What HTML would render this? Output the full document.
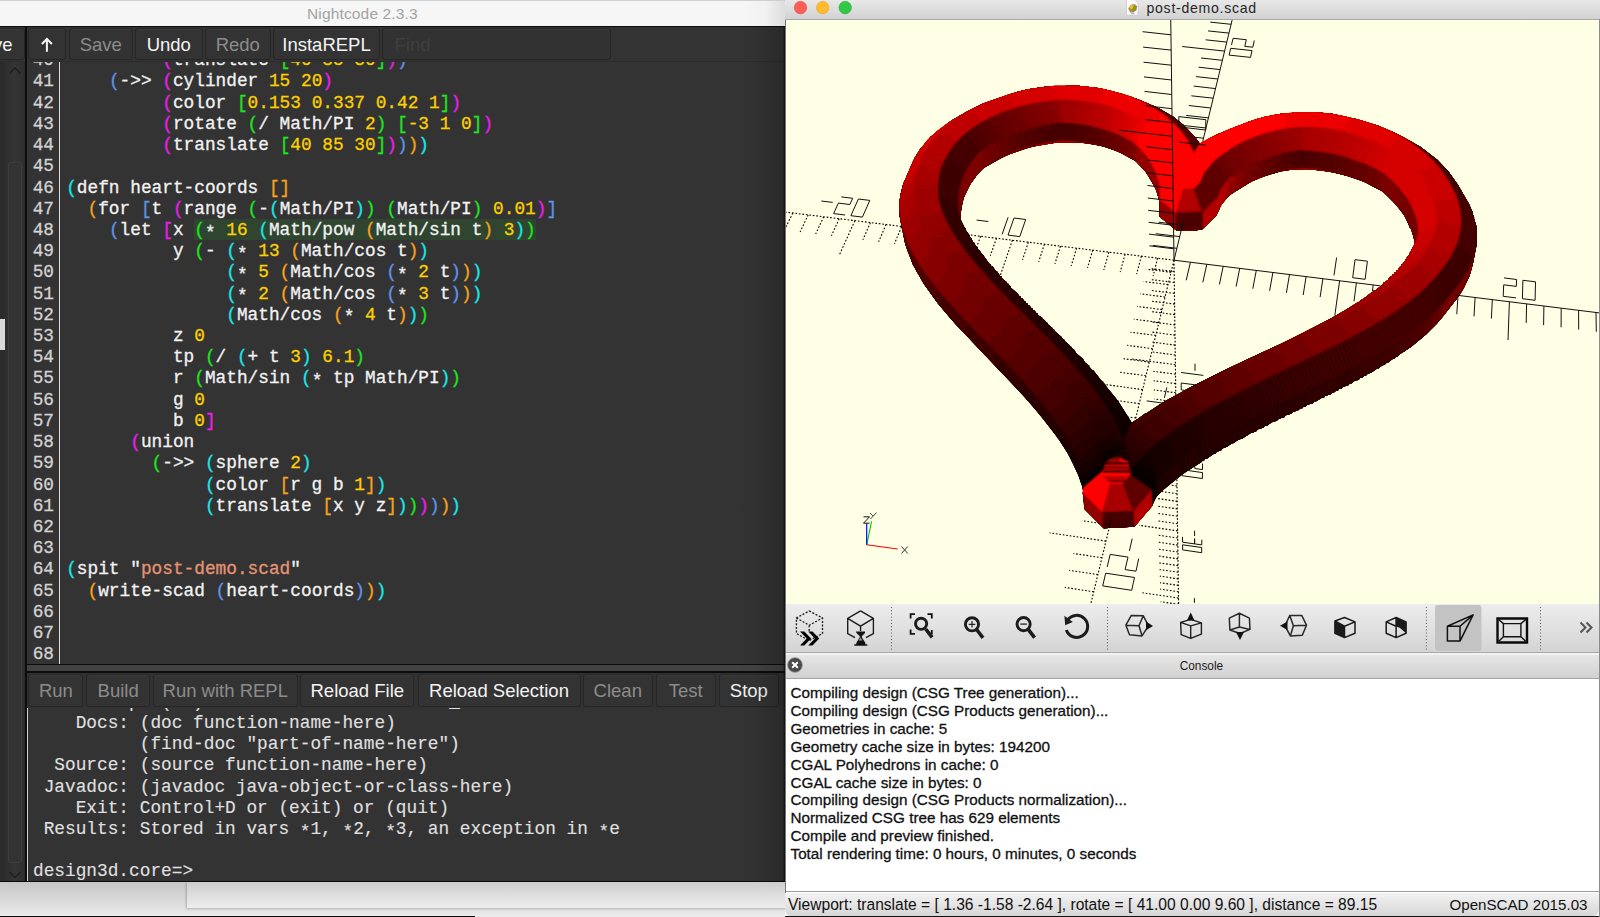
<!DOCTYPE html>
<html><head><meta charset="utf-8"><style>
*{margin:0;padding:0;box-sizing:border-box}
html,body{width:1600px;height:917px;overflow:hidden;background:#e4e4e4;position:relative}
body{font-family:"Liberation Sans",sans-serif}
pre{font-family:"Liberation Mono",monospace;-webkit-text-stroke:0.3px}
i{font-style:normal} b.as{font-weight:normal;position:relative;top:2.6px}
#nc{position:absolute;left:0;top:0;width:785px;height:882px;background:#2c2c2c;overflow:hidden}
#nctitle{position:absolute;left:0;top:0;width:785px;height:25.5px;background:#f6f6f6;border-top:1px solid #cfcfcf}
#nctitle span{position:absolute;left:307px;top:3.9px;font-size:15.5px;color:#a3a3a3;letter-spacing:0.15px;white-space:nowrap}
#ncblk{position:absolute;left:0;top:25.5px;width:785px;height:1.7px;background:#0c0c0c}
#nctool{position:absolute;left:0;top:27.2px;width:785px;height:34.3px;background:#333333}
.btn{position:absolute;top:1px;height:32.3px;background:#333333;border:1px solid #262626;border-radius:3px;box-shadow:inset 0 1px 0 #3b3b3b}
.btn span{position:absolute;left:0;right:0;text-align:center;top:5.3px;font-size:18.5px;color:#f4f4f4;white-space:nowrap}
.btn.dis span{color:#8c8c8c}
.btn.find{background:#323232;border-color:#252525}
.btn.find span{left:12px;right:auto;color:#3f3f3f}
#ncleft{position:absolute;left:0;top:61.5px;width:24.7px;height:820px;background:#2b2b2b}
#sbtrack{position:absolute;left:5px;top:0;width:19px;height:820px;background:linear-gradient(90deg,#2d2d2d,#353535 50%,#2f2f2f)}
#sbthumb{position:absolute;left:8.4px;top:100.5px;width:13.6px;height:701px;border:1px solid #3d3d3d;border-radius:3px;background:#333}
#whiteblk{position:absolute;left:0;top:257px;width:5px;height:31.5px;background:#d9d9d9}
#ncdiv{position:absolute;left:24.7px;top:27.2px;width:2.3px;height:855px;background:#0d0d0d}
#editor{position:absolute;left:27px;top:61.5px;width:758px;height:602.1px;background:#333333;overflow:hidden}
#gutter{position:absolute;left:0;width:27px;top:-11.30px;font-size:17.797px;line-height:21.22px;color:#d2d2d2;text-align:right}
#gline{position:absolute;left:32.2px;top:0;width:1.2px;height:602px;background:#dadada}
#hl{position:absolute;left:167.1px;top:157.75px;width:341.69999999999993px;height:20.7px;background:#2f4530}
#code{position:absolute;left:39.20px;top:-11.30px;font-size:17.797px;line-height:21.22px;color:#f2f2f2}
#split{position:absolute;left:27px;top:663.6px;width:758px;height:9.5px;background:#0c0c0c}
#split:after{content:"";position:absolute;left:0;top:1.9px;width:758px;height:6px;background:#434343}
#replbar{position:absolute;left:27px;top:673px;width:758px;height:35px;background:#313131}
#replbar .btn{top:0.6px;height:33px}
#replbar .btn span{top:5.6px}
#repl{position:absolute;left:27px;top:708px;width:758px;height:173px;background:#333333;overflow:hidden}
#rline{position:absolute;left:0;top:0;width:1.2px;height:173px;background:#d0d0d0}
#rtext{position:absolute;left:6px;top:-16.32px;font-size:17.797px;line-height:21.22px;color:#e0e0e0;-webkit-text-stroke:0.1px}
.c{color:#19e6e6} .o{color:#f7a21b} .b{color:#5e93e8} .m{color:#ee1bee} .g{color:#1ee51e} .y{color:#fcd000} .s{color:#e59474}
#below{position:absolute;left:0;top:882.4px;width:785px;height:34.6px;background:linear-gradient(#c6c6c6,#ececec)}
#belowpanel{position:absolute;left:186.6px;top:0;width:600px;height:25.6px;background:linear-gradient(#cdcdcd,#eeeeee);box-shadow:-1px 1px 2px rgba(0,0,0,0.22)}
#nctshadow{position:absolute;left:745px;top:1px;width:40px;height:24.5px;background:linear-gradient(90deg,rgba(0,0,0,0) 0,rgba(0,0,0,0.02) 50%,rgba(0,0,0,0.1) 100%)}
#ncshadow{position:absolute;left:735px;top:25.5px;width:50px;height:856.5px;background:linear-gradient(90deg,rgba(0,0,0,0) 0,rgba(0,0,0,0.03) 40%,rgba(0,0,0,0.2) 96%,rgba(0,0,0,0.75) 100%)}
#ncbot{position:absolute;left:0;top:880.8px;width:785px;height:1.6px;background:#0b0b0b}
#blkline{position:absolute;left:0;top:915.5px;width:475.4px;height:1.5px;background:#0a0a0a}


#sc{position:absolute;left:785px;top:0;width:815px;height:917px;background:#fff;overflow:hidden}
#sctitle{position:absolute;left:0;top:0;width:815px;height:19.6px;background:linear-gradient(#e8e8e8,#d2d2d2);border-bottom:1px solid #a9a9a9}
#sctitle span{position:absolute;left:361.5px;top:0.3px;font-size:14.1px;color:#262626;letter-spacing:0.72px;white-space:nowrap}
#vpwrap{position:absolute;left:0;top:19.6px;width:814px;height:584.2px;overflow:hidden}
#vpwrap svg{top:-0.6px!important;left:0!important}
#sc:after{content:"";position:absolute;left:813.5px;top:19px;width:1.5px;height:898px;background:#8c8c8c}
#sc:before{content:"";position:absolute;left:0;top:19.6px;width:1px;height:873px;background:#777;z-index:5}
#sctool{position:absolute;left:0;top:603.8px;width:815px;height:48.8px;background:linear-gradient(#ededed,#d4d4d4);border-bottom:1.6px solid #a8a8a8}
#conhead{position:absolute;left:0;top:652.5px;width:815px;height:26px;background:linear-gradient(#f2f2f2 0,#f2f2f2 1.5px,#e6e6e6 2px,#d1d1d1);border-bottom:1px solid #a5a5a5}
#conhead span{position:absolute;left:394.7px;top:6.3px;font-size:11.85px;color:#1a1a1a;white-space:nowrap}
#console{position:absolute;left:0;top:679px;width:813.5px;height:213px;background:#fff;border-bottom:1.3px solid #9e9e9e}
#console pre{position:absolute;left:5.5px;top:5.3px;font-family:"Liberation Sans",sans-serif;font-size:15.25px;line-height:17.84px;color:#111}
#status{position:absolute;left:0;top:893px;width:813.5px;height:23px;background:linear-gradient(#f3f3f3,#d6d6d6);border-bottom-left-radius:6px;border-bottom-right-radius:6px}
#scbot{position:absolute;left:0;top:916px;width:815px;height:1px;background:#111}
#st1{position:absolute;left:3px;top:3.2px;font-size:15.58px;color:#111;white-space:nowrap}
#st2{position:absolute;right:11px;top:3.4px;font-size:15.15px;color:#111;white-space:nowrap}
</style></head>
<body>

<div id="nc">
  <div id="nctitle"><span>Nightcode 2.3.3</span></div>
  <div id="ncblk"></div>
  <div id="nctool">
    <div class="btn" style="left:-40px;width:64.5px"><span style="left:auto;right:11px;text-align:right">ve</span></div>
    <div class="btn" style="left:28px;width:38px"><svg width="38" height="32" style="position:absolute;left:-1px;top:-1px"><path d="M18.9 23.8V10.9 M13.9 16L18.9 11L23.9 16" stroke="#f4f4f4" stroke-width="2" fill="none"/></svg></div>
    <div class="btn dis" style="left:69px;width:63.5px"><span>Save</span></div>
    <div class="btn" style="left:135px;width:67.5px"><span>Undo</span></div>
    <div class="btn dis" style="left:204.5px;width:66.5px"><span>Redo</span></div>
    <div class="btn" style="left:273px;width:107px"><span>InstaREPL</span></div>
    <div class="btn find" style="left:381.5px;width:229.5px"><span>Find</span></div>
  </div>
  <div id="ncleft">
    <div id="sbtrack"></div>
    <div id="sbthumb"></div>
    <svg id="chev" width="24" height="820" style="position:absolute;left:0;top:0">
      <path d="M9.5 11.5 L15 6 L20.5 11.5" stroke="#1e1e1e" stroke-width="1.3" fill="none"/>
      <path d="M9.5 810 L15 815.5 L20.5 810" stroke="#1e1e1e" stroke-width="1.3" fill="none"/>
    </svg>
    <div id="whiteblk"></div>
  </div>
  <div id="ncdiv"></div>
  <div id="editor">
    <pre id="gutter">40
41
42
43
44
45
46
47
48
49
50
51
52
53
54
55
56
57
58
59
60
61
62
63
64
65
66
67
68</pre>
    <div id="gline"></div>
    <div id="hl"></div>
    <pre id="code">         <i class="m">(</i>translate <i class="g">[</i><i class="y">40</i> <i class="y">85</i> <i class="y">30</i><i class="g">]</i><i class="m">)</i><i class="b">)</i>
    <i class="b">(</i>-&gt;&gt; <i class="m">(</i>cylinder <i class="y">15</i> <i class="y">20</i><i class="m">)</i>
         <i class="m">(</i>color <i class="g">[</i><i class="y">0.153</i> <i class="y">0.337</i> <i class="y">0.42</i> <i class="y">1</i><i class="g">]</i><i class="m">)</i>
         <i class="m">(</i>rotate <i class="g">(</i>/ Math/PI <i class="y">2</i><i class="g">)</i> <i class="g">[</i><i class="y">-3</i> <i class="y">1</i> <i class="y">0</i><i class="g">]</i><i class="m">)</i>
         <i class="m">(</i>translate <i class="g">[</i><i class="y">40</i> <i class="y">85</i> <i class="y">30</i><i class="g">]</i><i class="m">)</i><i class="b">)</i><i class="o">)</i><i class="c">)</i>

<i class="c">(</i>defn heart-coords <i class="o">[</i><i class="o">]</i>
  <i class="o">(</i>for <i class="b">[</i>t <i class="m">(</i>range <i class="g">(</i>-<i class="c">(</i>Math/PI<i class="c">)</i><i class="g">)</i> <i class="g">(</i>Math/PI<i class="g">)</i> <i class="y">0.01</i><i class="m">)</i><i class="b">]</i>
    <i class="b">(</i>let <i class="m">[</i>x <i class="g">(</i><b class="as">*</b> <i class="y">16</i> <i class="c">(</i>Math/pow <i class="o">(</i>Math/sin t<i class="o">)</i> <i class="y">3</i><i class="c">)</i><i class="g">)</i>
          y <i class="g">(</i>- <i class="c">(</i><b class="as">*</b> <i class="y">13</i> <i class="o">(</i>Math/cos t<i class="o">)</i><i class="c">)</i>
               <i class="c">(</i><b class="as">*</b> <i class="y">5</i> <i class="o">(</i>Math/cos <i class="b">(</i><b class="as">*</b> <i class="y">2</i> t<i class="b">)</i><i class="o">)</i><i class="c">)</i>
               <i class="c">(</i><b class="as">*</b> <i class="y">2</i> <i class="o">(</i>Math/cos <i class="b">(</i><b class="as">*</b> <i class="y">3</i> t<i class="b">)</i><i class="o">)</i><i class="c">)</i>
               <i class="c">(</i>Math/cos <i class="o">(</i><b class="as">*</b> <i class="y">4</i> t<i class="o">)</i><i class="c">)</i><i class="g">)</i>
          z <i class="y">0</i>
          tp <i class="g">(</i>/ <i class="c">(</i>+ t <i class="y">3</i><i class="c">)</i> <i class="y">6.1</i><i class="g">)</i>
          r <i class="g">(</i>Math/sin <i class="c">(</i><b class="as">*</b> tp Math/PI<i class="c">)</i><i class="g">)</i>
          g <i class="y">0</i>
          b <i class="y">0</i><i class="m">]</i>
      <i class="m">(</i>union
        <i class="g">(</i>-&gt;&gt; <i class="c">(</i>sphere <i class="y">2</i><i class="c">)</i>
             <i class="c">(</i>color <i class="o">[</i>r g b <i class="y">1</i><i class="o">]</i><i class="c">)</i>
             <i class="c">(</i>translate <i class="o">[</i>x y z<i class="o">]</i><i class="c">)</i><i class="g">)</i><i class="m">)</i><i class="b">)</i><i class="o">)</i><i class="c">)</i>


<i class="c">(</i>spit &quot;<i class="s">post-demo.scad</i>&quot;
  <i class="o">(</i>write-scad <i class="b">(</i>heart-coords<i class="b">)</i><i class="o">)</i><i class="c">)</i>


</pre>
  </div>
  <div id="split"></div>
  <div id="replbar">
    <div class="btn dis" style="left:1.4px;width:55px"><span>Run</span></div>
    <div class="btn dis" style="left:59px;width:64.3px"><span>Build</span></div>
    <div class="btn dis" style="left:126px;width:144.5px"><span>Run with REPL</span></div>
    <div class="btn" style="left:273.3px;width:114px"><span>Reload File</span></div>
    <div class="btn" style="left:390.5px;width:163px"><span>Reload Selection</span></div>
    <div class="btn dis" style="left:556px;width:69.5px"><span>Clean</span></div>
    <div class="btn dis" style="left:629px;width:59.5px"><span>Test</span></div>
    <div class="btn" style="left:691.7px;width:60.3px"><span>Stop</span></div>
  </div>
  <div id="repl"><div id="rline"></div><pre id="rtext">Java HotSpot(TM) 64-Bit Server VM 1.8.0_66-b17
    Docs: (doc function-name-here)
          (find-doc &quot;part-of-name-here&quot;)
  Source: (source function-name-here)
 Javadoc: (javadoc java-object-or-class-here)
    Exit: Control+D or (exit) or (quit)
 Results: Stored in vars <b class="as">*</b>1, <b class="as">*</b>2, <b class="as">*</b>3, an exception in <b class="as">*</b>e

design3d.core=&gt;</pre></div>
</div>
<div id="ncbot"></div><div id="ncshadow"></div><div id="nctshadow"></div>
<div id="below"><div id="belowpanel"></div></div><div id="blkline"></div>


<div id="sc">
  <div id="sctitle">
    <svg width="80" height="19" style="position:absolute;left:0;top:0">
      <circle cx="15.5" cy="7.6" r="6.3" fill="#fc5f57" stroke="#e0443e" stroke-width="0.5"/>
      <circle cx="37.7" cy="7.6" r="6.3" fill="#fdbb2f" stroke="#dea123" stroke-width="0.5"/>
      <circle cx="60.2" cy="7.6" r="6.3" fill="#33c748" stroke="#1dad2b" stroke-width="0.5"/>
    </svg>
    <svg width="16" height="17" style="position:absolute;left:340px;top:0">
      <path d="M1.5 -0.5h8.5l3 3.5v12.2h-11.5Z" fill="#fbfbfb" stroke="#c4c4c4" stroke-width="0.7"/>
      <path d="M3.2 8.5l2.8-3.8l3.5-0.6l2.6 2.2l-0.6 4l-3 2.3l-3.2-0.2Z" fill="#b08a4a"/>
      <path d="M4.5 7.5l2-2.5l2.8 0.4l-0.6 3.2l-2.6 0.5Z" fill="#f2c21a"/>
      <path d="M8.6 5.6l2.5 1.5l-0.8 3l-2 1.2l-0.5-2.8Z" fill="#7a9a22"/>
      <path d="M6.2 13.7h3.2" stroke="#888" stroke-width="0.8"/>
    </svg>
    <span>post-demo.scad</span>
  </div>
  <div id="vpwrap"><svg id="vp" width="815" height="585" viewBox="785 19 815 585" style="position:absolute;left:0;top:0">
<rect x="785" y="19" width="815" height="585" fill="#ffffe5"/>
<g fill-rule="evenodd"><path fill="#010000" d="M900.2 195.8 899.2 206.8 899.8 216.8 905.2 243.8 912.8 264.2 923.8 283.8 938.2 303.8 954.8 323.2 1022.8 394.8 1037.2 411.2 1056.8 436.2 1067.8 453.2 1078.8 475.8 1083.2 489.8 1082.8 493.2 1084.8 509.2 1103.8 528.2 1134.2 526.8 1151.2 507.2 1156.8 496.2 1163.2 489.8 1185.2 472.2 1201.2 462.2 1202.8 460.2 1204.2 460.2 1205.2 458.8 1206.8 458.8 1213.8 453.8 1215.2 453.8 1216.8 451.8 1221.2 450.2 1222.8 448.2 1227.2 446.8 1231.8 443.2 1233.2 443.2 1238.2 439.8 1242.8 438.2 1251.2 432.8 1253.2 432.8 1254.2 431.2 1256.2 431.2 1257.8 429.2 1263.2 427.8 1264.8 425.8 1266.8 425.8 1271.8 422.2 1276.8 420.8 1278.8 418.8 1284.2 417.2 1285.8 415.2 1291.2 413.8 1292.8 411.8 1294.8 411.8 1296.2 410.2 1298.2 410.2 1300.2 408.2 1302.2 408.2 1303.2 406.8 1305.2 406.8 1307.2 404.8 1312.8 403.2 1314.2 401.2 1316.2 401.2 1321.8 397.8 1323.8 397.8 1325.2 395.8 1330.8 394.2 1332.2 392.2 1334.2 392.2 1335.8 390.8 1338.2 390.2 1339.2 388.8 1341.2 388.8 1343.2 386.8 1348.2 385.2 1349.8 383.2 1351.8 383.2 1353.8 381.2 1358.8 379.8 1360.2 377.8 1362.2 377.8 1363.8 375.8 1365.8 375.8 1366.8 374.2 1371.8 372.2 1377.2 368.2 1378.8 368.2 1380.2 366.2 1385.2 364.2 1386.2 362.8 1387.8 362.8 1392.8 358.8 1394.2 358.8 1395.8 356.8 1397.2 356.8 1398.8 354.8 1411.2 346.8 1426.2 334.2 1437.2 323.2 1459.8 294.8 1469.2 276.8 1472.8 264.2 1476.8 243.8 1476.2 225.8 1473.8 217.8 1474.2 217.2 1472.2 213.2 1472.8 212.8 1468.8 203.8 1457.8 184.8 1448.2 171.2 1437.2 159.8 1420.2 146.8 1398.8 134.8 1378.2 125.8 1357.2 119.2 1331.8 113.8 1315.2 112.2 1294.8 112.2 1290.8 113.2 1283.8 113.2 1265.2 116.8 1251.2 120.8 1218.8 133.8 1199.8 143.8 1194.8 136.8 1183.2 124.8 1173.2 116.8 1157.8 107.8 1137.8 99.2 1121.8 93.8 1099.8 88.2 1078.2 85.8 1048.8 86.2 1028.2 89.2 1017.8 91.8 983.8 103.2 970.2 109.8 951.2 120.8 930.8 136.8 919.8 149.8 914.8 157.8 903.2 184.2ZM960.2 215.8 963.2 198.8 969.8 184.8 977.8 173.8 983.2 168.2 1006.2 155.2 1031.2 146.8 1053.2 142.8 1077.8 142.2 1088.2 143.2 1104.8 146.8 1119.8 152.2 1136.8 161.8 1146.2 172.2 1155.8 188.8 1159.8 202.2 1159.8 216.8 1176.2 230.2 1193.8 230.8 1202.2 229.2 1216.8 214.8 1221.2 204.8 1229.2 195.2 1251.8 181.2 1262.2 176.8 1282.8 170.8 1294.8 169.2 1310.2 169.2 1330.2 171.8 1350.8 176.8 1364.2 181.8 1383.2 191.8 1398.2 206.8 1405.2 216.8 1410.2 228.2 1411.2 228.8 1414.2 239.2 1414.8 244.2 1412.8 247.2 1412.8 248.8 1411.8 249.2 1411.8 250.8 1409.2 253.8 1409.2 255.2 1407.8 256.2 1403.2 263.8 1401.8 264.2 1401.8 265.8 1398.2 268.8 1398.2 269.8 1396.2 270.8 1396.2 271.8 1394.2 272.8 1394.2 273.8 1392.2 274.8 1392.2 275.8 1390.2 276.8 1387.8 280.2 1383.8 282.8 1383.2 284.2 1375.8 290.2 1373.8 290.8 1373.2 292.2 1371.2 292.8 1368.2 295.8 1360.8 300.2 1359.8 301.8 1321.8 323.8 1286.8 341.2 1223.2 370.8 1183.8 390.8 1183.2 391.8 1163.2 402.2 1131.8 422.8 1118.2 401.2 1105.2 385.2 1105.2 384.2 1103.2 382.8 1103.2 381.8 1101.8 381.2 1093.2 370.2 1092.2 370.2 1089.2 366.8 1089.2 365.8 1085.2 362.8 1082.8 358.8 1076.2 353.2 1073.8 349.2 1072.8 349.2 1071.2 346.8 1070.2 346.8 1068.8 344.2 1067.8 344.2 1066.8 342.2 1065.2 341.8 1064.2 339.8 1062.8 339.2 1061.8 337.2 1054.8 331.2 1054.2 329.8 1052.2 329.2 1052.2 327.8 1050.8 327.2 1049.8 325.2 1048.2 324.8 1047.2 322.8 1046.2 322.8 1044.8 320.2 1042.2 318.8 1042.2 317.8 1038.2 315.2 1037.2 313.2 1035.8 312.8 1034.8 310.8 1033.2 310.2 1032.2 308.2 1030.8 307.8 1029.8 305.8 1028.2 305.2 1027.2 303.2 1026.2 303.2 1025.2 301.2 1023.8 300.8 1022.8 298.8 1021.2 298.2 1020.2 296.2 1018.8 295.8 1017.8 293.8 1010.8 287.8 1010.8 286.2 1009.8 286.2 1008.2 283.8 1007.2 283.8 1006.2 281.8 1001.8 278.2 1001.8 276.8 1000.2 276.2 997.2 271.8 995.8 271.2 992.8 266.8 991.2 266.2 990.8 264.2 989.2 263.8 983.2 255.2 981.2 253.8 979.8 250.8 977.8 249.2 977.8 247.8 974.8 244.8 974.2 242.8 972.8 241.8 971.2 238.2 969.8 237.2 969.8 235.8 965.8 230.2 965.8 228.8 964.8 228.2 960.2 218.8Z"/>
<path fill="#060000" d="M900.2 195.8 899.2 206.8 899.8 216.8 905.2 243.8 912.8 264.2 923.8 283.8 938.2 303.8 954.8 323.2 1022.8 394.8 1037.2 411.2 1056.8 436.2 1067.8 453.2 1078.8 475.8 1083.2 489.8 1082.8 493.2 1084.8 509.2 1103.8 528.2 1134.2 526.8 1151.2 507.2 1156.8 496.2 1163.2 489.8 1185.2 472.2 1201.2 462.2 1202.8 460.2 1204.2 460.2 1205.2 458.8 1206.8 458.8 1213.8 453.8 1215.2 453.8 1216.8 451.8 1221.2 450.2 1222.8 448.2 1227.2 446.8 1231.8 443.2 1233.2 443.2 1238.2 439.8 1242.8 438.2 1251.2 432.8 1253.2 432.8 1254.2 431.2 1256.2 431.2 1257.8 429.2 1263.2 427.8 1264.8 425.8 1266.8 425.8 1271.8 422.2 1276.8 420.8 1278.8 418.8 1284.2 417.2 1285.8 415.2 1291.2 413.8 1292.8 411.8 1294.8 411.8 1296.2 410.2 1298.2 410.2 1300.2 408.2 1302.2 408.2 1303.2 406.8 1305.2 406.8 1307.2 404.8 1312.8 403.2 1314.2 401.2 1316.2 401.2 1321.8 397.8 1323.8 397.8 1325.2 395.8 1330.8 394.2 1332.2 392.2 1334.2 392.2 1335.8 390.8 1338.2 390.2 1339.2 388.8 1341.2 388.8 1343.2 386.8 1348.2 385.2 1349.8 383.2 1351.8 383.2 1353.8 381.2 1358.8 379.8 1360.2 377.8 1362.2 377.8 1363.8 375.8 1365.8 375.8 1366.8 374.2 1371.8 372.2 1377.2 368.2 1378.8 368.2 1380.2 366.2 1385.2 364.2 1386.2 362.8 1387.8 362.8 1392.8 358.8 1394.2 358.8 1395.8 356.8 1397.2 356.8 1398.8 354.8 1411.2 346.8 1426.2 334.2 1437.2 323.2 1459.8 294.8 1469.2 276.8 1472.8 264.2 1476.8 243.8 1476.2 225.8 1473.8 217.8 1474.2 217.2 1472.2 213.2 1472.8 212.8 1468.8 203.8 1457.8 184.8 1448.2 171.2 1437.2 159.8 1420.2 146.8 1398.8 134.8 1378.2 125.8 1357.2 119.2 1331.8 113.8 1315.2 112.2 1294.8 112.2 1290.8 113.2 1283.8 113.2 1265.2 116.8 1251.2 120.8 1218.8 133.8 1199.8 143.8 1194.8 136.8 1183.2 124.8 1173.2 116.8 1157.8 107.8 1137.8 99.2 1121.8 93.8 1099.8 88.2 1078.2 85.8 1048.8 86.2 1028.2 89.2 1017.8 91.8 983.8 103.2 970.2 109.8 951.2 120.8 930.8 136.8 919.8 149.8 914.8 157.8 903.2 184.2ZM960.2 215.8 963.2 198.8 969.8 184.8 977.8 173.8 983.2 168.2 1006.2 155.2 1031.2 146.8 1053.2 142.8 1077.8 142.2 1088.2 143.2 1104.8 146.8 1119.8 152.2 1136.8 161.8 1146.2 172.2 1155.8 188.8 1159.8 202.2 1159.8 216.8 1176.2 230.2 1193.8 230.8 1202.2 229.2 1216.8 214.8 1221.2 204.8 1229.2 195.2 1251.8 181.2 1262.2 176.8 1282.8 170.8 1294.8 169.2 1310.2 169.2 1330.2 171.8 1350.8 176.8 1364.2 181.8 1383.2 191.8 1398.2 206.8 1405.2 216.8 1410.2 228.2 1411.2 228.8 1414.2 239.2 1414.8 244.2 1412.8 247.2 1412.8 248.8 1411.8 249.2 1411.8 250.8 1409.2 253.8 1409.2 255.2 1407.8 256.2 1403.2 263.8 1401.8 264.2 1401.8 265.8 1398.2 268.8 1398.2 269.8 1396.2 270.8 1396.2 271.8 1394.2 272.8 1394.2 273.8 1392.2 274.8 1392.2 275.8 1390.2 276.8 1387.8 280.2 1383.8 282.8 1383.2 284.2 1375.8 290.2 1373.8 290.8 1373.2 292.2 1371.2 292.8 1368.2 295.8 1360.8 300.2 1359.8 301.8 1321.8 323.8 1286.8 341.2 1223.2 370.8 1183.8 390.8 1183.2 391.8 1163.2 402.2 1131.8 422.8 1118.2 401.2 1105.2 385.2 1105.2 384.2 1103.2 382.8 1103.2 381.8 1101.8 381.2 1093.2 370.2 1092.2 370.2 1089.2 366.8 1089.2 365.8 1085.2 362.8 1082.8 358.8 1076.2 353.2 1073.8 349.2 1072.8 349.2 1071.2 346.8 1070.2 346.8 1068.8 344.2 1067.8 344.2 1066.8 342.2 1065.2 341.8 1064.2 339.8 1062.8 339.2 1061.8 337.2 1054.8 331.2 1054.2 329.8 1052.2 329.2 1052.2 327.8 1050.8 327.2 1049.8 325.2 1048.2 324.8 1047.2 322.8 1046.2 322.8 1044.8 320.2 1042.2 318.8 1042.2 317.8 1038.2 315.2 1037.2 313.2 1035.8 312.8 1034.8 310.8 1033.2 310.2 1032.2 308.2 1030.8 307.8 1029.8 305.8 1028.2 305.2 1027.2 303.2 1026.2 303.2 1025.2 301.2 1023.8 300.8 1022.8 298.8 1021.2 298.2 1020.2 296.2 1018.8 295.8 1017.8 293.8 1010.8 287.8 1010.8 286.2 1009.8 286.2 1008.2 283.8 1007.2 283.8 1006.2 281.8 1001.8 278.2 1001.8 276.8 1000.2 276.2 997.2 271.8 995.8 271.2 992.8 266.8 991.2 266.2 990.8 264.2 989.2 263.8 983.2 255.2 981.2 253.8 979.8 250.8 977.8 249.2 977.8 247.8 974.8 244.8 974.2 242.8 972.8 241.8 971.2 238.2 969.8 237.2 969.8 235.8 965.8 230.2 965.8 228.8 964.8 228.2 960.2 218.8Z"/>
<path fill="#0a0000" d="M900.2 195.8 899.2 206.8 899.8 216.8 905.2 243.8 912.8 264.2 923.8 283.8 938.2 303.8 954.8 323.2 1022.8 394.8 1037.2 411.2 1056.8 436.2 1067.8 453.2 1078.8 475.8 1083.2 489.8 1082.8 493.2 1084.8 509.2 1103.8 528.2 1134.2 526.8 1151.2 507.2 1156.8 496.2 1163.2 489.8 1185.2 472.2 1201.2 462.2 1202.8 460.2 1204.2 460.2 1205.2 458.8 1206.8 458.8 1213.8 453.8 1215.2 453.8 1216.8 451.8 1221.2 450.2 1222.8 448.2 1227.2 446.8 1231.8 443.2 1233.2 443.2 1238.2 439.8 1242.8 438.2 1251.2 432.8 1253.2 432.8 1254.2 431.2 1256.2 431.2 1257.8 429.2 1263.2 427.8 1264.8 425.8 1266.8 425.8 1271.8 422.2 1276.8 420.8 1278.8 418.8 1284.2 417.2 1285.8 415.2 1291.2 413.8 1292.8 411.8 1294.8 411.8 1296.2 410.2 1298.2 410.2 1300.2 408.2 1302.2 408.2 1303.2 406.8 1305.2 406.8 1307.2 404.8 1312.8 403.2 1314.2 401.2 1316.2 401.2 1321.8 397.8 1323.8 397.8 1325.2 395.8 1330.8 394.2 1332.2 392.2 1334.2 392.2 1335.8 390.8 1338.2 390.2 1339.2 388.8 1341.2 388.8 1343.2 386.8 1348.2 385.2 1349.8 383.2 1351.8 383.2 1353.8 381.2 1358.8 379.8 1360.2 377.8 1362.2 377.8 1363.8 375.8 1365.8 375.8 1366.8 374.2 1371.8 372.2 1377.2 368.2 1378.8 368.2 1380.2 366.2 1385.2 364.2 1386.2 362.8 1387.8 362.8 1392.8 358.8 1394.2 358.8 1395.8 356.8 1397.2 356.8 1398.8 354.8 1411.2 346.8 1426.2 334.2 1437.2 323.2 1459.8 294.8 1469.2 276.8 1472.8 264.2 1476.8 243.8 1476.2 225.8 1473.8 217.8 1474.2 217.2 1472.2 213.2 1472.8 212.8 1468.8 203.8 1457.8 184.8 1448.2 171.2 1437.2 159.8 1420.2 146.8 1398.8 134.8 1378.2 125.8 1357.2 119.2 1331.8 113.8 1315.2 112.2 1294.8 112.2 1290.8 113.2 1283.8 113.2 1265.2 116.8 1251.2 120.8 1218.8 133.8 1199.8 143.8 1194.8 136.8 1183.2 124.8 1173.2 116.8 1157.8 107.8 1137.8 99.2 1121.8 93.8 1099.8 88.2 1078.2 85.8 1048.8 86.2 1028.2 89.2 1017.8 91.8 983.8 103.2 970.2 109.8 951.2 120.8 930.8 136.8 919.8 149.8 914.8 157.8 903.2 184.2ZM1134.8 468.2 1136.8 467.8 1154.8 480.8 1152.8 488.2 1148.8 486.2 1132.2 474.2 1132.2 471.8ZM1101.8 468.2 1099.8 471.8 1084.8 484.8 1082.8 484.8 1084.2 482.2 1101.2 467.8ZM1111.8 456.2 1105.8 460.2 1104.8 459.8 1104.8 458.8 1108.8 455.2 1110.8 455.2ZM960.2 215.8 963.2 198.8 969.8 184.8 977.8 173.8 983.2 168.2 1006.2 155.2 1031.2 146.8 1053.2 142.8 1077.8 142.2 1088.2 143.2 1104.8 146.8 1119.8 152.2 1136.8 161.8 1146.2 172.2 1155.8 188.8 1159.8 202.2 1159.8 216.8 1176.2 230.2 1193.8 230.8 1202.2 229.2 1216.8 214.8 1221.2 204.8 1229.2 195.2 1251.8 181.2 1262.2 176.8 1282.8 170.8 1294.8 169.2 1310.2 169.2 1330.2 171.8 1350.8 176.8 1364.2 181.8 1383.2 191.8 1398.2 206.8 1405.2 216.8 1410.2 228.2 1411.2 228.8 1414.2 239.2 1414.8 244.2 1412.8 247.2 1412.8 248.8 1411.8 249.2 1411.8 250.8 1409.2 253.8 1409.2 255.2 1407.8 256.2 1403.2 263.8 1401.8 264.2 1401.8 265.8 1398.2 268.8 1398.2 269.8 1396.2 270.8 1396.2 271.8 1394.2 272.8 1394.2 273.8 1392.2 274.8 1392.2 275.8 1390.2 276.8 1387.8 280.2 1383.8 282.8 1383.2 284.2 1375.8 290.2 1373.8 290.8 1373.2 292.2 1371.2 292.8 1368.2 295.8 1360.8 300.2 1359.8 301.8 1321.8 323.8 1286.8 341.2 1223.2 370.8 1183.8 390.8 1183.2 391.8 1163.2 402.2 1131.8 422.8 1118.2 401.2 1105.2 385.2 1105.2 384.2 1103.2 382.8 1103.2 381.8 1101.8 381.2 1093.2 370.2 1092.2 370.2 1089.2 366.8 1089.2 365.8 1085.2 362.8 1082.8 358.8 1076.2 353.2 1073.8 349.2 1072.8 349.2 1071.2 346.8 1070.2 346.8 1068.8 344.2 1067.8 344.2 1066.8 342.2 1065.2 341.8 1064.2 339.8 1062.8 339.2 1061.8 337.2 1054.8 331.2 1054.2 329.8 1052.2 329.2 1052.2 327.8 1050.8 327.2 1049.8 325.2 1048.2 324.8 1047.2 322.8 1046.2 322.8 1044.8 320.2 1042.2 318.8 1042.2 317.8 1038.2 315.2 1037.2 313.2 1035.8 312.8 1034.8 310.8 1033.2 310.2 1032.2 308.2 1030.8 307.8 1029.8 305.8 1028.2 305.2 1027.2 303.2 1026.2 303.2 1025.2 301.2 1023.8 300.8 1022.8 298.8 1021.2 298.2 1020.2 296.2 1018.8 295.8 1017.8 293.8 1010.8 287.8 1010.8 286.2 1009.8 286.2 1008.2 283.8 1007.2 283.8 1006.2 281.8 1001.8 278.2 1001.8 276.8 1000.2 276.2 997.2 271.8 995.8 271.2 992.8 266.8 991.2 266.2 990.8 264.2 989.2 263.8 983.2 255.2 981.2 253.8 979.8 250.8 977.8 249.2 977.8 247.8 974.8 244.8 974.2 242.8 972.8 241.8 971.2 238.2 969.8 237.2 969.8 235.8 965.8 230.2 965.8 228.8 964.8 228.2 960.2 218.8Z"/>
<path fill="#100000" d="M900.2 195.8 899.2 206.8 899.8 216.8 905.2 243.8 912.8 264.2 923.8 283.8 938.2 303.8 954.8 323.2 1022.8 394.8 1043.2 418.8 1056.8 436.2 1067.8 453.2 1075.8 468.8 1081.2 484.2 1081.2 478.2 1083.8 478.8 1101.2 463.2 1103.2 456.2 1105.8 453.2 1114.2 448.2 1116.8 448.2 1117.8 449.2 1119.2 453.2 1116.2 454.2 1113.2 453.8 1111.8 457.2 1107.8 458.8 1103.8 462.8 1102.2 469.2 1082.2 486.2 1083.2 489.8 1082.8 493.2 1084.8 509.2 1103.8 528.2 1134.2 526.8 1152.2 505.8 1153.8 502.2 1152.8 497.8 1152.8 489.2 1131.8 474.2 1132.8 469.2 1140.8 459.8 1148.2 467.2 1148.8 469.2 1156.8 478.2 1155.2 484.2 1156.2 497.2 1163.2 489.8 1181.2 475.2 1191.2 468.8 1192.2 467.2 1201.2 462.2 1202.8 460.2 1204.2 460.2 1205.2 458.8 1206.8 458.8 1213.8 453.8 1215.2 453.8 1216.8 451.8 1221.2 450.2 1222.8 448.2 1227.2 446.8 1231.8 443.2 1233.2 443.2 1238.2 439.8 1242.8 438.2 1251.2 432.8 1256.2 431.2 1257.8 429.2 1263.2 427.8 1264.8 425.8 1266.8 425.8 1271.8 422.2 1276.8 420.8 1278.8 418.8 1284.2 417.2 1285.8 415.2 1291.2 413.8 1292.8 411.8 1294.8 411.8 1296.2 410.2 1298.2 410.2 1300.2 408.2 1302.2 408.2 1303.2 406.8 1305.2 406.8 1307.2 404.8 1312.8 403.2 1314.2 401.2 1316.2 401.2 1321.8 397.8 1323.8 397.8 1325.2 395.8 1330.8 394.2 1332.2 392.2 1334.2 392.2 1335.8 390.8 1338.2 390.2 1339.2 388.8 1341.2 388.8 1343.2 386.8 1348.2 385.2 1349.8 383.2 1351.8 383.2 1353.8 381.2 1358.8 379.8 1360.2 377.8 1362.2 377.8 1363.8 375.8 1365.8 375.8 1366.8 374.2 1371.8 372.2 1377.2 368.2 1378.8 368.2 1380.2 366.2 1385.2 364.2 1386.2 362.8 1387.8 362.8 1392.8 358.8 1394.2 358.8 1395.8 356.8 1397.2 356.8 1398.8 354.8 1411.2 346.8 1426.2 334.2 1437.2 323.2 1459.8 294.8 1469.2 276.8 1472.8 264.2 1476.8 243.8 1476.2 225.8 1473.8 217.8 1474.2 217.2 1472.2 213.2 1472.8 212.8 1468.8 203.8 1457.8 184.8 1448.2 171.2 1437.2 159.8 1420.2 146.8 1398.8 134.8 1378.2 125.8 1357.2 119.2 1331.8 113.8 1315.2 112.2 1294.8 112.2 1290.8 113.2 1283.8 113.2 1265.2 116.8 1251.2 120.8 1218.8 133.8 1199.8 143.8 1194.8 136.8 1183.2 124.8 1173.2 116.8 1157.8 107.8 1137.8 99.2 1121.8 93.8 1099.8 88.2 1078.2 85.8 1048.8 86.2 1028.2 89.2 1017.8 91.8 983.8 103.2 970.2 109.8 951.2 120.8 930.8 136.8 919.8 149.8 914.8 157.8 903.2 184.2ZM1120.8 424.8 1122.8 426.8 1127.8 425.8 1126.2 427.2 1127.2 429.2 1123.8 437.2 1121.2 432.2 1121.8 430.8 1120.2 429.2 1120.8 426.8 1119.8 425.8ZM960.2 215.8 963.2 198.8 969.8 184.8 977.8 173.8 983.2 168.2 1006.2 155.2 1031.2 146.8 1053.2 142.8 1077.8 142.2 1088.2 143.2 1104.8 146.8 1119.8 152.2 1136.8 161.8 1146.2 172.2 1155.8 188.8 1159.8 202.2 1159.8 216.8 1176.2 230.2 1193.8 230.8 1202.2 229.2 1216.8 214.8 1221.2 204.8 1229.2 195.2 1251.8 181.2 1262.2 176.8 1282.8 170.8 1294.8 169.2 1310.2 169.2 1330.2 171.8 1350.8 176.8 1364.2 181.8 1383.2 191.8 1398.2 206.8 1405.2 216.8 1410.2 228.2 1411.2 228.8 1414.2 239.2 1414.8 244.2 1412.8 247.2 1412.8 248.8 1411.8 249.2 1411.8 250.8 1409.2 253.8 1409.2 255.2 1407.8 256.2 1403.2 263.8 1401.8 264.2 1401.8 265.8 1398.2 268.8 1398.2 269.8 1396.2 270.8 1396.2 271.8 1394.2 272.8 1394.2 273.8 1392.2 274.8 1392.2 275.8 1390.2 276.8 1387.8 280.2 1383.8 282.8 1383.2 284.2 1375.8 290.2 1373.8 290.8 1373.2 292.2 1371.2 292.8 1368.2 295.8 1360.8 300.2 1359.8 301.8 1321.8 323.8 1286.8 341.2 1223.2 370.8 1183.8 390.8 1183.2 391.8 1163.2 402.2 1131.8 422.8 1118.2 401.2 1105.2 385.2 1105.2 384.2 1103.2 382.8 1103.2 381.8 1101.8 381.2 1093.2 370.2 1092.2 370.2 1089.2 366.8 1089.2 365.8 1085.2 362.8 1082.8 358.8 1076.2 353.2 1073.8 349.2 1072.8 349.2 1071.2 346.8 1070.2 346.8 1068.8 344.2 1067.8 344.2 1066.8 342.2 1065.2 341.8 1064.2 339.8 1062.8 339.2 1061.8 337.2 1054.8 331.2 1054.2 329.8 1052.2 329.2 1052.2 327.8 1050.8 327.2 1049.8 325.2 1048.2 324.8 1047.2 322.8 1046.2 322.8 1044.8 320.2 1042.2 318.8 1042.2 317.8 1038.2 315.2 1037.2 313.2 1035.8 312.8 1034.8 310.8 1033.2 310.2 1032.2 308.2 1030.8 307.8 1029.8 305.8 1028.2 305.2 1027.2 303.2 1026.2 303.2 1025.2 301.2 1023.8 300.8 1022.8 298.8 1021.2 298.2 1020.2 296.2 1018.8 295.8 1017.8 293.8 1010.8 287.8 1010.8 286.2 1009.8 286.2 1008.2 283.8 1007.2 283.8 1006.2 281.8 1001.8 278.2 1001.8 276.8 1000.2 276.2 997.2 271.8 995.8 271.2 992.8 266.8 991.2 266.2 990.8 264.2 989.2 263.8 983.2 255.2 981.2 253.8 979.8 250.8 977.8 249.2 977.8 247.8 974.8 244.8 974.2 242.8 972.8 241.8 971.2 238.2 969.8 237.2 969.8 235.8 965.8 230.2 965.8 228.8 964.8 228.2 960.2 218.8Z"/>
<path fill="#160000" d="M1117.2 400.2 1118.8 405.2 1121.2 409.2 1122.8 409.8 1123.2 409.2ZM900.2 195.8 899.2 206.8 899.8 216.8 905.2 243.8 912.8 264.2 923.8 283.8 938.2 303.8 954.8 323.2 1009.2 380.2 1037.2 411.2 1061.2 442.8 1070.8 458.8 1077.2 473.2 1077.2 463.8 1082.8 473.8 1099.8 458.8 1102.8 448.8 1104.2 447.2 1112.2 446.2 1115.8 444.8 1125.2 447.8 1124.8 448.8 1119.2 449.2 1118.8 450.8 1120.2 452.2 1126.2 452.2 1127.2 453.2 1126.8 453.8 1121.2 453.8 1118.8 456.8 1117.2 455.2 1115.2 455.2 1114.2 456.8 1108.2 458.8 1104.2 462.8 1102.2 469.8 1082.2 486.8 1083.2 489.8 1082.8 493.2 1084.8 509.2 1103.8 528.2 1134.2 526.8 1152.2 505.8 1153.2 503.2 1152.2 488.8 1131.8 474.2 1132.2 468.8 1138.8 460.8 1147.2 453.8 1149.2 454.8 1148.2 457.2 1149.2 456.2 1151.8 457.2 1149.8 461.2 1150.8 460.2 1151.8 461.2 1152.2 464.2 1151.2 464.2 1151.2 465.2 1152.2 464.2 1153.8 466.8 1153.8 468.2 1152.2 468.8 1153.2 469.2 1153.8 468.2 1154.8 469.2 1155.2 472.2 1154.2 472.2 1154.2 473.2 1155.2 472.2 1157.8 476.8 1156.8 480.8 1157.8 495.2 1170.8 483.2 1185.2 472.2 1201.2 462.2 1202.8 460.2 1204.2 460.2 1205.2 458.8 1206.8 458.8 1213.8 453.8 1215.2 453.8 1216.8 451.8 1221.2 450.2 1222.8 448.2 1227.2 446.8 1231.8 443.2 1233.2 443.2 1238.2 439.8 1242.8 438.2 1251.2 432.8 1256.2 431.2 1257.8 429.2 1263.2 427.8 1264.8 425.8 1266.8 425.8 1271.8 422.2 1276.8 420.8 1278.8 418.8 1284.2 417.2 1285.8 415.2 1291.2 413.8 1292.8 411.8 1294.8 411.8 1296.2 410.2 1298.2 410.2 1300.2 408.2 1302.2 408.2 1303.2 406.8 1305.2 406.8 1307.2 404.8 1312.8 403.2 1314.2 401.2 1316.2 401.2 1321.8 397.8 1323.8 397.8 1325.2 395.8 1330.8 394.2 1332.2 392.2 1334.2 392.2 1335.8 390.8 1338.2 390.2 1339.2 388.8 1341.2 388.8 1343.2 386.8 1348.2 385.2 1349.8 383.2 1351.8 383.2 1353.8 381.2 1358.8 379.8 1360.2 377.8 1362.2 377.8 1363.8 375.8 1365.8 375.8 1366.8 374.2 1371.8 372.2 1377.2 368.2 1378.8 368.2 1380.2 366.2 1385.2 364.2 1386.2 362.8 1387.8 362.8 1392.8 358.8 1394.2 358.8 1395.8 356.8 1397.2 356.8 1398.8 354.8 1411.2 346.8 1426.2 334.2 1437.2 323.2 1459.8 294.8 1469.2 276.8 1472.8 264.2 1476.8 243.8 1476.2 225.8 1473.8 217.8 1474.2 217.2 1472.2 213.2 1472.8 212.8 1468.8 203.8 1457.8 184.8 1448.2 171.2 1437.2 159.8 1420.2 146.8 1398.8 134.8 1378.2 125.8 1357.2 119.2 1331.8 113.8 1315.2 112.2 1294.8 112.2 1290.8 113.2 1283.8 113.2 1265.2 116.8 1251.2 120.8 1218.8 133.8 1199.8 143.8 1194.8 136.8 1183.2 124.8 1173.2 116.8 1157.8 107.8 1137.8 99.2 1121.8 93.8 1099.8 88.2 1078.2 85.8 1048.8 86.2 1028.2 89.2 1017.8 91.8 983.8 103.2 970.2 109.8 951.2 120.8 930.8 136.8 919.8 149.8 914.8 157.8 903.2 184.2ZM960.2 215.8 963.2 198.8 969.8 184.8 977.8 173.8 983.2 168.2 1006.2 155.2 1031.2 146.8 1053.2 142.8 1077.8 142.2 1088.2 143.2 1104.8 146.8 1119.8 152.2 1136.8 161.8 1146.2 172.2 1155.8 188.8 1159.8 202.2 1159.8 216.8 1176.2 230.2 1193.8 230.8 1202.2 229.2 1216.8 214.8 1221.2 204.8 1229.2 195.2 1251.8 181.2 1262.2 176.8 1282.8 170.8 1294.8 169.2 1310.2 169.2 1330.2 171.8 1350.8 176.8 1364.2 181.8 1383.2 191.8 1398.2 206.8 1405.2 216.8 1410.2 228.2 1411.2 228.8 1414.2 239.2 1414.8 244.2 1412.8 247.2 1412.8 248.8 1411.8 249.2 1411.8 250.8 1409.2 253.8 1409.2 255.2 1407.8 256.2 1403.2 263.8 1401.8 264.2 1401.8 265.8 1398.2 268.8 1398.2 269.8 1396.2 270.8 1396.2 271.8 1394.2 272.8 1394.2 273.8 1392.2 274.8 1392.2 275.8 1390.2 276.8 1387.8 280.2 1383.8 282.8 1383.2 284.2 1375.8 290.2 1373.8 290.8 1373.2 292.2 1371.2 292.8 1368.2 295.8 1360.8 300.2 1359.8 301.8 1321.8 323.8 1286.8 341.2 1223.2 370.8 1165.8 400.8 1146.8 413.2 1144.8 413.8 1132.8 422.8 1131.2 422.2 1123.8 438.8 1116.2 421.2 1105.2 402.2 1106.2 399.8 1107.2 400.8 1109.2 406.8 1111.2 408.8 1110.2 401.2 1111.8 399.8 1113.2 404.8 1116.8 409.2 1117.2 408.8 1115.8 405.8 1116.2 399.2 1115.2 397.2 1103.2 382.8 1103.2 381.8 1101.8 381.2 1093.2 370.2 1092.2 370.2 1089.2 366.8 1089.2 365.8 1085.2 362.8 1082.8 358.8 1076.2 353.2 1073.8 349.2 1072.8 349.2 1071.2 346.8 1070.2 346.8 1068.8 344.2 1067.8 344.2 1066.8 342.2 1065.2 341.8 1064.2 339.8 1062.8 339.2 1061.8 337.2 1054.8 331.2 1054.2 329.8 1052.2 329.2 1052.2 327.8 1050.8 327.2 1049.8 325.2 1048.2 324.8 1047.2 322.8 1046.2 322.8 1044.8 320.2 1042.2 318.8 1042.2 317.8 1038.2 315.2 1037.2 313.2 1035.8 312.8 1034.8 310.8 1033.2 310.2 1032.2 308.2 1030.8 307.8 1029.8 305.8 1028.2 305.2 1027.2 303.2 1026.2 303.2 1025.2 301.2 1023.8 300.8 1022.8 298.8 1021.2 298.2 1020.2 296.2 1018.8 295.8 1017.8 293.8 1010.8 287.8 1010.8 286.2 1009.8 286.2 1008.2 283.8 1007.2 283.8 1006.2 281.8 1001.8 278.2 1001.8 276.8 1000.2 276.2 997.2 271.8 995.8 271.2 992.8 266.8 991.2 266.2 990.8 264.2 989.2 263.8 983.2 255.2 981.2 253.8 979.8 250.8 977.8 249.2 977.8 247.8 974.8 244.8 974.2 242.8 972.8 241.8 971.2 238.2 969.8 237.2 969.8 235.8 965.8 230.2 965.8 228.8 964.8 228.2 960.2 218.8Z"/>
<path fill="#1d0000" d="M1100.2 379.2 1100.8 380.2 1099.8 381.2 1100.8 383.8 1101.8 380.8ZM900.2 195.8 899.2 206.8 899.8 216.8 905.2 243.8 912.8 264.2 923.8 283.8 938.2 303.8 954.8 323.2 1009.2 380.2 1037.2 411.2 1056.8 436.2 1067.8 453.2 1069.8 457.8 1070.2 454.2 1069.2 448.8 1070.8 448.2 1078.2 462.8 1081.2 466.8 1091.2 458.8 1093.8 455.8 1096.2 454.8 1098.2 451.8 1099.2 447.2 1101.2 445.8 1101.8 441.8 1113.8 439.8 1122.8 440.8 1123.8 441.8 1126.2 448.8 1125.2 449.8 1119.2 449.8 1119.2 450.8 1120.2 451.8 1126.8 451.8 1127.8 452.8 1127.8 454.8 1126.8 455.8 1121.8 455.8 1120.2 456.8 1118.2 456.8 1115.8 455.2 1114.2 456.8 1107.8 459.2 1104.2 462.8 1102.2 469.8 1082.2 487.2 1083.2 489.8 1082.8 493.2 1084.8 509.2 1103.8 528.2 1134.2 526.8 1152.2 505.8 1153.2 503.2 1152.2 489.2 1131.8 474.8 1131.8 469.8 1130.2 466.8 1133.2 466.8 1147.8 451.8 1160.2 442.2 1162.2 444.8 1169.8 464.8 1169.8 467.2 1168.8 467.8 1167.8 466.8 1168.2 468.8 1166.2 469.8 1162.8 474.8 1161.2 474.8 1157.8 480.2 1158.2 494.8 1170.8 483.2 1185.2 472.2 1201.2 462.2 1202.8 460.2 1204.2 460.2 1205.2 458.8 1206.8 458.8 1213.8 453.8 1215.2 453.8 1216.8 451.8 1221.2 450.2 1222.8 448.2 1227.2 446.8 1231.8 443.2 1233.2 443.2 1238.2 439.8 1242.8 438.2 1251.2 432.8 1256.2 431.2 1257.8 429.2 1263.2 427.8 1264.8 425.8 1266.8 425.8 1271.8 422.2 1276.8 420.8 1278.8 418.8 1284.2 417.2 1285.8 415.2 1291.2 413.8 1292.8 411.8 1294.8 411.8 1296.2 410.2 1298.2 410.2 1300.2 408.2 1302.2 408.2 1303.2 406.8 1305.2 406.8 1307.2 404.8 1312.8 403.2 1314.2 401.2 1316.2 401.2 1321.8 397.8 1323.8 397.8 1325.2 395.8 1330.8 394.2 1332.2 392.2 1334.2 392.2 1335.8 390.8 1338.2 390.2 1339.2 388.8 1341.2 388.8 1343.2 386.8 1348.2 385.2 1349.8 383.2 1351.8 383.2 1353.8 381.2 1358.8 379.8 1360.2 377.8 1362.2 377.8 1363.8 375.8 1365.8 375.8 1366.8 374.2 1371.8 372.2 1377.2 368.2 1378.8 368.2 1380.2 366.2 1385.2 364.2 1386.2 362.8 1387.8 362.8 1392.8 358.8 1394.2 358.8 1395.8 356.8 1397.2 356.8 1398.8 354.8 1411.2 346.8 1426.2 334.2 1437.2 323.2 1459.8 294.8 1469.2 276.8 1472.8 264.2 1476.8 243.8 1476.2 225.8 1473.8 217.8 1474.2 217.2 1472.2 213.2 1472.8 212.8 1468.8 203.8 1457.8 184.8 1448.2 171.2 1437.2 159.8 1420.2 146.8 1398.8 134.8 1378.2 125.8 1357.2 119.2 1331.8 113.8 1315.2 112.2 1294.8 112.2 1290.8 113.2 1283.8 113.2 1265.2 116.8 1251.2 120.8 1218.8 133.8 1199.8 143.8 1194.8 136.8 1183.2 124.8 1173.2 116.8 1157.8 107.8 1137.8 99.2 1121.8 93.8 1099.8 88.2 1078.2 85.8 1048.8 86.2 1028.2 89.2 1017.8 91.8 983.8 103.2 970.2 109.8 951.2 120.8 930.8 136.8 919.8 149.8 914.8 157.8 903.2 184.2ZM1129.2 462.8 1130.2 462.2 1131.2 463.8 1130.2 464.8ZM1121.2 456.2 1127.2 455.8 1128.8 457.8 1125.2 458.8ZM1161.8 440.8 1163.8 442.8 1170.2 461.2 1172.8 465.8 1170.8 466.2 1169.2 464.2 1169.2 462.2 1167.8 460.2 1167.8 458.2 1161.8 444.2ZM1164.2 439.2 1173.8 462.8 1173.2 464.2 1171.8 462.8 1163.8 441.2ZM1166.2 437.8 1174.8 458.8 1174.8 461.8 1166.2 440.8ZM1092.2 372.2 1091.8 381.2 1089.8 382.2 1088.8 380.2 1091.2 372.8ZM1088.2 371.8 1088.2 376.8 1086.8 378.2 1085.8 376.2 1087.2 372.2ZM1084.2 371.2 1084.8 372.2 1083.8 374.2 1083.2 371.8ZM960.2 215.8 963.2 198.8 969.8 184.8 977.8 173.8 983.2 168.2 1006.2 155.2 1031.2 146.8 1053.2 142.8 1077.8 142.2 1088.2 143.2 1104.8 146.8 1119.8 152.2 1136.8 161.8 1146.2 172.2 1155.8 188.8 1159.8 202.2 1159.8 216.8 1176.2 230.2 1193.8 230.8 1202.2 229.2 1216.8 214.8 1221.2 204.8 1229.2 195.2 1251.8 181.2 1262.2 176.8 1282.8 170.8 1294.8 169.2 1310.2 169.2 1330.2 171.8 1350.8 176.8 1364.2 181.8 1383.2 191.8 1398.2 206.8 1405.2 216.8 1410.2 228.2 1411.2 228.8 1414.2 239.2 1414.8 244.2 1412.8 247.2 1412.8 248.8 1411.8 249.2 1411.8 250.8 1409.2 253.8 1409.2 255.2 1407.8 256.2 1403.2 263.8 1401.8 264.2 1401.8 265.8 1398.2 268.8 1398.2 269.8 1396.2 270.8 1396.2 271.8 1394.2 272.8 1394.2 273.8 1392.2 274.8 1392.2 275.8 1390.2 276.8 1387.8 280.2 1383.8 282.8 1383.2 284.2 1375.8 290.2 1373.8 290.8 1373.2 292.2 1371.2 292.8 1368.2 295.8 1360.8 300.2 1359.8 301.8 1321.8 323.8 1286.8 341.2 1223.2 370.8 1165.8 400.8 1146.8 413.2 1144.8 413.8 1132.8 422.8 1131.2 422.8 1127.8 429.8 1125.8 436.2 1123.2 439.8 1116.8 423.8 1111.8 414.2 1104.2 402.8 1103.2 399.8 1101.2 398.2 1098.8 393.2 1096.2 391.2 1095.2 388.8 1091.8 384.8 1092.2 384.2 1091.2 383.2 1092.2 382.8 1093.8 377.2 1095.8 374.2 1096.8 375.2 1095.8 376.8 1095.8 383.2 1096.8 383.2 1097.8 377.8 1098.8 377.2 1093.8 371.2 1092.2 370.8 1092.8 370.2 1087.2 364.8 1086.8 363.2 1085.2 362.8 1082.8 358.8 1076.2 353.2 1073.8 349.2 1072.8 349.2 1071.2 346.8 1070.2 346.8 1068.8 344.2 1067.8 344.2 1066.8 342.2 1065.2 341.8 1064.2 339.8 1062.8 339.2 1061.8 337.2 1054.8 331.2 1054.2 329.8 1052.8 329.8 1052.2 327.8 1050.8 327.2 1049.8 325.2 1048.2 324.8 1047.2 322.8 1046.2 322.8 1044.8 320.2 1042.2 318.8 1042.2 317.8 1038.2 315.2 1037.2 313.2 1035.8 312.8 1034.8 310.8 1033.2 310.2 1032.2 308.2 1030.8 307.8 1029.8 305.8 1028.2 305.2 1027.2 303.2 1026.2 303.2 1025.2 301.2 1023.8 300.8 1022.8 298.8 1021.2 298.2 1020.2 296.2 1018.8 295.8 1017.8 293.8 1010.8 287.8 1010.8 286.2 1009.8 286.2 1008.2 283.8 1007.2 283.8 1006.2 281.8 1001.8 278.2 1001.8 276.8 1000.2 276.2 997.2 271.8 995.8 271.2 992.8 266.8 991.2 266.2 990.8 264.2 989.2 263.8 983.2 255.2 981.2 253.8 979.8 250.8 977.8 249.2 977.8 247.8 974.8 244.8 974.2 242.8 972.8 241.8 971.2 238.2 969.8 237.2 969.8 235.8 965.8 230.2 965.8 228.8 964.8 228.2 960.2 218.8Z"/>
<path fill="#240000" d="M1164.2 485.2 1162.8 486.2 1163.2 487.8 1164.2 487.2ZM1177.8 462.2 1173.8 465.8 1172.8 467.8 1171.2 467.8 1170.8 483.2 1170.2 469.2 1169.2 469.8 1169.8 484.2 1176.2 479.2 1176.2 473.8 1178.2 473.2ZM1182.2 458.8 1181.8 464.8 1180.8 465.8 1179.8 465.2 1179.8 476.2 1182.8 474.2ZM1116.8 433.8 1116.2 434.2 1117.8 435.2 1118.2 437.8 1120.8 438.2 1119.8 434.2ZM1069.2 345.2 1068.8 348.8 1069.8 348.2ZM900.2 195.8 899.2 206.8 899.8 216.8 905.2 243.8 912.8 264.2 923.8 283.8 938.2 303.8 954.8 323.2 1031.2 404.2 1053.8 432.2 1058.2 439.2 1058.8 434.8 1057.8 428.8 1058.8 428.2 1067.8 440.8 1077.8 458.8 1080.8 457.8 1081.2 456.2 1084.2 454.8 1085.8 452.2 1088.2 451.2 1090.2 448.2 1093.2 446.8 1095.2 444.2 1097.2 438.8 1107.2 438.2 1106.2 435.2 1109.8 434.2 1108.8 432.2 1109.2 431.2 1111.2 431.2 1113.8 429.8 1118.8 431.8 1118.2 429.2 1111.2 414.2 1098.2 393.8 1087.8 379.8 1076.2 366.8 1076.2 365.8 1074.2 364.8 1067.2 355.8 1065.2 354.8 1064.2 352.8 1064.8 351.2 1063.2 352.2 1061.8 350.2 1062.8 349.2 1062.2 348.2 1063.2 347.2 1062.8 346.2 1064.2 341.8 1066.2 342.2 1064.8 350.2 1066.2 349.8 1065.2 348.8 1066.8 344.8 1068.8 344.2 1067.8 344.2 1064.2 340.8 1064.2 339.8 1062.8 339.2 1061.8 337.2 1054.8 331.2 1054.2 329.8 1052.8 329.8 1052.2 327.8 1050.8 327.2 1049.8 325.2 1048.2 324.8 1047.2 322.8 1046.2 322.8 1044.8 320.2 1042.2 318.8 1042.2 317.8 1038.2 315.2 1037.2 313.2 1035.8 312.8 1034.8 310.8 1033.2 310.2 1032.2 308.2 1030.8 307.8 1029.8 305.8 1028.2 305.2 1027.2 303.2 1026.2 303.2 1025.2 301.2 1023.8 300.8 1022.8 298.8 1021.2 298.2 1020.2 296.2 1018.8 295.8 1017.8 293.8 1010.8 287.8 1010.8 286.2 1009.8 286.2 1008.2 283.8 1007.2 283.8 1006.2 281.8 1001.8 278.2 1001.8 276.8 1000.2 276.2 997.2 271.8 995.8 271.2 992.8 266.8 991.2 266.2 990.8 264.2 989.2 263.8 979.8 250.8 977.8 249.2 977.8 247.8 974.8 244.8 974.2 242.8 972.8 241.8 965.8 230.2 965.8 228.8 964.8 228.2 960.2 218.8 961.2 207.2 963.2 198.8 969.8 184.8 977.8 173.8 983.2 168.2 994.2 161.2 1006.2 155.2 1022.8 149.2 1041.2 144.8 1058.8 142.2 1077.8 142.2 1088.2 143.2 1104.8 146.8 1116.2 150.8 1130.8 157.8 1136.8 161.8 1141.8 166.8 1151.8 180.8 1156.8 191.2 1159.8 202.2 1159.8 216.8 1176.2 230.2 1178.2 230.8 1193.8 230.8 1202.2 229.2 1216.8 214.8 1219.8 207.2 1224.8 199.8 1229.2 195.2 1247.8 183.2 1262.2 176.8 1278.2 171.8 1294.8 169.2 1310.2 169.2 1330.2 171.8 1345.8 175.2 1364.2 181.8 1383.2 191.8 1398.2 206.8 1405.2 216.8 1412.8 233.2 1414.8 241.8 1413.8 246.8 1409.2 253.8 1409.2 255.2 1407.8 256.2 1403.2 263.8 1401.8 264.2 1401.8 265.8 1398.2 268.8 1398.2 269.8 1396.2 270.8 1396.2 271.8 1394.2 272.8 1394.2 273.8 1392.2 274.8 1392.2 275.8 1390.2 276.8 1387.8 280.2 1383.8 282.8 1383.2 284.2 1375.8 290.2 1373.8 290.8 1373.2 292.2 1371.2 292.8 1364.8 298.2 1351.2 306.2 1347.8 309.2 1321.8 323.8 1286.8 341.2 1223.2 370.8 1183.8 390.8 1183.2 391.8 1163.2 402.2 1131.8 422.8 1124.2 439.8 1126.8 447.2 1126.8 449.8 1119.8 450.2 1120.8 451.2 1127.8 451.8 1129.8 458.2 1128.8 459.2 1125.8 459.2 1121.2 456.8 1117.8 456.8 1117.2 455.8 1109.8 458.2 1104.2 463.2 1104.8 463.8 1103.2 465.8 1102.2 470.2 1082.2 487.2 1083.2 489.8 1082.8 493.2 1084.8 509.2 1103.8 528.2 1134.2 526.8 1152.8 504.8 1152.2 489.8 1131.2 474.2 1131.8 470.8 1129.2 463.8 1129.2 459.2 1130.8 461.8 1133.8 462.8 1136.2 462.2 1149.2 449.8 1165.8 436.8 1169.2 435.2 1172.8 432.2 1174.2 432.8 1174.8 434.8 1173.8 432.2 1175.2 430.2 1177.2 432.8 1185.2 454.8 1185.2 456.2 1184.2 456.8 1184.2 472.8 1185.2 472.2 1185.8 464.8 1186.8 465.2 1187.2 471.2 1187.2 455.8 1184.8 453.2 1177.2 433.8 1176.8 429.8 1178.2 429.2 1188.8 455.8 1188.8 470.2 1193.2 466.2 1193.8 466.8 1200.2 462.2 1199.8 446.8 1198.2 445.8 1189.8 422.8 1190.2 421.2 1191.2 421.8 1199.8 445.8 1201.2 446.8 1201.8 461.8 1205.8 458.8 1205.8 442.8 1206.8 443.2 1207.2 458.2 1208.2 457.2 1208.8 453.8 1209.8 456.8 1211.2 455.2 1211.8 440.2 1212.2 454.2 1212.8 454.8 1214.2 453.8 1214.8 437.8 1215.8 453.2 1217.2 449.8 1217.8 436.2 1218.2 451.8 1225.8 446.8 1225.8 443.2 1226.8 442.2 1227.8 446.2 1229.8 442.8 1230.8 444.2 1238.8 439.8 1238.8 436.2 1239.8 436.8 1239.8 439.8 1245.2 436.2 1245.8 434.8 1246.2 436.2 1251.2 432.8 1253.2 432.8 1255.8 430.8 1256.2 431.2 1257.8 429.2 1259.8 429.2 1262.2 426.8 1263.2 427.2 1264.8 425.8 1266.8 425.8 1271.8 422.2 1276.8 420.8 1278.8 418.8 1284.2 417.2 1285.8 415.2 1291.2 413.8 1292.8 411.8 1298.2 410.2 1300.2 408.2 1302.2 408.2 1303.2 406.8 1305.2 406.8 1307.2 404.8 1312.8 403.2 1314.2 401.2 1316.2 401.2 1321.8 397.8 1323.8 397.8 1325.2 395.8 1330.8 394.2 1332.2 392.2 1334.2 392.2 1335.8 390.8 1338.2 390.2 1339.2 388.8 1341.2 388.8 1343.2 386.8 1348.2 385.2 1349.8 383.2 1351.8 383.2 1353.8 381.2 1358.8 379.8 1360.2 377.8 1362.2 377.8 1363.8 375.8 1365.8 375.8 1366.8 374.2 1371.8 372.2 1377.2 368.2 1378.8 368.2 1380.2 366.2 1381.8 366.2 1392.8 358.8 1394.2 358.8 1395.8 356.8 1397.2 356.8 1398.8 354.8 1411.2 346.8 1426.2 334.2 1437.2 323.2 1459.8 294.8 1469.2 276.8 1472.8 264.2 1476.8 243.8 1476.2 225.8 1473.8 217.8 1474.2 217.2 1472.2 213.2 1472.8 212.8 1468.8 203.8 1457.8 184.8 1448.2 171.2 1437.2 159.8 1420.2 146.8 1398.8 134.8 1378.2 125.8 1357.2 119.2 1331.8 113.8 1315.2 112.2 1294.8 112.2 1290.8 113.2 1283.8 113.2 1265.2 116.8 1251.2 120.8 1218.8 133.8 1199.8 143.8 1194.8 136.8 1183.2 124.8 1173.2 116.8 1157.8 107.8 1137.8 99.2 1121.8 93.8 1099.8 88.2 1078.2 85.8 1048.8 86.2 1028.2 89.2 1017.8 91.8 983.8 103.2 970.2 109.8 951.2 120.8 930.8 136.8 919.8 149.8 914.8 157.8 903.2 184.2ZM1220.8 444.2 1221.2 448.2 1220.2 450.2 1219.8 445.8ZM1223.8 442.2 1224.2 447.2 1223.2 448.2 1222.8 443.2ZM1208.8 440.8 1209.8 441.2 1209.2 446.2ZM1206.8 438.2 1207.8 439.8 1207.2 440.8 1206.2 439.8ZM1203.2 437.8 1205.2 442.2 1204.8 442.8 1203.8 442.2 1202.8 439.2ZM1205.2 434.2 1206.2 435.8 1205.8 437.2 1204.8 435.8ZM1236.2 432.8 1236.8 438.8 1235.8 439.8 1235.2 433.8ZM1233.2 429.8 1233.8 435.8 1232.8 436.8 1232.2 430.2ZM1230.2 429.2 1230.8 433.2 1229.8 434.2 1229.2 429.8ZM1242.2 428.8 1243.2 432.2 1242.8 434.2 1241.8 432.2ZM1179.8 427.2 1181.2 428.2 1188.2 448.2 1190.8 452.8 1190.2 454.8 1187.2 451.2 1179.8 431.8ZM1182.2 425.8 1183.8 427.2 1192.2 449.8 1191.8 451.8 1189.8 449.8 1181.8 428.2ZM1201.8 424.8 1202.8 426.2 1202.2 427.8 1201.2 426.2ZM1239.2 424.2 1240.2 425.2 1239.8 430.8 1238.8 430.2ZM1185.2 424.2 1195.2 449.2 1194.8 449.8 1192.8 448.8 1184.2 425.8ZM1187.8 422.8 1196.2 444.8 1199.2 448.2 1199.2 457.8 1198.2 458.8 1197.2 457.8 1197.2 448.8 1195.2 446.8 1186.8 423.8ZM1200.2 420.8 1201.2 422.2 1200.8 423.8 1199.8 422.2ZM1196.8 420.2 1203.2 436.8 1202.8 438.2 1196.2 421.8ZM1192.8 419.8 1193.8 420.2 1200.2 438.8 1202.8 443.8 1202.2 444.8 1200.8 443.8 1194.2 426.2ZM1195.8 418.2 1196.8 419.2 1196.2 420.8 1195.2 419.2ZM1057.8 342.2 1058.8 343.2 1057.8 345.8 1056.8 344.8ZM1061.8 339.2 1062.8 340.2 1062.8 342.2 1061.8 344.8 1062.2 346.2 1061.2 346.8 1061.8 348.2 1060.8 348.8 1059.2 347.8 1060.2 341.8ZM1058.8 337.2 1058.8 340.2 1057.8 339.2ZM1052.2 336.2 1052.2 339.8 1051.2 338.8Z"/>
<path fill="#2b0000" d="M1116.8 455.8 1108.2 459.2 1104.8 462.8 1102.8 469.8 1082.8 487.2 1084.8 509.2 1103.8 528.2 1134.2 526.8 1151.2 507.2 1153.2 503.2 1152.2 498.8 1152.2 489.8 1131.2 474.8 1131.2 469.8 1128.8 463.2 1128.8 460.8 1127.8 459.8 1124.8 459.2 1120.8 456.8 1118.2 457.2ZM1210.2 446.2 1209.8 456.2 1210.8 455.8ZM1200.8 444.8 1202.2 447.2 1202.2 461.2 1202.8 446.2ZM1204.2 444.2 1204.8 459.8 1205.2 444.8ZM1022.2 299.8 1023.2 305.2 1022.8 308.2 1023.8 308.8 1023.2 305.2 1023.8 303.2 1024.8 302.8 1025.8 303.8 1025.2 309.2 1026.8 309.2 1026.2 307.8 1027.2 306.8 1026.8 305.8 1027.8 305.2 1028.8 306.2 1028.8 309.8 1029.2 305.8ZM900.2 195.8 899.2 206.8 899.8 216.8 905.2 243.8 912.8 264.2 923.8 283.8 938.2 303.8 954.8 323.2 1022.8 394.8 1041.2 416.8 1042.8 417.8 1041.2 406.2 1042.2 405.8 1045.8 409.2 1063.2 432.2 1071.8 446.8 1074.2 449.2 1090.8 435.8 1090.8 431.2 1092.2 430.2 1091.8 426.8 1095.8 424.2 1094.2 424.2 1093.2 423.2 1096.2 422.8 1097.8 421.2 1101.8 420.8 1104.2 418.8 1108.8 419.2 1110.2 420.8 1113.2 420.8 1113.2 419.8 1103.2 401.8 1087.2 379.8 1067.2 356.8 1055.8 345.2 1055.8 344.2 1054.2 343.8 1053.2 341.8 1041.8 330.8 1041.8 329.8 1037.2 326.2 1036.8 324.8 1034.8 323.8 1030.8 318.8 1029.2 318.2 1028.2 316.2 1028.8 314.8 1027.2 315.8 1025.8 312.8 1024.8 313.2 1023.2 311.2 1023.8 310.2 1020.8 308.8 1020.2 304.8 1021.2 298.2 1020.2 296.2 1018.8 295.8 1017.8 293.8 1010.8 287.8 1010.8 286.2 1009.8 286.2 1008.2 283.8 1007.2 283.8 1006.2 281.8 1001.8 278.2 1001.8 276.8 1000.2 276.2 997.2 271.8 995.8 271.2 992.8 266.8 991.2 266.2 990.8 264.2 989.2 263.8 979.8 250.8 977.8 249.2 977.8 247.8 974.8 244.8 974.2 242.8 972.8 241.8 965.8 230.2 965.8 228.8 964.8 228.2 960.2 218.8 961.2 207.2 963.2 198.8 969.8 184.8 977.8 173.8 983.2 168.2 994.2 161.2 1006.2 155.2 1022.8 149.2 1041.2 144.8 1058.8 142.2 1077.8 142.2 1088.2 143.2 1104.8 146.8 1116.2 150.8 1130.8 157.8 1136.8 161.8 1141.8 166.8 1151.8 180.8 1156.8 191.2 1159.8 202.2 1159.8 216.8 1176.2 230.2 1178.2 230.8 1193.8 230.8 1202.2 229.2 1216.8 214.8 1219.8 207.2 1224.8 199.8 1234.2 191.8 1247.8 183.2 1262.2 176.8 1276.2 172.2 1289.8 169.8 1310.2 169.2 1321.2 170.2 1340.2 173.8 1350.8 176.8 1364.2 181.8 1383.2 191.8 1393.2 201.2 1405.2 216.8 1410.2 228.2 1411.2 228.8 1414.8 241.8 1413.8 246.8 1409.2 253.8 1409.2 255.2 1407.8 256.2 1403.2 263.8 1401.8 264.2 1401.8 265.8 1398.2 268.8 1398.2 269.8 1396.2 270.8 1396.2 271.8 1394.2 272.8 1394.2 273.8 1392.2 274.8 1392.2 275.8 1390.2 276.8 1387.8 280.2 1383.8 282.8 1383.2 284.2 1375.8 290.2 1373.8 290.8 1373.2 292.2 1371.2 292.8 1359.8 301.8 1357.8 302.2 1341.8 312.8 1286.8 341.2 1244.2 360.8 1193.2 385.8 1165.8 400.8 1146.8 413.2 1144.8 413.8 1137.2 419.8 1135.2 420.2 1131.8 423.2 1128.2 430.2 1125.2 438.8 1125.2 441.2 1127.2 445.2 1127.8 448.8 1132.2 449.2 1134.2 453.2 1140.8 453.8 1141.8 455.8 1160.2 440.2 1179.8 426.8 1183.8 425.2 1184.8 423.8 1186.2 423.8 1187.8 421.8 1188.8 422.2 1190.8 420.2 1193.2 424.8 1191.8 421.8 1191.8 419.8 1192.8 418.8 1194.2 419.2 1203.2 442.8 1194.2 418.8 1195.2 417.2 1197.2 418.2 1205.2 440.8 1207.2 442.8 1207.8 453.8 1208.2 442.8 1205.2 439.2 1197.2 417.2 1198.8 415.2 1199.8 416.2 1207.8 438.8 1209.2 439.8 1200.2 415.8 1201.2 413.8 1202.8 414.8 1211.2 438.8 1212.8 439.8 1213.2 454.2 1213.8 439.2 1211.2 436.2 1203.2 412.8 1205.2 412.8 1213.2 434.8 1215.8 437.2 1215.8 451.8 1216.2 452.2 1216.8 437.2 1214.8 435.8 1206.2 411.2 1207.2 410.2 1208.2 411.2 1216.2 433.8 1218.8 435.8 1218.8 451.2 1219.8 445.2 1219.8 434.8 1217.8 433.8 1209.2 409.8 1210.2 408.8 1211.2 409.8 1219.8 433.2 1221.8 434.8 1221.2 450.2 1222.2 448.8 1222.8 433.2 1220.2 430.8 1212.2 408.8 1212.8 407.2 1214.8 408.8 1222.2 430.2 1224.8 432.8 1224.2 448.2 1225.2 447.2 1225.8 431.2 1223.8 429.8 1215.2 406.8 1216.2 405.8 1217.8 407.2 1225.8 430.2 1227.8 430.8 1227.8 446.2 1228.8 445.2 1228.8 429.8 1226.8 427.8 1218.8 404.8 1219.8 404.2 1221.2 406.8 1228.8 427.8 1231.2 429.2 1230.8 444.2 1231.8 443.2 1231.8 430.2 1232.8 427.2 1234.2 428.2 1233.8 442.8 1235.2 441.8 1235.2 425.8 1233.2 424.2 1225.2 402.2 1225.8 400.8 1226.8 401.2 1234.8 424.2 1237.8 425.8 1236.8 441.2 1238.2 439.8 1238.2 424.2 1236.8 423.2 1228.2 400.2 1228.8 399.2 1230.8 401.8 1238.2 423.2 1240.8 424.8 1240.8 430.8 1239.8 433.2 1240.2 439.2 1241.8 438.2 1241.2 428.2 1242.2 426.2 1241.8 422.2 1242.8 421.2 1244.2 422.8 1243.2 425.8 1243.2 437.8 1244.8 436.2 1244.8 421.2 1245.8 420.2 1246.8 420.8 1247.2 425.2 1246.2 434.2 1246.8 435.8 1248.2 434.8 1247.8 426.8 1248.8 424.8 1248.8 418.2 1250.2 418.8 1250.8 421.2 1249.8 424.8 1250.2 433.8 1251.8 429.8 1251.2 422.2 1252.2 417.2 1253.8 417.2 1253.2 432.8 1254.8 431.2 1255.2 415.8 1256.2 414.8 1257.2 415.2 1256.2 429.8 1256.8 430.8 1258.2 429.2 1259.2 413.2 1260.2 413.8 1259.8 427.8 1260.2 428.8 1261.2 427.8 1262.2 411.2 1263.8 411.8 1263.8 426.8 1265.2 424.2 1265.8 410.2 1267.2 410.2 1266.8 425.8 1268.2 424.2 1269.8 407.8 1270.8 408.2 1270.2 423.8 1271.8 422.2 1273.2 406.2 1274.2 406.8 1273.2 422.2 1275.2 420.8 1276.8 404.2 1278.2 405.2 1277.2 420.2 1278.8 418.8 1279.8 403.8 1280.8 402.8 1281.8 403.8 1280.8 418.8 1282.2 417.2 1283.2 402.2 1284.2 401.2 1285.2 401.8 1284.2 417.2 1286.2 414.2 1286.8 402.2 1287.8 399.8 1288.8 400.2 1287.8 414.8 1289.8 413.8 1290.2 401.8 1291.2 397.8 1292.2 398.2 1291.2 408.8 1291.8 413.2 1293.2 411.8 1294.2 396.8 1295.2 395.8 1295.8 401.8 1294.8 411.8 1296.8 410.2 1298.2 394.2 1299.8 394.8 1298.2 410.2 1300.8 408.2 1300.8 399.8 1302.2 392.8 1303.2 393.8 1301.8 403.2 1302.2 408.2 1303.8 406.8 1304.8 402.8 1305.8 403.8 1305.8 406.2 1307.8 404.8 1308.2 402.8 1309.2 404.8 1311.8 401.8 1312.8 403.2 1315.8 400.2 1316.2 401.2 1321.8 397.8 1323.8 397.8 1326.2 394.2 1327.2 395.8 1329.8 393.8 1330.8 394.2 1332.2 392.2 1334.2 392.2 1335.8 390.8 1338.2 390.2 1339.2 388.8 1341.2 388.8 1343.2 386.8 1348.2 385.2 1349.8 383.2 1351.8 383.2 1353.8 381.2 1358.8 379.8 1360.2 377.8 1362.2 377.8 1363.8 375.8 1365.8 375.8 1366.8 374.2 1371.8 372.2 1377.2 368.2 1378.8 368.2 1380.2 366.2 1385.2 364.2 1386.2 362.8 1387.8 362.8 1392.8 358.8 1394.2 358.8 1395.8 356.8 1397.2 356.8 1398.8 354.8 1411.2 346.8 1426.2 334.2 1440.8 319.2 1459.8 294.8 1469.2 276.8 1472.8 264.2 1476.8 243.8 1476.2 225.8 1473.8 217.8 1474.2 217.2 1472.2 213.2 1472.8 212.8 1468.8 203.8 1457.8 184.8 1448.2 171.2 1437.2 159.8 1420.2 146.8 1398.8 134.8 1378.2 125.8 1357.2 119.2 1331.8 113.8 1315.2 112.2 1294.8 112.2 1290.8 113.2 1283.8 113.2 1265.2 116.8 1251.2 120.8 1218.8 133.8 1199.8 143.8 1194.8 136.8 1183.2 124.8 1173.2 116.8 1157.8 107.8 1137.8 99.2 1121.8 93.8 1099.8 88.2 1078.2 85.8 1048.8 86.2 1028.2 89.2 1017.8 91.8 983.8 103.2 970.2 109.8 951.2 120.8 930.8 136.8 919.8 149.8 914.8 157.8 903.2 184.2ZM1242.8 414.8 1244.8 419.2 1244.2 419.8 1243.2 419.2 1242.2 416.2ZM1245.2 410.8 1247.2 415.2 1246.8 416.8 1244.8 412.2ZM1239.2 405.2 1242.8 413.8 1242.2 415.2 1238.8 406.8ZM1222.8 402.2 1231.8 425.2 1231.2 427.2 1229.2 424.2 1221.8 403.2ZM1241.8 401.2 1245.2 409.8 1244.8 411.2 1241.2 402.8ZM1308.8 397.2 1309.8 398.2 1308.8 401.2 1307.8 400.2ZM1305.2 397.2 1306.2 398.2 1305.2 402.2 1304.2 401.2ZM1232.2 397.2 1241.8 421.2 1241.2 422.2 1239.8 420.8 1231.8 398.8ZM1239.8 395.8 1241.8 400.2 1241.2 401.8 1239.2 397.2ZM1235.8 395.8 1239.2 404.2 1238.8 405.8 1235.2 397.2ZM1309.2 392.2 1310.2 393.2 1309.2 396.2 1308.2 395.2ZM1305.8 392.2 1306.8 393.2 1305.8 397.2 1304.8 396.2ZM1309.2 388.8 1310.2 389.2 1309.8 391.2 1308.8 390.2ZM1018.8 303.8 1019.8 304.2 1019.2 306.8 1018.2 306.2ZM1016.2 295.2 1017.2 298.2 1016.8 304.8 1015.2 303.2 1015.2 297.8ZM1013.8 294.8 1014.8 297.8 1013.8 300.2 1012.8 299.2Z"/>
<path fill="#330000" d="M1116.2 455.8 1114.8 457.2 1108.8 459.2 1104.8 463.2 1102.8 469.8 1082.8 487.2 1084.8 509.2 1103.8 528.2 1134.2 526.8 1152.8 504.8 1151.8 489.2 1131.2 474.8 1131.2 470.2 1129.8 467.8 1129.8 464.8 1127.8 459.8 1125.8 459.8 1121.2 457.2 1117.8 457.2ZM1253.8 428.8 1253.2 431.8 1254.2 431.2ZM1251.2 423.8 1250.2 424.8 1250.2 430.8 1251.2 429.8ZM974.2 254.2 974.8 257.2 975.2 254.8ZM981.2 253.2 980.8 256.2 981.8 258.8 982.2 254.8ZM900.2 195.8 899.2 206.8 899.8 216.8 905.2 243.8 912.8 264.2 923.8 283.8 938.2 303.8 954.8 323.2 1021.2 393.2 1021.8 392.8 1020.2 381.8 1021.2 381.2 1028.2 388.2 1046.8 409.2 1068.2 438.2 1084.8 423.8 1085.2 420.2 1088.8 419.2 1088.2 417.8 1089.8 416.8 1088.2 415.2 1088.8 411.8 1093.8 410.8 1096.8 411.2 1098.2 409.8 1103.8 409.8 1105.8 411.2 1107.2 410.8 1097.8 394.8 1075.2 366.2 1055.8 345.8 1055.2 344.2 1050.8 340.8 1050.2 339.2 1036.2 325.8 1036.2 324.8 1034.8 324.2 1033.8 322.2 1032.2 321.8 1031.2 319.8 1029.8 319.2 1028.8 317.2 1027.2 316.8 1026.2 314.8 1024.8 314.2 1021.2 309.8 992.8 281.2 981.8 268.8 981.8 267.8 979.8 266.8 979.2 263.8 978.2 264.2 975.2 261.2 974.8 258.2 973.8 258.2 969.8 254.2 970.8 249.8 970.2 249.2 968.8 252.2 967.2 250.2 968.2 249.2 966.2 248.2 965.8 245.8 966.8 242.8 969.8 244.2 970.2 248.2 971.2 243.8 974.2 245.2 974.8 249.2 975.8 245.2 972.8 241.2 971.8 241.8 971.8 243.8 968.8 242.2 969.8 240.2 971.2 240.8 971.8 239.8 971.2 238.2 968.8 237.8 969.8 237.2 969.8 235.8 965.8 230.2 965.8 228.8 964.8 228.2 960.2 218.8 961.2 207.2 964.8 194.8 969.8 184.8 977.8 173.8 983.2 168.2 994.2 161.2 1006.2 155.2 1022.8 149.2 1041.2 144.8 1058.8 142.2 1077.8 142.2 1088.2 143.2 1104.8 146.8 1116.2 150.8 1130.8 157.8 1136.8 161.8 1141.8 166.8 1151.8 180.8 1156.8 191.2 1159.8 202.2 1159.8 216.8 1176.2 230.2 1178.2 230.8 1193.8 230.8 1202.2 229.2 1216.8 214.8 1219.8 207.2 1224.8 199.8 1234.2 191.8 1247.8 183.2 1262.2 176.8 1276.2 172.2 1289.8 169.8 1310.2 169.2 1321.2 170.2 1340.2 173.8 1350.8 176.8 1364.2 181.8 1383.2 191.8 1393.2 201.2 1405.2 216.8 1410.2 228.2 1411.2 228.8 1414.2 239.2 1414.8 244.2 1412.8 247.2 1412.8 248.8 1411.8 249.2 1411.8 250.8 1409.2 253.8 1409.2 255.2 1407.8 256.2 1403.2 263.8 1401.8 264.2 1401.8 265.8 1400.2 266.2 1398.2 269.8 1396.2 270.8 1396.2 271.8 1394.2 272.8 1394.2 273.8 1392.2 274.8 1392.2 275.8 1390.2 276.8 1387.8 280.2 1383.8 282.8 1383.2 284.2 1375.8 290.2 1373.8 290.8 1373.2 292.2 1371.2 292.8 1359.8 301.8 1328.2 320.2 1286.8 341.2 1244.2 360.8 1193.2 385.8 1165.8 400.8 1146.8 413.2 1144.8 413.8 1132.2 422.8 1126.8 435.8 1127.8 436.2 1133.8 432.8 1134.2 433.2 1134.2 437.8 1135.8 439.2 1135.8 444.8 1139.2 446.2 1138.8 448.2 1149.8 448.2 1167.8 434.2 1193.2 417.8 1197.2 416.2 1201.2 413.2 1202.8 413.2 1203.8 411.8 1205.8 411.8 1207.2 409.8 1208.8 410.2 1209.8 408.2 1211.8 408.8 1212.8 411.8 1211.8 409.2 1212.8 406.8 1215.2 408.2 1223.2 430.2 1214.8 407.8 1215.8 405.2 1217.8 405.8 1226.8 429.8 1218.2 406.2 1218.2 404.2 1219.2 403.2 1220.8 404.2 1229.8 427.8 1228.2 421.8 1221.2 403.2 1222.2 401.8 1224.2 403.2 1232.2 425.8 1234.8 428.2 1234.8 432.2 1234.8 426.8 1232.8 424.8 1226.2 407.2 1224.8 400.8 1225.8 399.8 1227.2 400.8 1235.2 423.8 1236.2 424.2 1227.8 400.8 1228.8 398.2 1230.2 399.2 1238.8 422.8 1240.8 423.8 1241.2 427.2 1241.8 423.8 1239.8 422.2 1231.2 398.8 1231.8 396.8 1233.2 397.2 1241.2 419.2 1243.2 420.8 1234.8 397.8 1234.8 395.8 1235.8 394.8 1237.2 396.8 1244.8 418.2 1247.2 420.2 1247.8 425.8 1248.2 419.8 1246.2 418.2 1237.8 395.2 1238.8 393.2 1240.2 394.2 1247.8 415.8 1250.8 418.2 1251.2 420.8 1251.8 417.8 1249.2 415.8 1241.2 393.8 1242.2 391.2 1243.2 392.2 1252.2 416.2 1254.8 417.2 1254.8 415.8 1253.2 415.2 1244.8 391.8 1245.8 389.8 1247.2 391.8 1255.2 414.2 1257.8 414.8 1257.8 423.8 1256.8 425.8 1257.2 430.2 1258.2 414.8 1256.2 412.2 1248.2 388.8 1250.2 388.8 1258.2 411.8 1260.8 413.2 1260.2 428.2 1261.2 426.8 1261.8 412.8 1259.8 410.8 1251.8 387.2 1252.8 386.2 1253.8 387.2 1261.8 410.2 1264.2 411.2 1263.8 426.2 1264.8 424.2 1265.2 411.2 1263.2 408.8 1255.2 386.8 1255.8 384.8 1257.8 387.2 1265.8 409.2 1267.8 410.2 1266.8 425.8 1268.2 421.8 1268.8 408.8 1266.8 406.8 1258.8 383.8 1259.8 383.2 1260.8 384.2 1268.8 406.8 1271.2 407.8 1270.8 423.2 1271.8 419.2 1272.2 407.2 1270.8 406.2 1262.2 382.8 1263.2 381.2 1272.2 405.2 1274.8 406.2 1273.8 422.2 1274.8 421.2 1275.8 405.2 1273.2 401.8 1265.8 380.8 1266.8 379.8 1268.8 383.2 1276.2 403.8 1278.8 404.8 1277.8 419.8 1278.8 416.8 1279.8 402.8 1280.8 402.2 1282.2 403.2 1281.2 411.2 1281.8 417.8 1283.2 400.8 1284.2 400.2 1285.8 401.8 1284.8 416.2 1285.8 415.2 1286.2 402.2 1287.2 399.2 1289.2 400.2 1288.2 414.8 1289.2 413.8 1290.2 397.8 1291.2 396.8 1292.8 397.8 1291.8 413.2 1293.2 411.8 1292.8 406.8 1294.2 395.2 1296.2 395.8 1295.2 411.2 1296.8 410.2 1296.2 406.8 1297.2 403.8 1296.8 400.8 1297.8 393.8 1299.2 393.8 1300.2 395.2 1299.2 397.8 1299.8 400.8 1298.8 403.2 1298.8 409.8 1300.2 408.2 1300.8 395.2 1302.8 391.8 1303.8 395.2 1302.8 397.8 1303.2 400.2 1302.2 402.8 1302.2 408.2 1303.8 406.8 1305.2 390.2 1306.8 390.8 1305.8 404.2 1306.2 405.8 1307.2 404.8 1308.8 388.2 1310.8 388.8 1309.2 401.2 1309.8 404.2 1311.2 401.8 1312.8 386.8 1314.2 387.2 1312.8 400.2 1313.2 402.8 1314.8 401.2 1315.8 386.8 1316.8 384.8 1317.8 385.2 1316.8 400.8 1318.2 399.8 1319.2 386.2 1320.2 383.2 1321.2 383.8 1321.2 389.2 1319.8 399.2 1321.8 397.8 1323.2 385.2 1322.8 382.2 1323.8 381.2 1325.2 381.8 1323.8 397.8 1325.8 394.2 1326.8 381.2 1327.8 379.8 1328.8 380.2 1327.2 394.8 1327.8 395.2 1329.2 393.2 1330.2 380.8 1331.2 377.8 1332.2 378.2 1330.8 393.2 1331.2 393.8 1332.8 392.2 1334.8 375.8 1335.8 376.2 1334.2 389.8 1334.8 391.8 1336.2 390.8 1337.8 375.2 1338.8 374.2 1339.2 379.8 1337.8 390.2 1339.8 388.8 1341.2 373.2 1342.2 372.2 1343.2 374.2 1341.2 386.8 1341.8 388.2 1343.2 386.8 1344.8 372.2 1345.8 370.8 1346.8 371.2 1344.8 384.2 1345.2 386.2 1346.8 385.2 1348.2 370.8 1349.2 369.2 1350.2 370.8 1348.2 384.8 1350.2 383.2 1351.8 369.8 1352.8 367.2 1353.8 368.8 1351.8 382.8 1353.8 381.2 1356.2 365.2 1357.2 366.8 1355.2 380.8 1357.2 379.8 1359.8 363.8 1360.2 367.8 1358.8 378.8 1360.8 377.8 1361.2 371.8 1362.2 370.8 1362.2 377.8 1363.8 375.8 1365.8 375.8 1367.8 374.2 1368.2 372.8 1368.8 373.8 1377.2 368.2 1378.8 368.2 1380.2 366.2 1381.8 366.2 1392.8 358.8 1394.2 358.8 1395.8 356.8 1397.2 356.8 1398.8 354.8 1405.8 350.8 1407.2 348.8 1411.2 346.8 1412.8 344.8 1421.2 338.8 1437.2 323.2 1459.8 294.8 1467.2 281.2 1470.8 272.2 1476.8 243.8 1476.2 225.8 1473.8 217.8 1474.2 217.2 1472.2 213.2 1472.8 212.8 1468.8 203.8 1457.8 184.8 1448.2 171.2 1437.2 159.8 1420.2 146.8 1398.8 134.8 1378.2 125.8 1357.2 119.2 1331.8 113.8 1315.2 112.2 1294.8 112.2 1290.8 113.2 1283.8 113.2 1265.2 116.8 1251.2 120.8 1218.8 133.8 1199.8 143.8 1194.8 136.8 1183.2 124.8 1173.2 116.8 1157.8 107.8 1137.8 99.2 1121.8 93.8 1099.8 88.2 1078.2 85.8 1048.8 86.2 1028.2 89.2 1017.8 91.8 983.8 103.2 970.2 109.8 951.2 120.8 930.8 136.8 919.8 149.8 914.8 157.8 903.2 184.2ZM1140.2 443.8 1141.8 442.2 1147.2 442.2 1148.2 443.2 1147.8 444.8 1141.2 444.8ZM1292.8 393.2 1293.8 394.8 1293.2 395.8 1292.2 394.8ZM1295.8 389.8 1297.2 392.8 1296.8 393.8 1295.2 391.2ZM1290.8 387.8 1292.8 392.2 1292.2 393.8 1290.2 389.2ZM1298.8 386.2 1300.2 389.2 1299.8 391.2 1298.2 387.8ZM1293.2 382.8 1295.8 388.8 1295.2 390.2 1292.8 384.2ZM1288.2 380.8 1290.2 385.2 1289.8 386.8 1287.8 382.2ZM1296.2 379.2 1298.2 383.8 1297.8 385.2 1295.8 380.8ZM1270.2 378.2 1271.8 380.2 1279.2 401.2 1278.8 402.8 1277.2 401.2 1269.8 380.2ZM1291.2 377.2 1293.2 381.8 1292.8 383.2 1290.8 378.8ZM1273.8 376.2 1275.2 378.2 1281.8 396.2 1282.8 401.2 1281.2 400.2 1273.2 377.8ZM1286.2 375.2 1288.2 379.8 1287.8 381.2 1285.8 376.8ZM1277.2 374.8 1278.8 376.2 1286.2 397.2 1285.8 399.2 1276.8 375.8ZM1294.2 373.8 1296.2 378.2 1295.8 379.8 1293.8 375.2ZM1281.2 373.2 1288.8 392.2 1289.8 397.2 1287.8 394.8 1280.8 375.2ZM1289.2 371.8 1291.2 376.2 1290.8 377.8 1288.8 373.2ZM1284.8 371.2 1286.2 374.2 1285.8 375.8 1284.2 372.8ZM1288.2 369.8 1289.2 370.8 1288.8 372.2 1287.8 370.8ZM1292.2 368.2 1294.2 372.8 1293.8 374.2 1291.8 369.8ZM1362.8 367.2 1363.2 368.8 1362.2 369.8 1361.8 368.2ZM1363.2 363.8 1363.8 365.2 1362.8 366.2 1362.2 364.8ZM964.2 244.8 965.8 245.8 964.8 247.2 963.8 245.8ZM964.8 239.8 966.8 239.8 967.8 242.2 966.8 242.8 964.8 241.8ZM962.8 238.2 963.8 237.2 965.2 238.8 963.2 239.2Z"/>
<path fill="#3c0000" d="M1116.8 456.2 1108.8 459.2 1103.8 465.2 1102.8 469.8 1082.8 487.2 1084.8 509.2 1103.8 528.2 1134.2 526.8 1152.8 504.8 1151.8 489.8 1131.8 475.8 1130.8 473.8 1131.2 470.2 1129.8 468.2 1128.8 461.2 1127.2 459.8 1125.2 459.8 1121.2 457.2 1117.2 457.2ZM1296.2 408.2 1295.2 410.8 1296.2 410.2ZM1296.8 402.2 1295.8 403.2 1295.8 405.8 1296.8 404.8ZM1303.8 400.8 1302.8 402.2 1303.2 405.2ZM1296.8 396.2 1296.2 399.8 1297.2 398.8ZM1304.2 395.8 1303.2 397.2 1303.8 399.8ZM900.2 195.8 899.2 206.8 899.8 216.8 905.2 243.8 912.8 264.2 923.8 283.8 938.2 303.8 948.2 315.8 985.2 355.8 996.2 366.8 994.2 354.8 996.2 354.8 1034.8 394.2 1058.2 423.8 1060.8 425.8 1076.8 411.2 1077.2 407.2 1080.8 407.2 1082.8 406.2 1082.8 404.2 1077.2 403.2 1078.2 402.2 1086.8 401.8 1087.8 399.2 1080.2 398.8 1079.8 398.2 1080.8 397.2 1088.8 395.8 1091.2 397.8 1090.2 399.2 1091.2 400.8 1096.2 398.8 1097.8 396.8 1086.8 380.8 1066.8 357.2 1036.2 326.2 1035.8 324.8 1034.2 324.2 1033.2 322.2 1031.8 321.8 1030.8 319.8 1029.2 319.2 1028.2 317.2 1026.8 316.8 1025.8 314.8 1024.2 314.2 1023.2 312.2 1021.8 311.8 1020.8 309.8 1001.8 291.2 1001.8 290.2 997.2 286.8 996.8 285.2 985.8 274.2 969.2 254.8 954.2 233.2 947.2 220.2 941.8 206.2 940.8 201.2 941.2 196.2 942.2 195.8 943.2 197.8 946.8 199.2 949.8 201.8 949.8 202.8 950.8 202.2 951.8 204.2 952.8 203.8 956.8 208.8 957.8 212.2 957.2 213.8 960.2 218.2 961.2 207.2 964.8 194.8 970.8 183.2 977.8 173.8 983.2 168.2 994.2 161.2 1015.2 151.8 1031.2 146.8 1058.8 142.2 1077.8 142.2 1099.2 145.2 1116.2 150.8 1134.8 160.2 1146.2 172.2 1155.8 188.8 1159.8 202.2 1159.8 216.8 1176.2 230.2 1178.2 230.8 1193.8 230.8 1202.2 229.2 1216.8 214.8 1221.2 204.8 1229.2 195.2 1251.8 181.2 1262.2 176.8 1282.8 170.8 1294.8 169.2 1310.2 169.2 1321.2 170.2 1340.2 173.8 1364.2 181.8 1378.2 188.8 1387.2 195.2 1398.2 206.8 1405.2 216.8 1410.2 228.2 1411.2 228.8 1414.8 241.8 1413.8 246.8 1409.2 253.8 1409.2 255.2 1407.8 256.2 1403.2 263.8 1401.8 264.2 1401.8 265.8 1398.2 268.8 1398.2 269.8 1396.2 270.8 1396.2 271.8 1394.2 272.8 1394.2 273.8 1392.2 274.8 1392.2 275.8 1390.2 276.8 1387.8 280.2 1383.8 282.8 1383.2 284.2 1375.8 290.2 1373.8 290.8 1373.2 292.2 1371.2 292.8 1359.8 301.8 1357.8 302.2 1341.8 312.8 1286.8 341.2 1244.2 360.8 1193.2 385.8 1165.8 400.8 1146.8 413.2 1144.8 413.8 1137.2 419.8 1135.2 420.2 1132.2 423.2 1130.2 429.8 1131.8 430.2 1141.8 425.2 1143.2 426.8 1142.8 431.8 1150.8 439.2 1154.8 439.2 1156.2 440.2 1162.2 437.8 1179.8 425.8 1203.8 411.2 1205.2 411.2 1212.8 406.2 1214.8 406.2 1215.8 404.8 1217.2 404.8 1219.8 402.8 1220.8 403.2 1222.2 401.2 1223.8 401.2 1225.8 399.2 1227.2 399.8 1228.8 397.8 1230.8 397.8 1232.2 396.2 1233.8 396.8 1235.8 394.2 1237.2 395.2 1238.8 392.8 1239.8 392.8 1241.2 395.2 1249.2 416.8 1240.8 393.8 1240.8 392.2 1242.2 390.8 1244.2 392.8 1252.8 415.2 1244.2 392.2 1244.2 390.8 1245.8 389.2 1247.8 391.2 1255.8 413.8 1255.2 410.2 1247.8 390.8 1247.8 388.8 1248.8 387.8 1250.8 388.8 1258.2 410.2 1259.8 412.2 1251.2 388.8 1251.2 387.2 1252.8 385.8 1253.8 386.2 1260.8 406.2 1263.2 410.2 1254.8 386.8 1255.8 384.2 1257.8 385.8 1265.2 407.2 1268.2 410.2 1268.2 413.2 1268.2 409.2 1266.2 407.2 1258.2 384.8 1258.8 383.2 1260.2 382.8 1268.8 405.8 1270.2 406.8 1261.8 382.8 1263.2 380.8 1264.8 382.2 1272.8 404.8 1274.2 405.2 1265.2 381.2 1266.2 379.2 1267.8 379.8 1276.2 403.2 1277.8 403.2 1269.2 380.2 1269.2 378.2 1270.8 377.8 1272.8 381.2 1279.8 401.8 1282.2 402.2 1280.8 400.2 1272.8 378.2 1272.8 376.8 1274.2 375.8 1282.8 398.8 1284.2 400.2 1285.2 399.8 1286.2 401.2 1284.2 398.2 1276.2 375.8 1277.8 374.2 1279.2 376.2 1286.8 398.2 1288.8 398.8 1289.8 401.2 1290.2 398.8 1288.2 397.2 1280.2 375.2 1280.2 373.2 1281.8 372.8 1282.8 374.2 1290.2 396.2 1291.8 396.8 1291.8 394.2 1283.8 373.2 1283.8 371.8 1284.8 370.8 1285.8 371.2 1293.2 392.8 1294.8 395.2 1295.8 394.8 1287.2 371.2 1288.2 368.8 1289.2 369.8 1297.8 393.2 1299.8 393.2 1300.8 394.8 1301.2 393.2 1298.8 390.8 1291.2 369.8 1291.8 367.2 1293.2 368.2 1301.2 391.8 1302.8 391.2 1304.2 394.8 1304.8 391.8 1303.2 390.8 1294.8 367.8 1295.2 365.8 1296.8 366.2 1304.2 388.2 1305.2 389.8 1307.2 390.2 1306.2 405.8 1307.2 403.2 1308.2 390.2 1306.2 387.8 1298.2 365.2 1299.2 363.8 1300.8 365.2 1308.2 387.2 1311.2 388.2 1309.8 400.8 1310.2 403.8 1311.8 387.8 1309.2 384.2 1302.2 364.8 1302.8 362.2 1304.2 363.2 1311.8 385.2 1314.8 387.2 1313.2 402.2 1314.2 401.2 1315.8 385.8 1313.2 383.2 1305.8 362.2 1306.8 360.2 1315.8 383.8 1318.2 385.2 1316.8 400.8 1317.8 399.8 1319.2 384.2 1317.2 382.2 1309.2 359.8 1310.2 358.8 1312.2 361.8 1318.8 381.2 1319.8 382.8 1321.8 383.2 1320.2 399.2 1321.8 395.2 1322.8 382.8 1319.8 377.2 1313.2 357.2 1314.2 356.8 1315.2 358.2 1322.8 380.2 1325.8 381.8 1324.2 396.8 1325.2 394.2 1326.2 381.2 1327.8 379.2 1329.2 380.2 1327.8 395.2 1328.8 394.2 1330.2 378.8 1328.8 377.8 1320.8 354.2 1321.8 353.8 1322.8 355.2 1330.2 376.8 1332.8 378.2 1331.2 393.2 1332.2 392.2 1333.8 376.8 1332.2 375.8 1324.2 353.2 1324.8 351.8 1325.8 352.2 1333.2 374.2 1336.2 376.2 1334.8 391.8 1335.8 390.8 1337.2 374.8 1338.8 373.8 1339.8 374.8 1338.2 390.2 1339.8 385.8 1340.8 373.2 1339.2 371.8 1331.8 348.8 1332.2 348.2 1333.2 349.2 1340.2 370.2 1343.8 373.2 1341.8 388.2 1343.2 386.8 1342.8 384.8 1345.2 370.2 1347.2 371.2 1345.2 386.2 1346.8 385.2 1346.2 383.2 1348.2 369.2 1346.2 367.8 1338.8 346.2 1339.2 344.8 1347.8 367.2 1350.8 369.8 1348.8 384.8 1350.2 383.2 1349.8 381.8 1352.2 366.8 1354.2 367.8 1352.2 382.8 1353.8 381.2 1353.2 379.8 1355.8 364.8 1357.8 366.2 1355.8 380.8 1357.2 379.8 1356.8 377.8 1359.2 363.2 1360.8 363.8 1359.2 378.8 1360.2 377.8 1362.8 361.2 1364.2 361.8 1362.2 375.2 1362.8 376.8 1364.2 374.2 1366.2 359.2 1367.2 359.2 1367.8 360.8 1365.8 375.8 1367.2 374.2 1369.8 357.8 1370.8 358.2 1368.8 372.2 1369.2 373.2 1370.8 372.2 1372.8 355.8 1374.2 356.2 1372.2 371.8 1374.2 369.2 1375.8 355.8 1376.8 353.8 1377.8 354.8 1375.2 369.2 1375.8 369.8 1377.2 368.2 1379.8 352.2 1380.8 352.8 1378.8 368.2 1380.8 366.2 1382.8 349.8 1384.2 350.8 1381.8 364.2 1382.2 365.8 1383.8 364.8 1386.2 348.2 1387.2 348.8 1384.8 364.2 1386.8 362.8 1387.8 358.2 1388.2 362.2 1390.8 359.2 1391.2 360.2 1393.2 358.8 1393.8 356.8 1394.2 358.8 1395.8 356.8 1397.2 356.8 1398.8 354.8 1411.2 346.8 1426.2 334.2 1440.8 319.2 1459.8 294.8 1469.2 276.8 1472.8 264.2 1476.8 243.8 1476.2 225.8 1473.8 217.8 1474.2 217.2 1472.2 213.2 1472.8 212.8 1468.8 203.8 1457.8 184.8 1448.2 171.2 1437.2 159.8 1420.2 146.8 1398.8 134.8 1378.2 125.8 1357.2 119.2 1331.8 113.8 1315.2 112.2 1294.8 112.2 1290.8 113.2 1283.8 113.2 1265.2 116.8 1251.2 120.8 1218.8 133.8 1199.8 143.8 1194.8 136.8 1183.2 124.8 1173.2 116.8 1157.8 107.8 1137.8 99.2 1121.8 93.8 1099.8 88.2 1078.2 85.8 1048.8 86.2 1028.2 89.2 1017.8 91.8 983.8 103.2 970.2 109.8 951.2 120.8 930.8 136.8 919.8 149.8 914.8 157.8 903.2 184.2ZM1360.2 356.8 1361.8 359.2 1361.8 361.2 1360.2 359.8ZM1317.8 355.2 1325.2 374.2 1326.2 379.8 1324.2 377.8 1316.8 356.8ZM1363.2 353.2 1364.2 355.2 1363.8 356.8 1362.8 355.2ZM1328.2 350.2 1330.2 352.8 1337.2 372.8 1336.8 374.2 1335.8 373.8 1328.2 352.8ZM1357.8 349.8 1359.2 352.2 1358.8 354.2 1357.2 351.2ZM1389.2 348.8 1389.8 352.2 1388.2 358.2 1387.8 354.8ZM1335.8 346.2 1344.2 368.2 1343.8 370.2 1342.2 368.2 1335.2 348.2ZM1360.2 344.8 1361.2 346.8 1360.8 348.2 1359.8 346.8ZM1342.8 342.8 1351.8 366.2 1351.2 366.8 1350.2 366.2 1342.2 343.8ZM1354.8 341.2 1356.2 343.8 1355.8 345.8 1354.2 342.8ZM1346.2 341.2 1347.2 341.8 1354.8 363.2 1354.2 364.8 1345.8 342.2ZM1350.2 339.8 1358.2 361.2 1357.8 362.8 1349.8 341.8ZM1357.2 336.2 1358.2 338.2 1357.8 339.8 1356.8 338.2Z"/>
<path fill="#440000" d="M1116.2 456.2 1109.2 459.2 1106.8 461.2 1103.8 465.8 1102.8 470.2 1082.8 487.8 1084.8 509.2 1103.8 528.2 1134.2 526.8 1152.8 504.8 1151.8 489.8 1131.2 475.2 1131.2 470.8 1129.8 468.8 1129.8 465.2 1128.2 463.2 1127.8 460.2 1124.8 459.8 1120.8 457.2 1117.2 457.2ZM1354.2 372.8 1353.2 374.2 1353.2 379.8 1352.2 382.2 1353.2 381.8ZM1350.8 370.8 1349.8 375.8 1350.2 377.2 1351.2 372.2ZM1432.8 286.2 1436.2 298.8 1437.8 300.8 1433.8 286.8ZM1435.2 285.2 1435.2 287.8 1436.2 290.8 1437.2 291.2 1437.2 289.2ZM900.2 195.8 899.2 206.8 899.8 216.8 906.8 249.2 916.2 271.2 930.8 293.8 948.2 315.8 967.8 337.2 966.2 325.2 966.8 324.8 971.8 328.8 1020.2 377.8 1045.2 406.2 1049.8 410.2 1051.8 410.2 1051.8 411.8 1055.8 407.8 1054.2 406.8 1055.2 405.2 1056.8 404.8 1057.8 406.2 1061.2 402.8 1059.8 401.8 1061.2 399.8 1062.8 399.2 1063.2 401.2 1066.8 397.8 1065.2 396.8 1065.8 393.8 1067.2 392.2 1066.2 390.8 1066.2 386.2 1071.2 383.2 1076.2 382.8 1078.8 380.8 1081.2 380.8 1084.2 382.8 1086.8 382.8 1074.8 366.8 1054.8 344.8 1001.8 291.8 1001.2 290.2 999.2 289.2 998.8 287.8 979.2 267.2 976.8 263.2 974.8 262.2 953.8 233.2 943.8 213.2 940.8 204.2 939.2 195.2 940.2 175.8 943.2 166.2 946.2 160.2 947.8 159.8 947.8 158.2 949.2 158.2 950.8 160.2 963.8 169.8 959.2 182.8 957.2 193.8 957.2 208.2 958.2 214.2 960.2 217.8 961.2 207.2 964.8 194.8 970.8 183.2 977.8 173.8 983.2 168.2 994.2 161.2 1015.2 151.8 1031.2 146.8 1058.8 142.2 1077.8 142.2 1099.2 145.2 1116.2 150.8 1134.8 160.2 1146.2 172.2 1155.8 188.8 1159.8 202.2 1159.8 216.8 1176.2 230.2 1178.2 230.8 1193.8 230.8 1202.2 229.2 1216.8 214.8 1221.2 204.8 1229.2 195.2 1251.8 181.2 1262.2 176.8 1282.8 170.8 1294.8 169.2 1310.2 169.2 1321.2 170.2 1340.2 173.8 1364.2 181.8 1383.2 191.8 1393.2 201.2 1402.8 212.8 1410.2 226.8 1410.2 228.2 1411.2 228.8 1414.8 241.8 1413.8 246.8 1409.2 253.8 1409.2 255.2 1407.8 256.2 1403.2 263.8 1401.8 264.2 1401.8 265.8 1398.2 268.8 1398.2 269.8 1396.2 270.8 1396.2 271.8 1394.2 272.8 1394.2 273.8 1392.2 274.8 1392.2 275.8 1390.2 276.8 1387.8 280.2 1383.8 282.8 1383.2 284.2 1375.8 290.2 1373.8 290.8 1373.2 292.2 1371.2 292.8 1359.8 301.8 1357.8 302.2 1338.2 314.8 1286.8 341.2 1244.2 360.8 1193.2 385.8 1165.8 400.8 1146.8 413.2 1144.8 413.8 1137.2 419.8 1133.2 421.8 1139.8 421.2 1140.8 420.2 1143.2 420.8 1147.8 419.2 1154.2 415.2 1158.2 415.2 1159.2 413.2 1160.8 412.8 1161.2 413.2 1159.8 415.2 1160.8 419.2 1166.2 419.8 1166.8 420.8 1164.2 422.2 1168.8 426.2 1177.2 426.8 1203.8 410.8 1205.2 410.8 1210.2 407.2 1221.2 402.2 1225.2 399.2 1227.2 399.2 1228.8 397.2 1233.8 395.8 1241.8 390.8 1244.2 390.8 1245.8 388.8 1247.2 388.8 1248.8 387.2 1250.8 387.8 1252.8 385.2 1254.2 385.8 1256.2 383.8 1257.8 384.2 1259.8 382.2 1261.2 382.8 1263.2 380.2 1264.8 381.2 1266.8 378.8 1268.8 380.2 1272.8 391.8 1268.2 379.2 1270.2 377.2 1271.2 377.2 1272.8 379.8 1280.8 401.2 1272.2 378.2 1272.2 376.8 1273.8 375.2 1275.8 376.8 1284.2 399.2 1275.8 376.2 1277.2 373.8 1278.2 373.8 1279.8 376.2 1287.8 398.2 1288.2 397.8 1280.8 378.2 1279.8 373.2 1280.8 372.2 1282.8 373.2 1291.2 396.2 1291.2 394.2 1283.2 373.2 1283.2 371.8 1284.8 370.2 1286.2 371.2 1293.8 392.8 1295.2 394.2 1286.8 371.2 1287.8 368.8 1289.8 369.2 1296.2 388.2 1298.8 392.8 1290.8 369.8 1290.8 367.8 1291.8 366.8 1293.2 367.2 1301.2 390.2 1302.8 390.8 1294.2 367.8 1294.2 366.2 1296.2 365.2 1298.8 370.2 1304.8 388.2 1306.2 389.2 1298.2 366.8 1298.2 364.2 1299.8 363.2 1300.8 364.2 1308.8 387.2 1309.8 387.2 1301.8 364.8 1301.8 362.8 1302.8 361.8 1304.2 362.2 1311.8 384.2 1313.8 385.8 1305.2 361.8 1306.8 359.8 1308.2 361.2 1315.8 383.2 1317.2 383.8 1309.2 361.2 1309.8 358.2 1311.8 359.2 1319.8 382.2 1321.2 382.2 1312.8 358.8 1313.2 356.8 1314.2 356.2 1315.2 357.2 1323.2 380.2 1324.8 380.2 1316.2 356.8 1317.8 354.8 1319.2 356.2 1326.8 378.2 1328.8 378.8 1329.8 380.2 1320.2 355.8 1320.8 353.2 1322.8 354.2 1330.8 376.8 1332.8 377.2 1333.2 379.2 1333.2 377.2 1331.8 375.8 1323.8 353.2 1324.8 351.2 1326.2 352.2 1333.8 374.2 1335.8 374.8 1327.2 351.2 1328.2 349.8 1329.8 350.2 1337.2 372.2 1338.2 373.8 1340.2 374.2 1340.2 377.8 1340.2 373.8 1336.2 364.8 1331.2 348.2 1333.2 348.2 1340.8 370.2 1343.8 372.8 1344.2 371.2 1341.8 368.2 1334.8 348.2 1335.8 345.8 1337.2 347.2 1344.8 369.2 1347.8 370.8 1345.8 367.8 1338.2 346.2 1339.2 344.2 1340.2 344.8 1347.8 366.2 1351.2 369.8 1351.8 368.2 1349.2 365.2 1341.8 344.2 1342.8 342.2 1344.2 343.8 1351.8 365.2 1354.2 366.8 1354.2 371.8 1355.2 366.8 1353.2 364.8 1345.2 341.8 1346.2 340.8 1347.8 341.8 1354.8 362.8 1355.8 364.2 1357.8 364.8 1356.2 380.2 1358.8 364.8 1356.8 362.8 1348.8 340.2 1349.8 338.8 1350.8 339.2 1358.8 362.2 1361.2 363.8 1359.2 377.2 1359.8 378.2 1362.2 362.8 1360.2 361.2 1352.8 339.8 1352.8 337.8 1353.8 336.8 1362.2 360.2 1364.8 361.8 1362.8 374.2 1363.2 376.2 1365.2 360.2 1362.8 356.8 1356.2 338.2 1356.2 335.8 1357.2 335.2 1358.8 337.8 1365.2 357.2 1368.2 359.8 1366.2 374.8 1367.2 372.2 1368.8 358.2 1366.8 356.2 1359.2 334.2 1360.2 333.2 1361.2 333.8 1369.2 357.2 1371.2 357.8 1369.8 372.8 1372.2 357.2 1370.8 355.8 1362.8 332.2 1364.8 332.2 1372.8 355.2 1374.8 356.2 1372.8 371.2 1373.8 369.8 1375.8 354.8 1373.2 351.8 1366.2 331.8 1366.8 329.8 1368.2 330.8 1375.2 351.8 1378.2 354.2 1375.8 369.8 1376.8 368.8 1378.8 352.8 1377.2 351.8 1369.8 330.2 1370.2 327.8 1371.8 329.2 1378.8 350.2 1381.2 352.2 1379.2 367.8 1380.2 366.2 1382.2 351.2 1379.2 346.2 1372.8 326.8 1373.8 325.8 1374.8 326.8 1381.8 347.8 1384.8 350.2 1382.2 365.8 1383.2 364.8 1385.2 352.8 1385.2 348.8 1383.2 346.2 1376.2 326.2 1376.8 324.2 1379.2 328.2 1385.8 347.2 1387.8 348.2 1385.2 364.2 1386.8 361.2 1388.8 347.2 1386.8 345.2 1379.2 323.2 1380.2 322.2 1381.8 324.2 1388.8 345.2 1390.8 347.2 1388.2 362.2 1389.8 360.8 1392.2 344.2 1393.8 345.2 1391.8 359.8 1392.8 358.8 1394.8 343.2 1395.8 342.2 1396.8 342.8 1394.8 357.8 1395.8 356.8 1398.8 340.2 1399.8 342.8 1398.8 344.8 1399.2 345.8 1398.2 347.8 1398.8 348.8 1397.8 350.8 1397.2 356.8 1399.2 354.2 1399.8 351.2 1400.2 354.2 1402.2 351.8 1403.2 352.2 1404.8 350.8 1405.2 348.8 1406.2 349.8 1405.8 350.8 1410.2 346.8 1410.8 345.2 1411.8 345.8 1413.8 344.8 1415.2 342.8 1421.2 338.8 1440.8 319.2 1459.8 294.8 1463.8 288.2 1470.8 272.2 1476.8 243.8 1476.2 225.8 1473.8 217.8 1474.2 217.2 1472.2 213.2 1472.8 212.8 1468.8 203.8 1457.8 184.8 1448.2 171.2 1437.2 159.8 1420.2 146.8 1398.8 134.8 1378.2 125.8 1357.2 119.2 1331.8 113.8 1315.2 112.2 1294.8 112.2 1290.8 113.2 1283.8 113.2 1265.2 116.8 1251.2 120.8 1218.8 133.8 1199.8 143.8 1194.8 136.8 1183.2 124.8 1173.2 116.8 1157.8 107.8 1137.8 99.2 1121.8 93.8 1099.8 88.2 1078.2 85.8 1048.8 86.2 1028.2 89.2 1017.8 91.8 983.8 103.2 970.2 109.8 951.2 120.8 930.8 136.8 919.8 149.8 914.8 157.8 903.2 184.2ZM1404.2 336.8 1405.2 337.2 1404.8 339.2 1403.8 337.8ZM1406.8 334.8 1407.8 334.2 1408.2 335.8 1407.8 336.2ZM1383.2 320.2 1385.2 323.8 1392.2 343.8 1391.8 344.8 1390.2 343.8 1382.2 321.2ZM1386.2 318.8 1387.8 320.2 1394.8 340.2 1394.2 342.8 1385.8 320.2ZM1421.2 317.2 1423.2 321.2 1422.8 322.2 1420.8 319.2ZM1389.2 316.8 1390.8 318.2 1397.8 338.2 1397.2 340.8 1388.8 318.2ZM1392.2 314.8 1394.2 317.2 1400.8 337.2 1402.8 338.8 1401.2 344.8 1401.2 339.2 1399.2 337.8 1391.8 316.2ZM1395.2 312.8 1396.8 314.2 1403.8 334.2 1403.2 336.8 1394.8 314.2ZM1398.2 310.8 1399.8 312.2 1406.8 332.2 1406.2 334.8 1404.8 332.8 1398.2 314.2ZM1401.2 308.8 1409.8 330.8 1409.2 332.8 1407.8 331.2 1400.8 310.8ZM1404.2 306.8 1412.2 328.2 1411.8 330.2 1403.2 307.8ZM1406.8 305.2 1408.8 308.2 1415.2 327.2 1414.8 328.2 1412.8 325.2 1406.2 306.2ZM1409.8 302.8 1417.8 324.8 1417.2 325.8 1415.2 322.8 1409.2 305.2ZM1412.2 301.2 1413.8 303.2 1420.2 322.2 1419.8 324.2 1411.8 302.8ZM1414.8 298.8 1421.2 315.8 1420.8 317.8 1414.2 300.8ZM1417.2 296.8 1419.8 301.8 1425.8 319.2 1425.2 319.8 1423.8 318.8 1416.8 298.8ZM1419.8 294.8 1427.8 315.8 1427.2 317.8 1419.2 296.2ZM1422.2 292.8 1428.2 308.2 1429.8 315.2 1428.8 314.8 1421.8 295.2ZM1424.2 290.8 1425.8 292.2 1432.2 311.2 1431.8 313.2 1424.2 293.8ZM1426.8 288.8 1429.2 293.2 1432.2 304.2 1433.8 306.2 1434.8 309.8 1434.2 311.2 1432.8 309.8 1426.2 290.8ZM1429.2 286.2 1436.8 306.8 1436.2 309.2 1434.2 305.8 1428.2 288.2ZM1469.8 253.8 1470.2 253.2 1471.8 254.8 1470.8 255.2ZM1461.2 247.2 1465.8 251.8 1465.2 253.8 1467.2 255.8 1467.2 257.8 1468.2 258.8 1469.8 258.2 1467.8 255.8 1468.2 254.2 1471.8 257.2 1470.8 258.8 1471.2 259.8 1463.8 275.2 1446.2 298.2 1443.2 300.8 1440.2 292.2 1443.2 301.2 1442.2 302.2 1440.2 299.8 1441.2 304.2 1440.2 304.8 1438.2 302.2 1438.2 307.2 1430.2 285.2 1431.2 284.2 1432.2 284.8 1432.2 282.8 1435.8 279.8 1438.8 288.2 1435.8 279.8 1436.2 278.2 1451.2 259.2 1457.2 247.8 1458.2 247.2 1459.8 248.8 1459.8 250.8 1460.8 251.8 1462.2 251.2 1460.2 248.8ZM1462.2 246.8 1462.8 246.2 1464.8 248.2 1463.8 248.8Z"/>
<path fill="#4c0000" d="M1112.8 457.8 1109.2 459.2 1106.8 461.8 1105.8 464.2 1103.8 465.8 1104.2 467.2 1103.2 469.8 1082.8 487.8 1084.2 508.2 1103.8 528.2 1105.2 528.2 1104.2 517.2 1104.8 513.8 1131.2 512.8 1132.2 526.8 1134.2 526.8 1152.8 504.8 1151.8 490.2 1131.8 476.2 1130.8 474.8 1131.2 471.2 1129.2 467.8 1129.8 465.8 1128.2 463.8 1127.8 460.2 1125.8 460.2 1120.8 457.2ZM1475.8 223.8 1476.8 242.8 1476.8 230.2ZM1064.2 135.2 1064.2 137.2 1065.2 137.2 1065.2 135.2ZM1061.8 133.2 1060.2 134.2 1060.2 136.8 1061.2 136.8ZM1057.2 132.8 1057.2 135.8 1058.2 135.8 1058.2 132.8ZM1066.8 131.8 1066.8 134.2 1067.8 134.2 1067.8 131.8ZM1054.2 131.8 1054.2 134.8 1055.2 134.8 1055.2 131.8ZM1063.8 129.2 1063.8 131.8 1064.8 131.8 1064.8 129.2ZM1060.8 128.2 1059.8 128.8 1059.8 131.2 1060.8 131.2ZM1056.8 127.8 1056.8 130.2 1057.8 130.2 1057.8 127.8ZM1053.8 126.2 1053.8 129.8 1054.8 129.8 1054.8 126.2ZM1066.2 125.8 1066.2 128.8 1067.2 128.8 1067.2 125.8ZM900.2 195.8 899.2 206.8 899.8 216.8 905.2 243.8 912.8 264.2 923.8 283.8 938.2 303.8 939.8 304.8 938.2 294.8 939.2 294.2 962.8 319.2 1012.8 369.2 1031.2 389.8 1036.2 394.2 1038.2 394.8 1039.2 393.8 1041.8 393.8 1045.8 387.8 1048.2 387.8 1050.2 385.8 1050.8 383.2 1052.2 381.8 1054.2 381.8 1053.2 379.8 1053.8 378.8 1064.2 378.2 1065.2 376.2 1064.8 371.2 1065.8 369.8 1074.2 368.8 1067.8 359.8 1054.2 344.8 992.2 282.2 991.8 280.8 987.2 276.8 970.2 256.8 953.2 232.8 944.8 216.2 940.2 203.2 938.8 193.2 938.8 184.8 940.2 174.2 942.8 166.2 950.2 151.8 958.2 141.8 966.2 134.2 968.8 134.2 969.2 136.2 967.8 137.2 969.8 137.2 971.2 140.8 973.2 140.8 974.2 141.8 972.8 143.2 974.8 144.2 973.8 145.8 975.2 145.8 977.2 149.2 979.2 150.8 971.2 160.2 965.8 168.8 959.8 183.2 957.8 193.8 957.2 204.2 958.2 213.2 960.2 217.2 961.2 207.2 964.8 194.8 970.8 183.2 977.8 173.8 983.2 168.2 994.2 161.2 1015.2 151.8 1031.2 146.8 1058.8 142.2 1077.8 142.2 1099.2 145.2 1116.2 150.8 1134.8 160.2 1146.2 172.2 1155.8 188.8 1159.8 202.2 1159.8 216.8 1176.2 230.2 1178.2 230.8 1193.8 230.8 1202.2 229.2 1216.8 214.8 1221.2 204.8 1229.2 195.2 1251.8 181.2 1262.2 176.8 1282.8 170.8 1294.8 169.2 1310.2 169.2 1321.2 170.2 1340.2 173.8 1364.2 181.8 1383.2 191.8 1393.2 201.2 1402.8 212.8 1410.2 226.8 1410.2 228.2 1411.2 228.8 1411.8 232.2 1412.8 233.2 1414.8 244.2 1412.8 247.2 1412.8 248.8 1411.8 249.2 1411.8 250.8 1409.2 253.8 1409.2 255.2 1407.8 256.2 1403.2 263.8 1401.8 264.2 1401.8 265.8 1400.2 266.2 1398.2 269.8 1396.2 270.8 1396.2 271.8 1394.2 272.8 1394.2 273.8 1392.2 274.8 1392.2 275.8 1390.2 276.8 1387.8 280.2 1383.8 282.8 1383.2 284.2 1375.8 290.2 1373.8 290.8 1373.2 292.2 1371.2 292.8 1359.8 301.8 1357.8 302.2 1341.8 312.8 1286.8 341.2 1244.2 360.8 1193.2 385.8 1151.8 409.8 1153.2 410.8 1156.8 408.8 1158.2 409.8 1160.8 409.2 1161.8 407.8 1164.2 407.8 1175.2 402.8 1176.2 403.8 1175.8 405.2 1180.8 406.8 1182.2 410.2 1185.8 412.2 1189.2 417.2 1193.8 416.2 1209.2 407.2 1220.2 402.2 1222.2 400.2 1227.2 398.8 1229.2 396.8 1230.8 396.8 1232.2 395.2 1233.8 395.2 1249.2 386.8 1251.2 386.8 1252.2 385.2 1257.8 383.8 1259.8 381.8 1264.8 380.2 1274.2 374.8 1275.2 375.2 1277.2 373.2 1278.8 373.8 1284.8 369.8 1286.2 370.2 1288.2 368.2 1289.8 368.8 1291.2 366.8 1293.8 366.8 1295.8 364.8 1297.2 365.2 1298.8 363.2 1301.2 363.8 1303.2 361.2 1304.8 362.2 1306.2 359.8 1307.8 359.8 1308.8 361.2 1308.8 359.2 1310.2 357.8 1311.2 357.8 1312.8 360.2 1320.2 381.8 1312.2 358.8 1313.8 356.2 1315.8 357.2 1322.2 376.2 1324.2 379.8 1315.8 356.8 1317.8 354.2 1319.8 356.2 1327.8 378.2 1319.8 354.2 1321.2 352.8 1322.8 353.2 1331.2 376.2 1323.2 353.2 1324.8 350.8 1326.2 351.2 1334.8 374.2 1326.8 351.2 1328.2 349.2 1330.2 350.2 1338.8 373.2 1330.8 348.8 1332.2 347.2 1333.8 348.2 1342.2 371.2 1334.2 348.2 1335.2 345.8 1337.2 346.8 1343.8 365.8 1345.8 369.2 1337.8 345.8 1339.8 343.8 1341.2 345.8 1348.2 366.2 1349.8 367.8 1341.2 343.8 1342.8 341.8 1344.2 342.8 1352.8 365.8 1353.2 365.2 1345.2 343.2 1345.2 341.2 1346.2 340.2 1347.8 340.8 1355.2 362.8 1356.8 363.8 1348.8 341.8 1348.8 339.2 1350.2 338.2 1352.8 342.8 1358.8 360.8 1360.2 362.2 1352.8 341.2 1352.2 337.8 1353.8 336.2 1354.8 337.2 1362.2 359.2 1363.8 360.2 1355.8 337.8 1355.8 335.8 1356.8 334.8 1358.2 335.8 1365.8 357.8 1367.2 358.2 1358.8 334.8 1360.2 332.8 1361.8 333.8 1369.2 356.2 1370.2 356.8 1369.8 353.2 1362.2 333.2 1363.2 331.2 1365.2 332.2 1372.2 353.2 1375.2 355.8 1372.8 351.8 1365.8 331.8 1366.8 329.2 1368.2 329.8 1375.8 351.8 1377.2 352.8 1369.2 330.2 1369.2 328.2 1370.8 327.2 1372.8 330.8 1379.2 350.2 1380.8 350.8 1381.8 352.8 1372.2 327.2 1373.8 325.2 1374.8 326.2 1382.2 348.2 1383.8 348.8 1375.8 325.8 1376.8 323.8 1378.2 324.8 1384.8 344.2 1388.2 348.8 1379.2 324.8 1379.2 322.8 1380.2 321.8 1381.2 322.2 1387.8 341.8 1391.2 347.8 1391.8 346.2 1389.8 343.8 1382.2 322.8 1382.2 320.8 1383.8 319.8 1391.8 342.2 1393.8 344.2 1394.2 346.2 1394.8 344.2 1392.8 341.8 1385.2 320.2 1386.8 317.8 1387.8 318.8 1395.2 341.2 1397.2 342.2 1394.8 355.8 1395.2 357.2 1397.8 341.8 1395.8 339.8 1388.2 318.2 1389.2 316.2 1390.8 317.2 1398.2 339.2 1400.2 340.8 1397.8 355.8 1398.8 354.8 1400.8 339.8 1398.8 337.8 1391.2 315.2 1392.2 314.2 1393.8 315.2 1401.2 337.2 1403.2 338.8 1400.8 353.8 1401.8 351.8 1403.8 338.2 1401.8 335.8 1394.2 313.2 1395.2 312.2 1397.2 314.2 1404.2 335.2 1405.8 336.8 1403.2 351.8 1404.2 351.2 1406.8 335.8 1404.2 332.8 1397.2 312.8 1398.2 310.2 1399.8 311.2 1407.2 333.2 1408.8 334.2 1406.2 350.2 1407.2 348.8 1409.8 333.8 1407.2 331.2 1400.2 309.2 1401.8 308.2 1402.8 309.8 1408.2 326.8 1411.2 332.2 1408.8 348.2 1410.8 343.2 1412.2 331.2 1410.2 329.2 1403.2 309.2 1403.8 306.2 1405.2 306.8 1411.2 325.2 1414.2 330.8 1411.8 345.8 1412.8 344.8 1413.2 339.8 1414.8 336.8 1415.2 338.8 1414.2 343.8 1416.2 341.2 1416.8 342.2 1418.2 340.8 1417.8 340.2 1418.8 338.8 1419.2 340.2 1421.2 337.8 1421.8 338.2 1440.8 319.2 1459.8 294.8 1463.8 288.2 1470.8 272.2 1476.8 243.8 1475.8 244.8 1472.2 259.8 1464.8 274.8 1452.2 291.8 1434.8 312.2 1433.2 312.2 1433.2 313.2 1431.2 314.2 1428.8 308.8 1430.8 313.8 1430.8 315.2 1428.8 316.2 1420.8 293.8 1421.8 292.2 1423.2 292.2 1423.2 290.8 1425.2 289.8 1435.8 278.8 1446.8 264.8 1453.2 254.8 1458.2 243.8 1461.2 233.8 1462.2 226.8 1462.2 212.8 1458.2 196.8 1448.2 177.2 1439.8 165.2 1426.8 151.2 1420.2 146.8 1393.8 132.2 1366.2 121.8 1337.8 114.8 1315.2 112.2 1294.8 112.2 1290.8 113.2 1283.8 113.2 1261.2 117.8 1229.2 129.2 1213.2 136.2 1199.8 143.8 1194.8 136.8 1183.2 124.8 1173.2 116.8 1157.8 107.8 1137.8 99.2 1121.8 93.8 1099.8 88.2 1078.2 85.8 1048.8 86.2 1028.2 89.2 1017.8 91.8 983.8 103.2 970.2 109.8 951.2 120.8 930.8 136.8 919.8 149.8 914.8 157.8 903.2 184.2ZM1418.2 326.2 1419.2 327.2 1418.8 328.8 1417.8 328.2ZM1406.8 304.2 1407.8 304.8 1409.8 309.2 1415.2 326.8 1416.8 328.2 1416.2 333.2 1414.8 336.8 1414.2 334.2 1415.2 329.2 1413.2 327.8 1405.8 306.2ZM1409.8 302.2 1411.2 304.2 1418.2 324.8 1417.2 327.2 1414.8 322.8 1408.8 305.2 1408.8 303.2ZM1412.2 300.2 1414.2 302.8 1416.8 311.8 1421.8 324.2 1419.2 324.8 1418.2 323.2 1411.2 302.8ZM1414.8 298.2 1416.2 299.2 1422.2 318.2 1424.2 321.2 1423.8 323.2 1421.2 322.2 1413.8 300.8ZM1417.2 296.2 1418.2 296.8 1420.2 301.2 1423.2 311.8 1426.8 319.8 1425.8 320.8 1423.8 320.2 1416.2 299.2 1416.2 297.2ZM1419.2 294.2 1421.2 295.2 1428.8 316.8 1427.8 318.8 1424.8 314.8 1418.8 296.8ZM1307.8 164.8 1307.8 167.2 1306.2 165.8ZM1306.2 151.8 1307.2 153.2 1309.2 153.2 1308.8 157.8 1308.2 154.8 1305.8 154.2ZM1308.8 159.2 1308.2 163.8 1307.8 160.8 1305.2 160.2 1305.2 157.2 1303.2 157.2 1303.8 161.2 1305.8 161.2 1306.2 165.8 1305.2 166.2 1304.8 163.8 1303.2 163.2 1301.8 167.2 1297.2 166.8 1296.8 165.8 1292.2 164.2 1291.2 162.8 1289.8 163.2 1288.8 162.2 1289.8 161.2 1292.2 161.2 1296.2 163.2 1297.2 162.8 1298.8 164.2 1300.2 162.8 1301.2 163.2 1301.8 162.8 1300.2 162.2 1299.8 160.8 1297.8 160.2 1297.2 158.8 1289.2 154.8 1290.2 153.8 1291.2 154.8 1292.8 154.2 1297.8 156.2 1299.2 157.8 1300.8 156.2 1302.2 156.2 1297.8 152.8 1301.2 151.2 1303.8 152.2 1304.2 154.8 1306.2 154.8 1306.2 158.8ZM1038.8 141.2 1039.8 140.8 1040.2 142.2 1039.8 142.8ZM1045.2 137.2 1046.2 139.2 1045.8 141.8 1044.2 140.2 1044.2 138.2ZM1077.2 136.8 1077.2 140.2 1076.2 139.2ZM1042.2 136.8 1043.2 138.8 1042.8 140.8 1041.2 138.8ZM1039.2 135.8 1040.2 137.8 1039.8 139.2 1038.2 137.2ZM1044.8 132.2 1045.8 134.2 1045.8 136.2 1044.8 137.2 1043.8 135.2 1043.8 133.2ZM1041.8 131.8 1042.8 133.8 1042.2 135.8 1040.8 133.8ZM1038.2 131.2 1039.2 131.8 1039.2 134.2 1038.2 133.8ZM1076.8 130.2 1076.8 134.8 1075.8 133.8ZM1035.8 130.2 1036.8 132.2 1036.2 133.2 1034.8 131.2ZM1044.2 127.2 1045.2 129.2 1045.2 131.2 1044.2 132.2 1043.2 130.2 1043.2 128.2ZM1040.8 127.2 1042.2 128.8 1041.8 130.8 1040.2 128.8ZM1038.2 127.2 1039.2 128.2 1038.8 129.8 1037.8 129.2ZM1046.8 125.8 1048.2 128.8 1049.2 140.2 1048.2 141.8 1047.2 140.8 1047.2 133.2 1046.2 131.2ZM1076.2 125.2 1076.2 128.2 1075.2 126.8ZM1049.8 125.2 1050.8 125.8 1051.2 134.2 1052.2 135.2 1052.2 140.2 1051.2 141.2 1050.2 140.2 1048.8 126.2ZM1051.8 125.2 1054.2 124.2 1058.8 124.2 1059.2 125.8 1060.2 125.8 1060.8 124.2 1062.2 123.8 1063.2 125.8 1064.2 125.8 1065.2 123.8 1067.8 123.8 1068.8 125.8 1069.8 125.8 1070.8 124.2 1071.8 125.2 1071.8 127.2 1070.8 128.8 1069.2 128.2 1069.2 131.8 1070.2 131.8 1070.2 129.8 1071.2 128.8 1072.8 129.2 1073.8 126.2 1074.8 127.8 1074.8 130.2 1073.8 131.8 1072.2 131.2 1071.2 134.8 1069.8 134.2 1069.8 137.8 1070.8 137.8 1070.8 135.8 1071.8 134.8 1073.2 135.2 1074.2 132.2 1075.2 133.2 1075.2 136.2 1074.2 137.8 1072.8 137.2 1071.8 139.8 1069.2 139.8 1068.2 137.8 1067.2 137.8 1066.2 139.8 1063.2 139.8 1061.8 138.8 1059.8 140.2 1058.8 138.2 1057.8 138.2 1056.8 140.2 1055.8 139.2 1055.8 136.8 1054.8 136.8 1054.8 139.8 1053.8 140.8 1052.8 139.8 1052.8 135.8 1051.8 134.8Z"/>
<path fill="#550000" d="M1120.2 457.2 1113.2 457.8 1108.8 459.8 1104.2 465.2 1103.2 469.8 1082.8 487.8 1084.8 509.2 1103.8 528.2 1104.2 524.8 1103.2 513.8 1104.2 512.8 1132.2 511.8 1133.2 526.2 1134.2 526.8 1152.8 504.8 1151.8 490.2 1131.2 475.8 1130.8 470.2 1129.2 468.2 1129.8 465.8 1128.2 463.8 1128.2 461.2ZM1129.8 471.8 1103.8 471.8 1128.8 470.8ZM1475.2 251.2 1470.8 264.2 1466.8 272.2 1460.8 281.2 1442.2 304.8 1434.8 312.8 1433.8 312.8 1432.8 314.8 1431.2 315.2 1431.2 316.8 1429.2 317.8 1428.2 320.2 1427.2 319.2 1426.8 322.8 1424.8 322.8 1423.8 325.8 1424.2 327.8 1423.2 329.2 1423.8 330.2 1422.8 331.2 1422.8 335.8 1421.8 337.2 1422.8 336.8 1423.8 332.2 1424.8 332.8 1424.2 335.2 1426.2 334.2 1425.2 332.8 1426.2 332.2 1426.8 333.2 1440.8 319.2 1462.2 290.8 1470.8 272.2ZM1425.8 324.2 1426.2 325.8 1425.2 330.8 1424.2 331.2 1423.8 329.8 1424.8 324.8ZM1298.2 161.2 1298.2 163.2 1299.2 163.2 1299.2 161.2ZM1298.8 154.8 1298.8 156.8 1299.8 156.8 1299.8 154.8ZM899.2 206.8 900.8 223.2 905.2 243.8 907.8 252.2 916.8 271.8 915.2 263.2 916.8 263.2 931.8 283.8 950.8 305.8 1018.8 375.2 1023.2 378.2 1026.8 377.2 1028.2 375.8 1028.2 373.8 1031.8 370.2 1033.8 370.2 1036.2 368.2 1036.2 366.2 1038.2 364.2 1037.8 361.8 1038.8 360.8 1042.8 360.8 1038.8 359.2 1039.8 357.2 1043.2 357.2 1044.8 355.8 1052.2 352.8 1055.8 348.2 1051.8 342.8 1049.8 341.8 1049.2 340.2 996.8 287.2 974.2 262.2 953.2 233.2 946.8 221.2 940.2 204.2 938.8 195.2 938.8 181.8 941.2 169.2 945.2 159.2 949.8 151.8 957.8 141.8 964.8 134.8 970.2 130.8 971.2 131.2 972.2 129.2 973.8 130.2 973.8 132.2 975.2 134.2 975.2 136.2 976.8 138.2 980.8 149.8 972.2 159.8 966.2 168.8 959.8 184.8 957.8 195.8 957.8 205.8 958.8 213.8 960.8 217.2 961.2 207.2 964.8 194.8 970.8 183.2 977.8 173.8 983.2 168.2 994.2 161.2 1015.2 151.8 1031.2 146.8 1058.8 142.2 1077.8 142.2 1099.2 145.2 1116.2 150.8 1134.8 160.2 1146.2 172.2 1155.8 188.8 1159.8 202.2 1159.8 216.8 1176.2 230.2 1178.2 230.8 1193.8 230.8 1202.2 229.2 1216.8 214.8 1221.2 204.8 1229.2 195.2 1251.8 181.2 1277.2 171.8 1294.8 169.2 1310.2 169.2 1330.2 171.8 1342.2 174.2 1359.2 179.8 1371.8 185.2 1383.2 191.8 1393.2 201.2 1402.8 212.8 1410.2 226.8 1410.2 228.2 1411.2 228.8 1411.8 232.2 1412.8 233.2 1414.8 244.2 1412.8 247.2 1412.8 248.8 1411.8 249.2 1411.8 250.8 1409.2 253.8 1409.2 255.2 1407.8 256.2 1403.2 263.8 1401.8 264.2 1401.8 265.8 1400.2 266.2 1398.2 269.8 1396.2 270.8 1396.2 271.8 1394.2 272.8 1394.2 273.8 1392.2 274.8 1392.2 275.8 1390.2 276.8 1387.8 280.2 1383.8 282.8 1383.2 284.2 1375.8 290.2 1373.8 290.8 1373.2 292.2 1371.2 292.8 1359.8 301.8 1357.8 302.2 1341.8 312.8 1286.8 341.2 1223.2 370.8 1172.2 397.2 1173.8 398.2 1175.2 396.8 1177.2 397.2 1177.8 396.2 1179.2 397.2 1180.2 395.8 1184.2 395.8 1185.2 394.2 1187.2 394.8 1188.2 393.2 1193.2 392.2 1194.2 393.8 1192.8 400.2 1198.8 406.2 1208.2 406.8 1213.8 404.8 1215.2 403.2 1217.8 402.8 1222.2 399.8 1226.8 398.2 1242.2 389.8 1243.8 389.8 1245.2 388.2 1251.2 386.2 1252.2 384.8 1257.8 383.2 1262.8 379.8 1264.8 379.8 1270.2 376.2 1271.8 376.2 1276.8 373.2 1278.8 373.2 1284.2 369.8 1286.2 369.8 1288.2 367.8 1290.2 367.8 1299.2 362.8 1301.2 362.8 1306.2 359.2 1308.2 359.2 1309.8 357.8 1312.2 357.2 1313.8 355.8 1315.8 355.8 1321.2 352.2 1322.8 352.8 1324.2 350.8 1326.2 350.8 1328.2 348.8 1330.2 349.2 1332.2 346.8 1333.8 347.2 1335.8 345.2 1337.2 345.8 1338.8 343.8 1340.8 343.8 1342.2 341.8 1344.8 341.8 1346.8 339.8 1348.2 340.2 1349.8 338.2 1351.8 339.2 1353.2 336.2 1355.2 336.8 1357.2 334.2 1358.2 335.2 1360.8 332.2 1361.8 333.2 1363.8 330.8 1365.2 331.2 1367.2 328.8 1369.2 330.8 1376.2 351.8 1368.8 328.8 1370.2 327.2 1372.2 328.8 1372.8 325.8 1374.8 325.2 1376.8 330.2 1375.2 324.8 1377.8 323.2 1379.8 327.8 1378.8 322.8 1380.2 321.2 1381.8 322.2 1381.8 320.8 1383.2 319.2 1384.8 320.2 1385.8 322.8 1384.8 319.2 1387.2 317.8 1395.8 340.8 1387.8 318.2 1389.2 315.8 1391.2 316.8 1398.8 338.8 1390.8 316.2 1391.2 314.8 1393.2 313.8 1394.8 316.2 1394.2 312.8 1395.2 311.8 1396.8 312.2 1398.2 309.8 1399.8 310.2 1400.2 308.8 1402.8 307.8 1403.8 305.8 1405.2 306.2 1406.2 304.2 1408.2 304.2 1409.8 301.8 1410.8 302.2 1412.2 299.8 1415.8 297.8 1425.2 289.2 1438.2 275.2 1448.2 262.2 1454.2 252.2 1459.2 239.8 1461.8 227.2 1461.8 212.8 1458.2 197.8 1447.8 177.2 1437.8 163.8 1426.8 152.8 1415.2 143.8 1393.8 132.2 1378.2 125.8 1357.2 119.2 1331.8 113.8 1315.2 112.2 1294.8 112.2 1290.8 113.2 1283.8 113.2 1265.2 116.8 1251.2 120.8 1218.8 133.8 1199.8 143.8 1194.8 136.8 1183.2 124.8 1173.2 116.8 1157.8 107.8 1137.8 99.2 1121.8 93.8 1099.8 88.2 1078.2 85.8 1054.8 85.8 1040.2 87.2 1025.8 89.8 1008.8 94.2 978.2 105.8 946.8 123.8 936.2 131.8 927.2 140.2 914.8 157.8 903.2 184.2 900.2 195.8ZM1201.8 213.2 1201.2 228.8 1185.2 229.8 1177.2 229.2 1177.8 213.8ZM1341.8 169.2 1342.2 170.8 1341.2 172.2 1340.8 170.8ZM1333.2 168.8 1333.8 170.8 1332.8 171.2 1332.2 169.8ZM1336.2 166.8 1336.8 169.8 1335.8 170.8 1335.2 168.2ZM1339.2 165.8 1339.8 167.8 1338.8 169.2 1338.2 167.2ZM1333.8 163.8 1334.2 166.2 1333.2 167.2 1332.8 164.8ZM1336.8 162.8 1337.2 164.8 1336.2 165.8 1335.8 163.8ZM1282.8 161.2 1283.2 162.8 1282.2 163.8 1281.8 162.2ZM1339.8 160.8 1340.2 162.8 1339.2 164.2 1338.8 162.2ZM1342.8 159.8 1343.2 161.2 1342.2 162.8 1341.8 161.2ZM1334.2 158.8 1334.8 161.2 1333.8 162.2 1333.2 159.8ZM1337.2 157.8 1337.8 159.8 1336.8 160.8 1336.2 158.8ZM1340.2 156.8 1340.8 158.2 1339.8 159.8 1339.2 157.8ZM1333.8 156.8 1334.8 155.2 1335.2 156.2 1334.2 157.2ZM1331.8 154.8 1332.2 158.2 1331.2 168.2 1330.2 170.2 1329.8 165.2 1330.8 155.2ZM1328.8 154.2 1329.8 155.2 1328.2 169.8 1327.2 170.2 1326.8 166.2 1327.8 155.8ZM1326.2 153.8 1326.8 156.8 1325.2 169.2 1324.2 169.8 1325.2 154.2ZM1323.2 153.2 1322.8 168.8 1321.8 169.2 1322.2 153.8ZM1320.8 152.8 1319.8 168.2 1318.8 168.8 1318.2 164.8 1319.2 153.8ZM1317.8 152.2 1318.2 156.8 1317.2 167.8 1315.8 168.2 1316.8 152.8ZM1315.2 152.2 1314.2 167.8 1313.2 168.2 1312.2 167.2 1313.8 152.8ZM1284.2 154.8 1285.2 153.8 1290.2 152.8 1292.2 153.8 1292.8 152.8 1293.8 154.2 1295.2 153.2 1296.2 155.2 1297.2 155.2 1297.2 151.8 1303.8 151.2 1304.8 153.8 1305.2 151.8 1306.8 151.2 1307.2 152.2 1309.8 152.2 1310.2 157.2 1310.8 152.2 1312.2 151.8 1312.8 155.2 1311.8 167.2 1309.8 167.2 1309.2 164.2 1308.2 167.8 1306.2 166.8 1304.8 167.2 1303.8 164.2 1302.8 167.2 1297.2 167.8 1296.2 166.2 1294.8 167.2 1293.8 165.2 1292.2 166.2 1291.2 163.8 1289.8 164.8 1288.8 163.2 1287.2 164.2 1285.2 163.2 1284.2 164.2 1284.2 161.2 1285.2 160.2 1286.8 160.8 1287.2 159.8 1288.2 160.8 1289.8 159.8 1291.8 160.8 1292.2 159.8 1293.2 161.2 1294.8 160.2 1295.8 162.2 1296.8 162.2 1296.8 159.2 1295.2 160.2 1294.2 157.8 1292.8 158.8 1291.8 156.8 1290.2 157.8 1289.2 155.8 1287.8 156.8 1285.8 155.2 1284.8 156.2ZM985.2 141.2 986.8 144.2 986.2 145.8 984.8 143.2ZM1097.8 138.8 1098.8 139.8 1098.2 141.8 1097.2 141.2ZM1095.2 137.8 1096.2 138.8 1095.8 142.2 1094.8 141.2ZM1092.8 137.2 1093.8 138.2 1093.2 142.2 1092.2 141.8ZM1090.2 137.2 1091.2 138.2 1090.8 142.8 1089.8 142.2ZM1015.8 133.8 1016.8 134.2 1017.8 141.8 1017.2 143.8 1016.2 142.2ZM1018.8 133.2 1019.8 134.8 1021.2 147.2 1020.8 148.8 1019.8 148.2 1018.2 136.2ZM1024.2 131.8 1025.2 132.8 1026.8 145.8 1026.2 147.2 1025.2 146.8 1023.8 135.2ZM1021.2 131.8 1022.2 132.2 1023.8 144.8 1023.2 147.2 1022.2 146.2 1020.8 133.8ZM1097.2 130.8 1098.2 131.8 1097.8 133.8 1096.8 133.2ZM981.2 130.8 984.8 138.8 984.2 140.8 980.8 132.8ZM1094.8 130.2 1095.8 131.2 1095.2 134.2 1094.2 133.8ZM1092.2 130.2 1093.2 130.8 1092.8 135.2 1091.8 134.8ZM1089.8 130.2 1090.8 131.2 1090.2 136.2 1089.2 135.8ZM1026.8 129.8 1027.8 130.2 1029.2 142.2 1028.8 146.2 1027.8 145.2 1026.2 132.2ZM1029.8 129.2 1030.8 129.8 1032.2 143.8 1031.8 145.8 1030.8 145.2 1029.2 133.8ZM1032.2 128.8 1033.8 130.8 1034.8 139.8 1034.2 144.8 1033.2 144.2 1031.8 130.8ZM974.2 128.2 975.8 129.2 982.8 148.2 981.8 149.2 974.8 133.2 974.8 131.2 973.8 130.2ZM1035.2 127.8 1036.2 128.2 1036.2 130.8 1037.2 132.2 1036.8 135.8 1037.8 137.2 1037.2 140.2 1038.2 141.8 1037.2 144.2 1036.2 143.8 1034.8 132.2ZM1089.2 126.8 1090.2 127.2 1089.8 129.2 1088.8 128.8ZM1040.8 126.8 1042.8 128.8 1042.2 132.2 1043.2 133.8 1042.8 137.2 1043.8 138.8 1042.8 142.8 1041.8 142.2 1040.8 138.8 1041.2 135.2 1040.2 133.8 1040.8 130.2 1039.8 128.8ZM1037.8 126.8 1039.8 128.2 1039.2 131.8 1040.2 133.2 1039.8 136.2 1040.8 137.8 1040.2 143.2 1038.8 142.8 1038.8 138.8 1037.8 137.2ZM976.8 126.8 984.2 144.8 984.2 147.8 982.2 144.8 980.2 137.8 976.8 130.2ZM1086.8 126.2 1087.8 126.8 1088.2 142.2 1087.2 141.8 1086.2 135.8 1086.8 131.2 1085.8 127.8ZM1084.2 125.8 1085.8 127.8 1085.8 141.8 1084.8 141.2 1083.8 137.8 1084.2 133.2 1083.2 128.2ZM1043.8 125.8 1044.8 126.2 1045.8 129.8 1045.2 132.2 1046.8 139.8 1045.8 142.2 1043.8 139.8 1044.2 136.8 1042.8 129.8ZM978.8 125.8 980.8 128.2 980.2 130.2 978.2 126.2ZM1081.2 125.2 1082.2 125.8 1083.2 128.8 1082.8 133.8 1083.8 138.2 1082.8 141.2 1081.2 139.8 1080.2 127.2ZM1078.8 125.2 1080.2 126.2 1081.2 139.8 1080.2 141.2 1078.8 139.8 1077.8 126.2ZM1045.8 125.8 1047.2 125.2 1048.2 127.8 1048.8 125.2 1050.8 124.8 1051.2 128.8 1051.2 124.8 1054.2 123.8 1058.8 123.8 1059.8 125.2 1061.2 123.2 1063.2 123.8 1063.8 124.8 1065.2 123.2 1067.8 123.2 1069.2 125.2 1070.8 123.8 1073.8 124.2 1074.8 126.2 1076.8 124.8 1077.8 126.2 1078.8 139.8 1077.8 140.8 1074.2 140.2 1073.2 137.8 1072.2 140.2 1068.8 140.2 1067.8 138.8 1065.8 140.2 1059.2 140.2 1058.2 138.8 1056.8 140.8 1055.2 137.2 1055.2 140.2 1051.2 141.8 1049.8 140.2 1048.8 129.8 1049.2 141.2 1048.2 142.2 1046.8 140.8 1047.2 138.2 1046.2 135.8 1046.8 133.2 1045.8 130.8Z"/>
<path fill="#5f0000" d="M1113.2 457.8 1109.8 459.2 1107.2 461.8 1107.8 462.8 1104.2 465.2 1103.2 469.8 1082.8 487.8 1084.2 508.2 1103.2 527.8 1103.8 524.2 1102.8 513.8 1104.2 512.2 1132.2 511.2 1133.2 512.2 1134.2 526.8 1152.8 504.8 1151.8 499.2 1151.8 490.8 1131.2 476.8 1130.8 470.8 1129.2 468.8 1129.2 465.2 1127.8 463.8 1128.2 461.2 1127.2 460.2 1125.2 460.2 1121.2 457.8ZM1130.2 471.8 1103.8 471.8 1127.8 470.8ZM1201.2 381.8 1201.8 384.2 1202.2 382.8ZM1474.2 256.2 1469.2 268.2 1461.2 281.2 1445.2 301.8 1436.8 310.8 1435.8 313.2 1434.2 313.2 1432.8 318.8 1431.8 317.2 1432.8 320.8 1432.2 321.2 1431.8 319.8 1431.2 320.8 1433.8 324.2 1432.2 324.2 1432.2 325.2 1433.2 325.2 1432.8 327.2 1432.2 326.2 1431.2 326.8 1430.2 325.8 1430.2 326.8 1431.2 326.8 1431.2 329.2 1444.8 314.2 1459.8 294.8 1463.8 288.2 1470.8 272.2ZM1177.8 230.2 1193.8 230.8 1200.8 229.2ZM1093.8 133.8 1093.2 136.2 1094.2 138.2 1094.8 135.8ZM1098.8 133.2 1098.2 138.2 1099.2 139.8 1099.8 134.8ZM1096.2 133.2 1095.8 136.8 1096.8 138.8 1097.2 134.8ZM899.2 206.8 899.8 216.8 903.8 237.2 912.2 253.2 912.2 254.8 921.8 269.8 938.8 291.8 966.2 321.8 997.8 353.2 1006.8 360.2 1010.8 356.8 1012.8 357.8 1014.8 355.8 1013.8 353.2 1020.8 347.2 1023.2 347.8 1022.8 346.8 1020.8 346.2 1020.8 343.8 1019.8 342.8 1020.2 341.8 1023.2 341.2 1019.8 338.8 1022.8 336.8 1023.2 334.8 1025.8 331.8 1034.2 330.2 1038.2 330.8 1032.2 323.2 1030.2 322.2 1029.8 320.8 991.8 282.2 991.2 280.8 976.2 264.8 962.8 247.8 947.8 223.8 943.2 213.8 939.2 200.8 938.2 188.8 939.2 176.8 941.2 168.8 944.8 160.2 950.2 150.8 958.2 140.8 972.2 128.8 974.2 127.8 975.8 128.2 975.8 126.8 977.8 126.2 978.8 124.8 980.2 125.8 987.8 145.8 986.2 146.8 984.8 144.8 985.8 147.2 981.2 149.8 971.8 160.8 963.2 175.2 960.2 183.8 958.2 194.2 958.2 209.2 959.2 214.2 960.8 216.8 961.2 207.2 964.8 194.8 970.8 183.2 977.8 173.8 983.2 168.2 994.2 161.2 1006.2 155.2 1022.8 149.2 1041.2 144.8 1058.8 142.2 1077.8 142.2 1091.2 143.8 1104.8 146.8 1105.8 145.2 1106.8 147.8 1119.8 152.2 1134.8 160.2 1146.2 172.2 1155.8 188.8 1159.8 202.2 1159.8 216.8 1176.2 230.2 1176.8 214.2 1177.8 213.2 1200.2 212.2 1202.2 213.8 1202.2 229.2 1216.8 214.8 1221.2 204.8 1229.2 195.2 1251.8 181.2 1266.2 175.8 1267.8 173.8 1268.2 175.2 1272.2 173.2 1275.8 172.8 1276.8 158.8 1277.8 155.8 1278.8 156.2 1277.8 164.8 1277.8 171.2 1278.8 171.8 1279.2 156.8 1280.2 155.2 1280.8 155.8 1281.2 162.8 1281.2 155.8 1282.8 153.8 1290.2 152.2 1291.8 153.2 1293.2 152.2 1294.2 153.8 1295.2 151.8 1299.8 150.8 1306.8 150.8 1307.8 151.8 1312.2 151.2 1313.2 152.2 1315.2 151.8 1316.2 152.8 1315.8 154.8 1317.2 151.8 1318.8 153.8 1320.2 152.2 1321.8 153.2 1323.2 152.8 1324.2 153.8 1324.2 156.8 1325.8 153.2 1326.8 153.8 1327.2 155.8 1329.2 153.8 1330.2 155.2 1328.8 169.8 1327.8 170.8 1326.2 169.2 1326.2 167.2 1324.8 169.8 1321.8 169.8 1320.8 168.8 1320.8 166.2 1319.8 168.8 1313.2 168.8 1309.2 167.2 1308.2 168.2 1306.2 167.2 1296.8 167.8 1295.8 166.8 1294.2 168.2 1293.2 165.8 1292.8 167.8 1291.8 168.2 1290.8 164.2 1290.2 168.2 1289.2 169.2 1288.2 168.2 1288.2 163.8 1288.2 168.8 1287.2 169.8 1285.8 168.8 1285.8 163.8 1285.8 169.2 1284.2 170.2 1283.2 169.2 1283.2 163.8 1283.2 169.8 1281.8 170.2 1280.8 163.8 1280.2 171.8 1294.8 169.2 1310.2 169.2 1330.2 171.8 1353.8 177.8 1364.2 181.8 1383.2 191.8 1393.2 201.2 1405.2 216.8 1412.8 233.2 1414.8 241.8 1413.8 246.8 1409.2 253.8 1409.2 255.2 1407.8 256.2 1403.2 263.8 1401.8 264.2 1401.8 265.8 1398.2 268.8 1398.2 269.8 1396.2 270.8 1396.2 271.8 1394.2 272.8 1394.2 273.8 1392.2 274.8 1392.2 275.8 1390.2 276.8 1387.8 280.2 1383.8 282.8 1383.2 284.2 1375.8 290.2 1373.8 290.8 1373.2 292.2 1371.2 292.8 1368.2 295.8 1360.8 300.2 1359.8 301.8 1321.8 323.8 1203.2 380.8 1204.2 383.8 1205.2 380.8 1206.2 382.8 1207.2 382.8 1207.8 380.2 1209.2 381.8 1210.2 380.2 1212.2 381.2 1212.8 379.2 1214.2 379.8 1215.2 378.8 1218.2 378.8 1223.2 382.2 1221.8 383.8 1221.2 386.2 1224.8 388.2 1221.8 389.8 1225.2 393.2 1233.2 393.8 1241.8 389.2 1243.8 389.2 1248.2 386.2 1250.2 386.2 1252.2 384.2 1257.8 382.8 1259.2 381.2 1273.8 374.2 1278.8 372.8 1287.8 367.8 1289.8 367.8 1291.8 365.8 1293.8 365.8 1295.2 364.2 1301.2 362.2 1306.8 358.8 1319.2 353.8 1324.8 350.2 1329.8 348.8 1331.8 346.8 1333.8 346.8 1335.2 345.2 1340.8 343.2 1342.8 341.2 1347.8 339.8 1349.8 337.8 1351.8 337.8 1353.2 335.8 1355.2 335.8 1370.2 326.8 1371.8 326.8 1373.8 324.8 1375.2 324.8 1376.2 323.2 1378.2 323.2 1382.8 319.2 1387.8 317.2 1388.8 315.8 1390.8 315.2 1402.8 307.2 1404.2 305.2 1407.8 303.8 1431.8 282.2 1446.2 264.8 1453.2 253.8 1458.2 242.2 1460.8 233.8 1461.8 225.2 1461.2 210.8 1456.8 194.8 1447.8 177.8 1435.8 161.8 1426.2 152.8 1412.8 142.2 1393.8 132.2 1378.2 125.8 1357.2 119.2 1331.8 113.8 1315.2 112.2 1294.8 112.2 1290.8 113.2 1283.8 113.2 1261.2 117.8 1235.2 126.8 1213.2 136.2 1200.2 143.8 1198.8 143.2 1194.2 149.2 1188.8 139.2 1179.8 127.2 1167.8 115.8 1154.2 106.2 1131.2 96.8 1110.8 90.8 1096.8 87.8 1078.2 85.8 1054.8 85.8 1040.2 87.2 1025.8 89.8 1008.8 94.2 978.2 105.8 946.8 123.8 936.2 131.8 927.2 140.2 914.8 157.8 903.2 184.2 900.2 195.8ZM1274.8 169.2 1274.8 172.8 1273.8 171.8ZM1270.2 168.2 1270.8 170.8 1269.8 172.2 1269.2 169.8ZM1272.8 163.8 1273.2 167.8 1272.2 169.2 1271.8 165.2ZM1275.2 160.8 1275.8 166.2 1274.8 167.2 1274.2 162.2ZM1270.8 159.2 1271.2 161.8 1270.2 163.2 1269.8 160.8ZM1348.2 158.8 1348.8 163.8 1346.8 174.8 1346.2 169.2 1347.2 167.2 1347.2 160.2ZM1345.8 157.8 1346.2 163.8 1345.2 166.2 1345.2 172.8 1343.8 174.2 1343.2 170.2 1344.8 163.2 1344.2 160.8ZM1342.8 157.2 1343.8 161.2 1342.2 167.8 1342.8 170.8 1341.2 173.2 1340.2 171.2 1341.8 164.2 1341.8 158.2ZM1273.2 157.2 1273.8 159.2 1272.8 160.8 1272.2 157.8ZM1340.2 156.2 1341.2 157.8 1339.8 164.8 1340.2 167.8 1339.8 171.2 1338.2 172.8 1337.8 167.8 1338.8 158.2ZM1275.8 156.2 1276.2 157.8 1275.2 158.8 1274.8 156.8ZM1337.2 155.8 1338.2 159.2 1337.2 169.2 1335.8 171.8 1334.8 170.8 1335.8 159.2ZM1334.8 154.8 1335.2 160.8 1334.2 170.2 1332.8 171.8 1331.8 170.2 1333.2 156.2ZM1331.8 154.8 1332.8 155.8 1331.8 168.2 1329.8 170.8 1329.2 165.2 1330.2 155.2ZM1009.8 148.8 1010.8 150.2 1009.8 152.2 1008.8 150.8ZM1009.2 144.8 1010.2 146.2 1009.2 148.2 1008.2 146.8ZM1006.2 142.8 1007.2 144.2 1006.2 145.8ZM1008.8 140.8 1009.8 142.2 1008.8 144.2 1007.8 142.8ZM1005.8 138.8 1006.8 140.2 1005.8 141.8ZM1008.2 136.8 1009.2 138.2 1008.2 140.2 1007.2 138.8ZM1010.8 134.8 1011.8 135.8 1013.2 147.8 1012.8 151.8 1011.2 149.2 1009.8 137.2ZM1102.8 134.2 1103.8 135.2 1102.8 143.2 1101.8 141.8ZM1012.8 134.2 1014.2 135.2 1014.8 143.2 1016.2 149.8 1015.2 150.8 1013.8 147.2 1012.2 135.8ZM1015.2 133.2 1017.2 134.8 1018.8 147.2 1017.8 150.2 1016.8 148.8ZM1018.8 132.2 1020.2 135.2 1021.2 143.8 1020.8 149.2 1019.2 147.8 1017.8 135.8ZM1021.2 131.2 1022.8 132.8 1024.2 145.8 1023.2 148.2 1021.8 145.8 1020.2 133.2ZM1001.8 131.2 1002.8 132.2 1002.2 134.2 1001.2 132.8ZM1104.8 130.8 1104.8 135.8 1103.8 134.8ZM1024.2 130.8 1025.8 133.2 1027.2 146.2 1026.2 147.8 1024.8 146.8 1023.2 131.8ZM1102.2 129.8 1102.2 134.8 1101.2 133.2ZM1026.8 129.8 1028.2 130.8 1029.8 145.8 1028.8 146.8 1027.2 145.2 1025.8 131.8ZM998.2 129.8 1001.8 137.8 1001.2 138.8 998.2 132.8ZM1000.2 127.2 1001.2 128.2 1000.8 129.8 999.8 128.8ZM980.8 123.8 982.8 124.8 989.8 143.2 989.2 145.2 987.2 143.8 980.2 125.2ZM1028.8 129.8 1029.8 128.8 1031.2 129.8 1032.8 128.2 1034.2 130.8 1034.2 128.8 1037.2 126.8 1039.8 127.2 1041.8 126.2 1042.8 127.8 1043.2 125.8 1048.2 125.8 1050.2 124.2 1057.8 123.2 1068.2 123.2 1069.2 124.2 1073.8 123.8 1077.8 125.2 1081.8 124.8 1082.8 126.8 1084.2 125.2 1088.2 126.8 1089.8 126.2 1090.8 127.2 1091.2 131.2 1091.8 127.2 1092.8 127.8 1093.8 130.8 1094.8 127.8 1096.2 131.2 1097.2 128.2 1098.8 131.8 1099.8 129.2 1101.2 133.8 1100.8 139.8 1101.8 142.8 1100.8 145.8 1099.2 141.2 1098.2 144.8 1096.8 141.2 1095.8 143.8 1094.2 141.2 1093.2 143.2 1091.8 141.8 1090.8 143.2 1086.8 141.8 1085.2 142.2 1084.2 139.8 1083.2 141.8 1073.8 140.2 1061.2 139.8 1059.8 140.8 1057.8 140.2 1051.8 141.8 1049.8 141.2 1048.8 142.2 1046.8 141.8 1045.8 142.8 1043.8 141.2 1042.8 143.2 1041.2 142.8 1039.8 143.8 1038.2 142.8 1037.2 144.8 1035.8 143.8 1035.2 141.2 1035.2 144.2 1034.2 145.2 1032.8 143.8 1031.8 135.2 1032.8 144.8 1031.2 146.2 1029.8 142.8ZM983.2 122.2 984.8 123.2 992.2 142.8 991.8 143.8 990.8 143.8 989.2 141.2 982.8 123.8ZM985.8 121.2 987.2 122.2 994.8 141.8 994.2 142.8 991.8 139.8 985.2 122.2ZM988.2 119.8 990.2 122.2 996.8 139.8 996.2 141.2 994.2 138.2 987.8 121.2ZM991.2 119.2 998.8 137.2 998.8 139.8 997.8 139.2 991.2 122.2ZM993.2 117.8 995.2 120.2 998.2 128.2 997.8 130.2 992.8 118.2ZM996.2 116.8 997.2 117.8 996.8 119.8 995.8 118.2Z"/>
<path fill="#690000" d="M1113.8 457.8 1109.2 459.8 1107.2 461.8 1107.8 462.2 1122.2 462.2 1124.8 463.8 1106.8 464.2 1104.2 465.2 1104.8 467.2 1103.2 470.2 1083.2 487.2 1082.8 493.2 1084.2 508.2 1103.2 527.8 1102.2 514.2 1103.8 512.2 1132.8 511.2 1134.2 526.8 1152.8 504.8 1151.8 499.8 1151.8 491.2 1151.2 490.2 1149.8 490.8 1133.8 508.8 1124.2 485.2 1125.2 482.2 1130.8 476.2 1130.8 470.8 1128.8 467.8 1129.2 465.2 1127.8 463.8 1128.2 461.8 1127.8 460.8 1121.2 457.8ZM1103.8 471.8 1104.8 470.8 1130.2 471.2 1129.2 472.8ZM1003.8 331.8 1002.2 332.2 1001.2 334.2 1002.2 334.2ZM1473.8 258.2 1469.2 268.8 1461.2 281.8 1444.2 302.8 1443.8 304.8 1441.8 306.2 1441.8 307.8 1439.8 308.8 1441.2 309.8 1438.8 311.2 1440.8 311.8 1441.2 312.8 1440.2 313.8 1437.8 313.8 1440.8 315.2 1439.8 316.2 1437.2 316.2 1439.2 317.8 1438.8 318.8 1436.8 318.8 1439.2 320.2 1440.8 319.2 1459.8 294.8 1463.8 288.2 1469.2 276.8ZM1200.8 229.8 1186.2 229.8 1178.2 230.8 1193.8 230.8ZM1271.2 170.2 1269.8 174.2 1268.8 171.8 1268.8 174.8 1271.8 173.2ZM1273.8 167.2 1272.8 169.2 1273.2 173.2 1274.2 173.2 1273.2 172.2 1274.2 169.2ZM1269.2 162.8 1269.2 165.2 1268.2 166.8 1268.8 170.2 1269.8 168.2ZM1271.8 161.2 1270.8 163.2 1271.2 165.8 1272.2 163.8ZM1274.2 158.8 1273.2 160.8 1273.8 162.8 1274.8 160.8ZM1101.8 143.2 1101.8 146.2 1104.8 146.8 1104.8 144.2 1104.2 145.8 1102.8 146.2ZM899.8 199.8 899.8 216.8 903.2 234.2 907.8 244.8 917.2 262.2 928.8 278.8 945.8 299.2 978.8 333.8 987.8 341.8 988.8 341.8 995.8 334.8 998.2 334.2 1000.2 332.2 1000.8 330.2 1003.2 327.2 1001.8 323.8 1005.2 322.2 1003.8 320.8 1005.2 319.8 1004.2 318.8 1011.2 316.2 1014.2 314.2 1017.8 313.2 1019.2 313.8 1019.8 312.2 982.8 272.8 959.2 243.2 950.2 228.8 944.2 216.8 939.8 203.8 938.2 193.8 938.2 183.8 940.8 169.8 944.2 160.8 949.8 151.2 955.8 143.2 965.8 133.2 972.8 128.2 983.8 121.8 984.8 122.2 985.8 120.8 987.2 121.2 988.8 125.2 987.2 120.8 988.2 119.2 990.2 121.2 997.2 141.2 995.8 144.8 994.8 143.2 993.2 143.2 993.2 145.2 990.2 144.2 985.8 148.8 984.2 148.8 979.2 152.2 971.8 161.2 964.2 173.8 959.2 189.2 958.2 198.2 958.8 209.8 960.2 215.8 961.8 204.8 964.8 194.8 969.8 184.8 977.8 173.8 983.2 168.2 996.8 160.2 997.2 156.8 998.2 157.2 998.8 159.2 1007.2 155.2 1004.8 141.2 1005.2 137.8 1006.8 139.2 1008.2 154.8 1031.2 146.8 1053.2 142.8 1077.8 142.2 1097.8 145.2 1097.2 142.8 1095.8 144.2 1094.8 142.8 1093.2 143.8 1092.2 142.8 1089.8 143.2 1081.2 141.2 1060.8 140.2 1046.2 142.8 1044.2 142.2 1040.8 143.8 1038.2 143.2 1037.2 144.8 1035.8 144.2 1035.2 142.2 1034.8 145.2 1032.8 144.8 1030.8 146.2 1029.8 143.8 1029.2 146.8 1027.2 146.2 1025.2 147.8 1023.2 135.8 1023.8 130.2 1025.8 132.2 1026.8 140.2 1025.8 132.8 1026.2 129.2 1028.2 129.8 1028.8 132.8 1028.8 129.2 1031.2 128.8 1031.8 127.8 1032.8 127.8 1034.2 129.8 1034.2 127.8 1036.8 126.2 1039.8 126.8 1042.8 125.2 1054.2 123.2 1056.8 123.8 1058.8 122.8 1065.8 122.8 1077.2 124.8 1079.2 124.2 1089.8 126.2 1091.2 127.2 1092.2 126.8 1093.2 129.2 1094.8 127.2 1095.8 129.8 1096.8 128.2 1098.2 130.2 1099.8 128.8 1101.2 132.2 1101.2 130.2 1102.8 129.8 1103.2 133.8 1104.8 130.2 1105.8 131.2 1106.8 147.8 1109.8 148.8 1108.8 133.2 1109.2 132.8 1110.8 135.2 1111.2 149.2 1112.2 143.8 1111.2 142.2 1111.8 132.8 1112.8 134.2 1112.2 138.2 1113.2 139.8 1113.2 149.2 1114.8 150.8 1120.2 152.8 1121.2 151.8 1122.2 153.8 1134.8 160.2 1146.2 172.2 1151.8 180.8 1157.2 192.8 1159.8 202.2 1159.8 216.8 1176.2 230.2 1177.2 213.2 1201.8 212.2 1202.8 228.8 1216.8 214.8 1221.2 204.8 1229.2 195.2 1247.8 183.2 1259.2 178.2 1257.8 176.2 1257.8 174.2 1258.8 173.2 1259.8 177.2 1260.8 174.8 1261.8 177.2 1266.2 175.8 1267.2 173.2 1267.2 159.2 1268.2 158.8 1269.2 161.2 1270.2 158.2 1271.8 158.2 1272.2 156.8 1274.2 157.8 1275.8 155.8 1276.8 156.8 1276.2 159.2 1277.8 155.2 1279.2 155.8 1282.2 153.8 1292.2 151.8 1294.2 152.2 1298.8 150.8 1307.2 150.8 1317.8 151.8 1318.8 152.8 1323.8 152.8 1324.8 153.8 1324.2 155.2 1325.2 153.2 1327.2 154.2 1331.8 154.2 1332.8 155.2 1331.8 169.8 1330.8 171.2 1327.2 170.8 1326.2 168.8 1324.2 170.2 1320.2 168.8 1312.8 168.8 1309.2 167.8 1295.8 167.8 1294.8 168.8 1292.8 168.2 1282.8 170.8 1280.8 170.2 1280.8 171.2 1294.8 169.2 1316.2 169.8 1340.2 173.8 1353.8 177.8 1355.8 162.2 1356.8 161.8 1357.2 165.8 1355.2 178.2 1356.8 179.2 1358.2 163.2 1359.2 162.2 1360.2 163.8 1357.8 179.2 1359.2 179.8 1360.8 165.8 1361.8 163.8 1362.8 165.8 1361.2 178.8 1360.2 180.2 1371.8 185.2 1383.2 191.8 1398.2 206.8 1405.2 216.8 1410.2 228.2 1411.2 228.8 1414.8 241.8 1413.8 246.8 1409.2 253.8 1409.2 255.2 1407.8 256.2 1403.2 263.8 1401.8 264.2 1401.8 265.8 1398.2 268.8 1398.2 269.8 1396.2 270.8 1396.2 271.8 1394.2 272.8 1394.2 273.8 1392.2 274.8 1392.2 275.8 1390.2 276.8 1387.8 280.2 1383.8 282.8 1383.2 284.2 1375.8 290.2 1373.8 290.8 1373.2 292.2 1371.2 292.8 1368.2 295.8 1360.8 300.2 1359.8 301.8 1321.8 323.8 1286.8 341.2 1230.8 367.2 1231.2 369.2 1232.2 367.8 1233.8 368.8 1234.8 366.8 1236.2 368.2 1237.2 366.2 1238.8 367.8 1239.8 365.8 1241.2 366.8 1242.2 365.2 1243.8 365.8 1245.2 364.8 1246.2 368.2 1245.8 369.2 1248.2 370.2 1247.8 371.8 1245.2 372.2 1251.2 372.8 1252.2 373.8 1252.2 375.2 1254.2 377.2 1254.2 379.2 1252.8 380.8 1257.8 380.8 1263.8 378.8 1266.8 376.8 1286.2 368.8 1287.8 367.2 1289.8 367.2 1291.2 365.8 1300.2 362.2 1310.2 356.8 1315.2 355.2 1317.8 353.2 1322.8 351.8 1324.8 349.8 1330.2 348.2 1332.2 346.2 1333.8 346.2 1346.2 339.2 1348.2 339.2 1349.2 337.8 1351.8 337.2 1369.8 326.8 1372.2 326.2 1373.2 324.8 1378.2 322.8 1383.2 318.8 1384.8 318.8 1407.8 303.2 1429.8 284.2 1445.8 265.2 1452.8 254.2 1458.8 240.2 1461.8 222.2 1460.8 209.2 1456.8 195.2 1447.2 177.2 1439.2 166.2 1429.8 156.2 1410.2 140.8 1393.8 132.2 1378.2 125.8 1357.2 119.2 1331.8 113.8 1315.2 112.2 1294.8 112.2 1290.8 113.2 1283.8 113.2 1261.2 117.8 1235.2 126.8 1213.2 136.2 1200.2 143.8 1199.2 143.2 1194.2 150.2 1187.8 138.2 1179.8 127.8 1167.2 115.8 1152.8 105.8 1131.2 96.8 1110.8 90.8 1096.8 87.8 1078.2 85.8 1048.8 86.2 1028.2 89.2 1017.8 91.8 983.8 103.2 970.2 109.8 951.2 120.8 930.8 136.8 918.8 151.2 912.8 161.8 903.8 182.8ZM1368.2 181.2 1368.8 182.8 1367.8 183.8 1367.2 181.8ZM1365.8 178.2 1366.2 181.2 1365.2 181.8 1364.8 179.2ZM1367.8 177.8 1368.8 177.2 1369.2 178.8 1368.2 179.2ZM1366.2 174.2 1366.8 177.2 1365.8 178.2 1365.2 175.2ZM1368.2 173.8 1369.2 173.2 1369.8 174.8 1368.8 175.2ZM1256.8 171.8 1257.8 173.8 1257.8 175.8 1256.8 176.8 1255.8 174.8 1255.8 172.8ZM1253.2 171.8 1253.8 173.2 1252.8 174.2 1251.8 172.8ZM1254.8 171.2 1255.8 172.2 1255.8 174.2 1254.8 175.2 1253.8 173.8ZM1366.8 170.2 1367.2 173.2 1366.2 174.2 1365.8 171.2ZM1265.2 170.2 1266.2 174.2 1265.8 175.8 1264.2 174.8 1264.2 171.2ZM1368.8 169.8 1369.8 169.2 1370.2 170.8 1369.2 171.2ZM1263.2 167.2 1264.2 170.8 1264.2 174.8 1263.2 175.8 1262.2 171.8 1262.2 168.2ZM1367.2 166.8 1367.8 169.2 1366.8 170.2 1366.2 167.2ZM1364.2 164.8 1365.2 167.2 1363.8 179.8 1362.8 181.2 1362.2 177.2ZM1261.2 164.8 1262.2 167.2 1262.2 170.8 1261.2 171.8 1260.2 168.8 1260.2 165.8ZM1258.8 162.2 1259.8 162.8 1260.2 167.8 1259.2 168.8 1258.2 165.2ZM1257.2 162.2 1258.2 163.2 1257.2 165.8 1256.2 163.2ZM1216.2 162.2 1217.8 163.8 1217.8 165.8 1216.8 166.2 1218.2 166.2 1218.8 167.2 1219.8 166.8 1220.8 167.8 1220.8 169.2 1219.8 169.8 1223.2 174.2 1223.8 173.8 1225.2 174.8 1225.2 176.8 1224.2 177.2 1225.8 178.2 1226.2 180.2 1220.2 188.2 1216.8 196.8 1203.2 210.2 1201.8 208.2 1195.2 189.2 1200.2 184.2 1204.2 175.2 1210.8 166.2 1214.8 162.2ZM1354.2 160.8 1354.8 163.8 1353.2 176.2 1351.8 177.2 1351.2 174.2 1352.8 161.2ZM1263.2 160.2 1264.8 161.2 1264.8 164.8 1263.8 165.8ZM1351.2 159.2 1352.2 160.8 1350.8 174.2 1349.2 176.2 1348.8 171.2 1349.8 162.2ZM1266.8 159.2 1266.8 169.8 1265.8 170.8 1264.8 161.2ZM1348.2 158.2 1349.2 159.2 1347.8 174.8 1346.2 175.2 1345.8 172.8 1347.2 159.2ZM1346.2 157.8 1346.8 160.2 1345.2 173.8 1343.8 174.8 1342.8 173.8 1344.8 158.2ZM994.2 158.2 995.2 157.8 995.8 159.2 994.8 159.8ZM1343.2 156.8 1343.8 162.2 1342.2 173.2 1340.8 173.8 1340.2 169.8 1341.8 157.8ZM1340.8 156.2 1341.2 159.2 1339.8 172.2 1338.2 173.2 1337.2 171.2 1338.8 157.2ZM1337.2 155.2 1338.2 156.2 1337.2 170.8 1335.8 172.2 1334.8 171.2 1335.8 157.8ZM1334.8 154.8 1335.8 155.8 1334.2 171.2 1332.8 171.8 1331.8 170.8 1333.2 155.2ZM994.2 153.8 995.2 154.2 994.8 156.2 993.8 155.8ZM996.8 153.2 997.8 153.8 997.2 155.8 996.2 155.2ZM990.8 151.2 991.8 150.8 992.2 152.2 991.2 152.8ZM993.2 150.8 994.2 150.2 994.8 151.8 993.8 152.2ZM992.8 147.2 993.8 146.8 994.2 148.2 993.2 148.8ZM995.8 145.8 996.8 146.2 996.8 152.2 995.8 151.8ZM1117.2 145.2 1117.8 146.2 1116.8 147.8 1116.2 146.2ZM997.8 140.8 999.2 144.2 1000.8 156.2 1000.2 158.2 999.2 157.2 997.8 148.2ZM1113.8 134.8 1115.2 136.8 1115.2 148.8 1113.8 145.8ZM1018.8 131.8 1019.8 132.2 1021.8 146.8 1021.2 149.2 1019.2 148.2 1017.8 132.8ZM1106.8 131.2 1108.2 132.2 1108.8 146.2 1107.8 147.2 1106.8 145.2ZM1019.8 130.2 1022.8 131.2 1024.2 147.8 1023.2 148.8 1021.8 146.8 1020.8 134.8 1019.2 131.2ZM1012.2 118.8 1013.8 121.2 1013.2 123.2 1011.8 120.2ZM993.2 117.2 995.8 120.2 1001.8 137.2 1003.8 139.2 1005.8 152.8 1005.2 155.8 1003.8 153.8 1002.2 139.8 1001.2 139.8 1003.2 154.2 1002.8 156.8 1001.2 154.8 999.8 140.8 998.2 140.8 990.2 120.8 990.8 118.2 992.2 119.2 999.2 138.2 1000.2 138.8 992.8 119.2ZM995.8 115.8 997.8 118.2 1004.8 136.8 1003.8 137.8 1002.8 137.2 995.8 119.2ZM998.8 114.8 1006.8 135.2 1009.2 137.2 1010.8 149.2 1010.2 153.8 1008.8 151.8 1007.2 136.8 1006.2 136.8 1004.8 134.8 997.8 116.2ZM1003.8 112.8 1006.8 118.2 1011.2 131.8 1014.2 134.2 1016.2 148.8 1016.2 150.8 1014.8 151.2 1012.8 136.8 1011.8 135.8 1013.8 150.8 1013.2 152.2 1012.2 152.2 1011.2 150.2 1009.8 135.8 1007.2 133.2 1000.8 115.8 1001.2 113.8 1002.2 114.8 1008.8 132.8 1010.2 134.8 1010.8 133.2 1003.2 114.2ZM1006.8 112.2 1014.8 132.2 1017.2 133.8 1018.8 146.2 1018.2 150.2 1016.8 149.8 1015.2 134.8 1013.2 132.8 1006.2 113.8Z"/>
<path fill="#730000" d="M1106.8 464.2 1104.2 465.8 1104.8 467.8 1103.2 470.2 1082.8 488.2 1084.2 508.2 1102.8 527.2 1103.2 524.2 1102.2 513.8 1103.2 512.2 1132.2 510.8 1133.8 512.8 1134.2 526.8 1152.2 505.8 1151.8 491.8 1150.2 490.8 1133.8 509.8 1132.2 507.8 1123.8 485.2 1124.8 482.2 1130.8 475.8 1130.2 472.2 1104.2 472.8 1103.2 471.8 1104.2 470.8 1128.2 470.8 1129.2 469.8 1129.2 465.2 1127.8 464.2ZM1127.8 462.8 1127.8 460.8 1124.8 460.2 1120.8 457.8 1113.2 458.2 1107.8 461.2 1108.8 462.2ZM986.8 309.8 985.2 309.8 983.8 312.2 985.2 312.2ZM1473.2 260.2 1465.8 275.8 1445.2 303.2 1445.8 304.2 1443.8 306.2 1444.2 307.8 1443.2 308.8 1443.2 312.8 1441.8 314.2 1441.8 317.2 1453.8 302.8 1463.8 288.2 1469.2 276.8ZM1178.2 230.8 1197.2 230.2 1186.8 229.8 1184.8 230.8ZM1344.2 174.8 1351.2 177.2 1350.8 175.2 1349.2 176.8 1348.2 175.8 1348.2 172.8 1348.2 174.2 1346.8 175.8 1345.2 174.2ZM1281.2 171.2 1294.8 169.2 1310.2 169.2 1330.2 171.8 1342.8 174.8 1342.8 172.2 1341.2 174.2 1339.8 172.8 1337.8 173.2 1336.8 171.8 1332.8 172.2 1331.8 171.2 1329.8 171.8 1328.8 170.8 1327.2 171.2 1326.2 170.2 1321.8 170.2 1317.8 168.8 1306.2 167.8 1290.8 168.8ZM994.2 143.8 993.8 146.2 995.8 159.8 994.2 159.8 992.8 145.8 991.2 144.8 990.8 146.2 988.8 146.2 988.8 149.8 986.8 147.8 986.2 149.2 984.8 149.2 979.2 152.8 971.8 161.8 964.2 174.8 959.8 188.8 958.8 198.2 959.2 209.8 960.8 215.2 961.2 207.2 963.2 198.8 969.8 184.8 977.8 173.8 983.2 168.2 990.2 163.8 990.2 161.2 992.2 162.8 991.2 153.2 990.2 151.8 990.2 146.8 990.8 146.2 991.8 147.2 993.2 161.2 993.8 161.8 996.8 160.2 995.2 145.8ZM989.8 157.8 990.8 158.8 990.2 160.2 989.2 159.2ZM989.2 153.8 990.2 154.8 989.8 156.8 988.8 155.8ZM988.8 150.2 989.8 151.2 989.2 153.2 988.2 152.2ZM996.8 142.2 996.2 144.8 998.8 159.2 999.8 158.8ZM1115.8 141.8 1115.2 144.2 1116.2 144.8ZM999.2 140.8 998.8 142.2 1000.8 158.2 1002.2 157.2 1001.2 155.8ZM1097.2 144.2 1092.2 143.2 1090.2 143.8 1083.8 141.8 1061.2 140.2 1059.8 141.2 1057.8 140.8 1045.8 143.2 1044.2 142.8 1040.2 144.2 1038.2 143.8 1037.2 145.2 1035.8 144.8 1034.8 145.8 1032.8 145.2 1031.8 146.8 1027.2 146.8 1026.2 148.2 1024.2 147.8 1023.2 149.2 1021.8 148.8 1020.2 149.8 1019.2 148.8 1018.2 150.8 1016.8 150.2 1015.2 151.8 1013.8 150.8 1013.8 148.8 1013.8 152.2 1012.8 152.8 1011.2 150.8 1010.8 152.2 1012.2 153.2 1031.2 146.8 1053.2 142.8 1077.8 142.2 1088.2 143.2 1097.2 145.2ZM1001.8 139.8 1001.8 145.2 1003.8 156.8 1004.8 156.2 1003.2 152.8ZM1004.2 138.2 1004.2 143.8 1006.2 153.2 1005.8 155.8 1007.2 155.2 1005.8 152.2 1006.2 150.2 1005.2 148.2ZM899.8 199.8 899.8 216.8 902.2 230.2 907.2 242.8 914.2 256.8 922.2 269.2 938.8 290.8 966.2 320.2 969.8 321.8 984.2 308.8 981.8 304.8 981.8 302.2 984.2 297.8 985.8 296.8 991.8 296.2 990.8 294.2 991.8 293.2 995.2 292.2 998.2 293.2 1000.2 292.8 967.8 255.2 951.2 230.8 945.2 219.2 939.8 204.2 938.2 195.2 938.2 181.2 941.8 166.2 948.8 152.2 962.8 135.8 976.2 125.8 983.2 121.8 984.8 121.8 985.8 120.2 989.8 119.2 991.2 117.8 992.2 118.2 993.2 116.8 994.8 117.2 996.8 115.8 1004.2 135.2 1006.8 138.8 1006.8 137.2 1004.2 134.8 997.8 117.2 997.8 115.2 998.8 114.2 1001.2 118.2 1007.2 135.2 1006.8 131.8 1000.2 115.8 1001.2 113.2 1002.8 114.8 1009.8 133.8 1009.2 130.2 1002.8 114.2 1003.2 112.8 1005.2 113.8 1012.8 133.2 1012.8 131.2 1005.8 113.8 1006.2 111.8 1007.8 112.8 1013.2 128.2 1015.8 132.2 1008.2 111.8 1008.8 110.8 1010.2 111.2 1017.8 131.8 1018.8 131.2 1011.2 111.2 1011.8 109.8 1013.8 112.2 1020.2 130.2 1021.2 130.2 1021.2 128.8 1014.2 111.2 1014.8 109.2 1016.8 112.2 1022.8 129.2 1025.2 130.8 1016.8 109.8 1017.8 108.2 1026.2 129.2 1027.2 127.8 1024.2 120.8 1024.8 119.2 1028.8 128.2 1030.2 128.2 1030.8 127.2 1034.8 127.2 1036.2 125.8 1037.8 126.2 1048.2 124.8 1053.2 123.2 1068.2 122.8 1073.8 123.2 1074.8 124.2 1081.8 124.2 1082.8 125.2 1084.2 124.8 1088.2 126.2 1089.8 125.8 1095.8 128.2 1097.2 127.8 1098.8 129.2 1102.2 129.2 1109.8 132.2 1110.8 134.8 1110.8 133.2 1112.2 132.8 1112.8 133.8 1114.2 133.8 1115.2 135.8 1116.8 134.8 1117.2 135.8 1119.2 136.2 1119.2 137.8 1117.2 138.2 1117.8 142.2 1118.2 139.8 1119.8 139.8 1120.8 137.2 1123.2 137.8 1123.8 141.2 1121.8 141.8 1121.8 144.2 1120.2 144.2 1119.8 147.2 1117.8 147.8 1117.8 151.8 1118.8 152.2 1118.8 149.2 1120.2 149.2 1120.8 147.8 1122.2 147.8 1123.2 146.2 1124.8 146.8 1125.8 145.8 1126.2 146.8 1128.2 146.8 1128.2 148.8 1126.2 148.8 1126.2 150.2 1124.8 150.2 1123.8 152.2 1122.8 151.8 1122.2 153.8 1130.8 157.8 1136.8 161.8 1146.2 172.2 1151.8 180.8 1157.2 192.8 1159.8 202.2 1159.8 216.8 1176.2 230.2 1176.2 214.2 1177.2 213.2 1201.2 211.8 1202.2 212.8 1202.8 228.8 1216.8 214.8 1221.2 204.8 1229.2 195.2 1247.8 183.2 1258.8 178.8 1257.8 177.2 1256.8 177.8 1255.8 175.8 1254.8 176.2 1251.8 173.8 1250.2 174.8 1249.2 173.8 1251.2 171.8 1254.8 170.2 1255.8 171.2 1256.8 170.8 1257.8 172.8 1258.8 172.2 1259.8 174.2 1261.2 174.2 1261.8 177.2 1264.8 176.2 1262.8 176.2 1262.2 172.2 1260.8 172.2 1260.2 169.2 1259.2 169.8 1258.2 166.2 1256.8 166.2 1255.8 163.2 1256.8 161.8 1259.8 161.8 1260.2 164.2 1261.8 164.2 1262.2 166.8 1263.2 166.2 1264.2 167.2 1264.8 170.2 1264.8 166.2 1263.8 166.8 1262.8 165.8 1262.8 162.2 1261.8 162.8 1261.2 161.2 1263.2 159.8 1265.2 160.2 1267.8 158.2 1269.8 159.8 1270.8 157.2 1272.8 156.2 1273.8 156.8 1275.2 155.2 1279.2 155.2 1282.8 153.2 1292.8 151.2 1294.8 151.8 1299.8 150.2 1312.2 150.8 1313.8 151.8 1317.8 151.2 1318.8 152.2 1320.2 151.8 1321.8 152.8 1326.2 152.8 1327.2 153.8 1328.8 153.2 1332.8 154.8 1334.2 154.2 1336.2 155.8 1337.8 155.2 1338.8 156.8 1340.2 155.8 1341.2 156.8 1343.2 156.8 1344.2 158.8 1345.8 157.2 1347.2 158.8 1348.8 158.2 1349.8 161.2 1349.8 160.2 1351.8 159.2 1351.8 168.8 1352.2 161.8 1354.2 160.2 1355.2 163.8 1353.8 176.2 1352.2 177.8 1353.8 177.8 1355.2 162.2 1356.8 161.2 1357.8 162.2 1356.8 174.8 1355.2 178.8 1356.2 178.8 1357.8 163.2 1359.8 162.2 1360.2 167.8 1358.2 179.8 1359.2 178.2 1360.2 166.2 1361.8 163.2 1363.2 165.2 1360.8 180.8 1361.8 180.8 1363.2 165.2 1364.2 164.2 1365.8 165.8 1364.2 179.8 1363.2 181.8 1366.8 183.2 1367.8 180.2 1367.2 177.8 1368.2 176.2 1367.8 173.8 1368.8 172.2 1368.2 169.8 1369.8 167.2 1370.8 169.8 1369.8 172.2 1370.2 174.8 1369.2 176.2 1369.8 178.8 1368.8 180.2 1368.8 184.2 1369.8 184.8 1369.8 179.8 1370.8 178.2 1370.2 175.8 1371.2 174.2 1370.8 171.8 1371.8 168.8 1372.8 168.2 1373.2 172.2 1372.2 173.8 1372.8 176.2 1371.2 181.2 1371.8 183.8 1370.8 184.8 1371.8 185.2 1372.8 183.8 1372.2 181.2 1373.2 179.8 1373.2 173.2 1374.2 170.2 1375.2 170.2 1375.8 173.2 1374.8 174.8 1375.2 177.2 1374.2 178.8 1374.8 181.2 1373.8 182.8 1373.8 186.2 1376.8 188.2 1377.8 187.2 1379.2 189.8 1380.2 188.8 1381.8 191.2 1383.2 191.8 1393.2 201.2 1402.8 212.8 1410.2 226.8 1410.2 228.2 1411.2 228.8 1414.2 239.2 1414.8 244.2 1412.8 247.2 1412.8 248.8 1411.8 249.2 1411.8 250.8 1409.2 253.8 1409.2 255.2 1407.8 256.2 1403.2 263.8 1401.8 264.2 1401.8 265.8 1400.2 266.2 1398.2 269.8 1396.2 270.8 1396.2 271.8 1394.2 272.8 1394.2 273.8 1392.2 274.8 1392.2 275.8 1390.2 276.8 1387.8 280.2 1383.8 282.8 1383.2 284.2 1375.8 290.2 1373.8 290.8 1373.2 292.2 1371.2 292.8 1364.8 298.2 1351.2 306.2 1347.8 309.2 1328.2 320.2 1286.8 341.2 1261.8 352.8 1261.8 353.8 1263.2 352.8 1266.8 352.8 1267.8 351.8 1270.2 351.8 1271.2 352.8 1273.2 351.8 1276.2 352.8 1277.8 354.8 1280.2 354.8 1282.2 357.8 1280.2 358.8 1280.8 360.8 1287.8 364.8 1293.2 364.8 1304.2 359.8 1305.8 358.2 1322.8 351.2 1325.2 349.2 1330.2 347.8 1332.2 345.8 1340.2 342.8 1349.8 337.2 1351.2 337.2 1353.2 335.2 1361.8 331.8 1367.2 327.8 1371.8 326.2 1380.2 320.2 1390.8 314.8 1391.8 313.2 1393.8 312.8 1410.8 300.8 1431.8 281.8 1448.2 261.2 1456.8 245.2 1460.2 233.8 1461.2 226.8 1461.2 213.2 1457.8 198.2 1448.2 179.2 1440.2 167.8 1425.8 152.8 1410.8 141.2 1393.8 132.2 1378.2 125.8 1357.2 119.2 1331.8 113.8 1315.2 112.2 1294.8 112.2 1290.8 113.2 1283.8 113.2 1257.8 118.8 1229.2 129.2 1213.2 136.2 1200.2 143.8 1199.2 143.2 1194.2 150.8 1187.8 138.8 1177.2 125.2 1165.8 114.8 1150.8 104.8 1131.2 96.8 1110.8 90.8 1096.8 87.8 1078.2 85.8 1048.8 86.2 1028.2 89.2 1017.8 91.8 983.8 103.2 970.2 109.8 951.2 120.8 930.8 136.8 918.8 151.2 912.8 161.8 903.8 182.8ZM1377.2 171.2 1377.8 175.2 1376.2 186.2 1375.2 187.2 1374.8 185.8ZM1367.2 165.8 1368.2 166.8 1366.8 181.2 1365.2 182.2 1364.2 181.2 1365.8 167.2ZM1225.2 155.8 1226.8 159.2 1227.8 157.2 1229.2 160.2 1228.8 161.8 1227.8 161.2 1229.2 166.2 1227.8 166.8 1228.8 170.2 1229.8 168.2 1231.2 171.8 1232.2 169.8 1233.8 173.8 1232.2 173.8 1231.8 175.2 1230.2 173.8 1230.8 176.2 1226.8 179.2 1220.8 188.2 1217.2 196.8 1202.8 210.8 1194.8 189.2 1200.2 183.8 1204.8 173.8 1210.8 165.8 1218.2 158.8 1222.8 155.8 1224.8 157.8ZM1023.2 115.2 1024.8 117.8 1024.2 119.8 1022.8 116.8ZM1021.8 111.2 1023.2 113.8 1022.8 115.8 1021.2 112.8ZM1020.2 107.8 1021.8 109.8 1021.2 111.8 1019.8 108.8ZM1023.2 106.8 1024.2 108.2 1023.8 109.8 1022.8 108.2Z"/>
<path fill="#7c0000" d="M1128.8 464.8 1104.8 465.2 1104.2 466.2 1105.2 467.8 1103.8 469.8 1082.8 488.2 1084.8 509.2 1102.8 527.2 1102.2 513.2 1103.8 511.8 1132.8 510.8 1133.8 511.8 1134.8 526.2 1152.2 505.8 1150.8 490.8 1134.2 509.8 1132.8 509.2 1123.8 485.8 1124.8 481.8 1129.8 476.8 1130.2 472.8 1104.2 472.8 1103.2 471.8 1104.2 470.8 1127.8 470.8 1129.2 469.2 1128.2 467.8 1129.2 466.8ZM1127.8 462.8 1127.2 460.8 1125.8 460.8 1120.8 457.8 1113.8 458.2 1108.2 461.2ZM1290.2 339.2 1287.2 340.8 1290.2 340.8ZM967.2 289.8 966.2 289.8 952.2 303.8 952.8 305.2 967.2 291.2ZM1472.8 263.2 1469.2 271.2 1468.2 278.8ZM1403.2 213.8 1403.8 215.2 1406.8 214.8ZM1402.8 206.2 1404.2 208.2 1407.8 208.2ZM1398.8 206.2 1398.2 207.8 1401.2 209.8 1401.8 208.2 1400.8 206.8ZM1253.2 175.2 1253.2 180.8 1258.8 178.8 1257.8 177.8 1256.2 178.8 1255.2 176.2 1254.8 180.2 1253.8 179.2ZM1283.2 170.8 1294.8 169.2 1310.2 169.2 1321.2 170.2 1337.2 173.2 1336.8 172.2 1335.2 172.8 1334.2 171.8 1332.2 172.2 1331.2 171.2 1329.2 171.8 1325.8 170.2 1324.2 170.8 1309.2 168.2 1296.2 168.2 1294.8 169.2 1293.2 168.8ZM1122.2 153.2 1129.2 156.8 1128.8 149.8 1127.8 155.8 1126.8 149.8 1125.8 154.8 1124.8 151.2 1123.8 153.8 1122.8 152.8ZM987.2 148.8 989.2 164.2 988.2 165.2 986.8 162.2 984.8 149.8 986.8 166.2 986.2 166.8 984.8 164.8 982.8 151.2 982.8 153.2 981.8 154.2 980.8 152.2 976.2 156.8 966.2 171.8 962.2 183.8 964.2 196.8 970.8 183.2 977.8 173.8 983.8 168.2 982.8 165.8 983.8 164.8 985.2 167.2 989.8 164.2ZM983.2 161.2 984.2 162.2 983.2 164.8 982.2 163.8ZM982.8 157.8 983.8 158.8 982.8 161.2 981.8 160.2ZM982.2 154.2 983.2 155.2 982.2 157.8 981.2 156.8ZM1097.2 145.2 1094.2 143.8 1092.8 144.2 1081.8 141.8 1060.8 140.8 1038.2 144.2 1037.8 145.2 1032.8 145.8 1023.8 149.2 1019.2 149.8 1018.8 150.8 1016.8 150.8 1013.2 152.8 1011.2 151.8 1011.2 153.2 1031.2 146.8 1053.2 142.8 1077.8 142.2 1088.2 143.2ZM899.8 199.8 899.2 209.8 900.8 223.2 902.8 228.8 902.2 230.2 904.2 233.2 908.2 244.2 915.8 258.8 926.2 274.2 939.2 290.8 944.2 295.2 947.8 300.2 950.8 301.8 964.2 288.2 964.2 284.2 961.8 282.8 962.8 280.2 981.8 279.8 964.2 279.2 962.2 277.8 963.8 275.8 966.8 275.2 964.2 274.2 965.2 273.2 980.8 272.2 958.8 243.2 949.8 228.8 942.8 213.8 939.2 203.2 937.8 188.8 938.8 176.8 940.8 168.8 944.8 158.8 949.2 151.2 956.8 141.8 965.2 133.2 976.8 125.2 988.2 118.8 994.2 116.8 995.8 115.2 997.2 115.8 998.2 114.2 1000.8 113.2 1002.2 113.8 1003.8 112.2 1005.2 113.2 1006.2 111.2 1008.2 112.8 1009.2 110.2 1010.8 111.2 1018.2 131.2 1010.8 110.2 1013.2 110.2 1020.8 129.8 1013.8 110.8 1014.2 108.8 1015.8 109.2 1023.8 129.8 1016.2 108.8 1017.2 107.8 1018.8 108.8 1026.2 128.8 1026.2 126.2 1019.2 108.8 1019.8 107.2 1021.2 107.8 1028.2 126.8 1029.8 127.8 1022.2 108.2 1023.2 106.2 1024.2 107.2 1030.8 125.8 1032.2 127.2 1032.2 125.2 1025.2 107.8 1025.2 106.2 1026.2 105.8 1033.2 124.2 1035.2 126.8 1034.2 122.2 1027.8 106.2 1028.2 105.2 1029.8 105.8 1036.8 125.2 1038.2 125.8 1033.2 110.8 1030.8 105.2 1031.8 104.8 1039.8 125.2 1041.2 125.2 1041.2 122.2 1042.8 124.8 1058.8 122.2 1073.8 123.2 1077.2 124.2 1079.2 123.8 1092.2 126.2 1093.2 127.2 1097.8 127.8 1098.8 128.8 1099.8 128.2 1103.8 130.2 1104.8 129.8 1110.8 132.8 1111.8 132.2 1114.2 133.2 1115.2 134.8 1116.2 134.2 1118.8 135.2 1119.8 138.8 1120.2 136.8 1125.2 138.8 1126.2 145.2 1127.2 140.8 1128.2 145.8 1128.8 142.8 1129.8 142.8 1130.2 147.8 1130.8 143.8 1131.8 143.8 1131.8 148.8 1130.2 150.2 1130.2 157.8 1131.2 157.8 1131.2 151.8 1132.2 151.8 1132.2 158.8 1136.8 161.8 1146.2 172.2 1155.8 188.8 1159.8 202.2 1159.8 216.8 1175.8 229.8 1176.8 213.2 1201.8 211.8 1202.8 212.8 1202.8 228.8 1216.8 214.8 1219.8 207.2 1224.8 199.8 1229.2 195.2 1236.2 190.8 1237.8 188.2 1238.2 189.2 1246.2 184.2 1245.8 180.2 1244.2 179.2 1244.2 170.8 1244.8 170.2 1245.8 171.2 1245.8 178.8 1247.2 179.8 1247.8 183.2 1247.8 177.2 1246.2 176.2 1246.2 168.2 1244.8 166.2 1237.8 146.8 1238.2 145.8 1239.8 146.8 1245.8 165.2 1247.8 167.8 1247.8 175.2 1249.2 176.2 1249.2 182.2 1249.8 175.2 1248.2 174.2 1248.2 167.2 1246.2 163.2 1246.8 161.8 1249.8 166.8 1250.2 172.2 1250.2 166.2 1248.8 163.8 1249.2 162.2 1251.8 165.8 1251.8 170.8 1252.2 165.2 1250.8 161.8 1251.2 161.2 1253.8 164.8 1254.2 170.2 1254.2 162.2 1259.2 160.8 1260.8 163.8 1260.8 160.8 1262.8 159.2 1265.2 159.8 1267.8 157.8 1269.2 159.2 1270.2 156.8 1279.2 154.8 1283.8 152.8 1299.2 150.2 1317.8 151.2 1319.2 152.2 1323.8 152.2 1327.8 153.8 1332.2 153.8 1333.2 154.8 1334.8 154.2 1335.8 155.2 1337.8 154.8 1338.8 156.2 1343.2 156.2 1344.2 157.8 1346.2 157.2 1349.8 159.2 1351.2 158.8 1355.2 161.2 1356.8 160.8 1357.8 162.2 1364.8 164.2 1365.8 165.8 1367.2 165.2 1368.8 167.8 1369.2 166.8 1370.2 166.8 1371.2 168.8 1372.8 167.8 1373.8 170.2 1375.2 169.2 1376.2 171.2 1377.2 170.2 1378.8 172.8 1380.2 172.2 1381.2 174.2 1383.2 174.2 1381.2 190.8 1387.2 195.2 1397.2 206.2 1398.2 204.2 1400.8 204.8 1402.8 202.8 1402.2 201.2 1400.8 202.8 1398.2 199.2 1399.2 197.2 1400.2 198.2 1401.8 198.2 1402.2 197.2 1401.8 196.2 1398.8 196.2 1399.8 193.2 1401.8 193.8 1405.8 198.8 1406.2 200.2 1403.8 199.8 1403.8 200.8 1407.2 202.2 1408.8 203.8 1408.2 205.2 1410.2 206.2 1414.8 217.2 1414.8 219.8 1416.8 225.2 1417.2 231.8 1415.8 238.2 1414.2 240.8 1414.8 244.2 1412.8 247.2 1412.8 248.8 1411.8 249.2 1411.8 250.8 1409.2 253.8 1409.2 255.2 1407.8 256.2 1403.2 263.8 1401.8 264.2 1401.8 265.8 1400.2 266.2 1398.2 269.8 1396.2 270.8 1396.2 271.8 1394.2 272.8 1394.2 273.8 1392.2 274.8 1392.2 275.8 1390.2 276.8 1387.8 280.2 1383.8 282.8 1383.2 284.2 1375.8 290.2 1373.8 290.8 1373.2 292.2 1371.2 292.8 1359.8 301.8 1357.8 302.2 1338.2 314.8 1291.8 338.2 1292.2 340.8 1292.8 339.8 1294.2 340.2 1295.8 338.8 1296.8 339.8 1297.8 338.2 1299.2 338.8 1300.2 337.2 1302.2 337.8 1302.8 336.8 1304.2 338.2 1304.2 341.8 1308.2 344.2 1309.2 347.8 1311.2 349.8 1310.8 351.2 1312.2 352.2 1318.8 351.8 1340.2 342.2 1349.8 336.8 1351.2 336.8 1360.2 331.2 1361.8 331.2 1387.8 316.2 1415.2 296.8 1435.2 277.8 1449.8 258.8 1458.2 240.8 1461.2 225.2 1460.8 210.8 1457.2 197.2 1449.2 181.2 1439.2 166.8 1428.2 155.2 1413.2 143.2 1398.8 134.8 1378.2 125.8 1357.2 119.2 1331.8 113.8 1315.2 112.2 1294.8 112.2 1290.8 113.2 1283.8 113.2 1257.8 118.8 1229.2 129.2 1213.2 136.2 1199.2 143.8 1194.2 150.8 1188.2 139.8 1179.2 127.8 1169.8 118.2 1151.2 105.2 1131.2 96.8 1110.8 90.8 1096.8 87.8 1078.2 85.8 1048.8 86.2 1028.2 89.2 1017.8 91.8 983.8 103.2 970.2 109.8 951.2 120.8 930.8 136.8 918.8 151.2 912.8 161.8 903.8 182.8ZM1382.8 188.2 1384.2 189.8 1383.2 191.2 1381.8 190.2ZM1383.2 184.8 1384.2 185.8 1383.8 187.2 1382.2 186.2ZM1241.2 183.8 1241.2 186.8 1240.2 185.8ZM1383.8 181.2 1384.8 182.2 1384.2 183.8 1382.8 182.8ZM1239.2 178.8 1240.2 179.2 1239.8 181.2 1238.8 180.8ZM1384.2 177.2 1385.8 178.8 1384.8 180.2 1383.2 179.2ZM1242.8 176.8 1243.8 177.2 1243.2 183.8 1242.2 182.8ZM1246.8 155.2 1248.8 159.8 1248.2 161.2 1246.2 156.8ZM1244.2 154.8 1246.2 159.2 1245.8 160.8 1243.8 156.2ZM1248.8 154.2 1250.2 157.2 1249.8 158.8 1248.2 155.8ZM1244.2 148.2 1246.2 152.8 1245.8 154.2 1243.8 149.8ZM1246.2 147.2 1247.8 150.2 1247.2 151.8 1245.8 148.8ZM1234.8 147.2 1237.2 151.8 1242.2 167.2 1244.2 169.2 1243.8 170.2 1242.2 169.8 1242.2 174.2 1240.8 174.2 1240.8 170.8 1238.8 169.2 1239.2 170.2 1237.8 171.2 1238.8 173.8 1238.2 174.8 1236.8 173.2 1229.2 177.8 1221.2 187.8 1217.2 197.2 1202.8 211.2 1200.8 207.8 1194.2 189.2 1200.8 182.8 1204.2 174.2 1213.2 162.8 1231.2 149.8 1233.2 152.2 1232.2 149.8 1232.8 148.8 1234.8 151.8ZM1236.8 146.8 1243.8 164.2 1243.8 167.8 1241.8 164.8 1236.8 150.8ZM1240.2 144.8 1242.2 147.8 1243.8 152.2 1243.2 153.8 1240.2 147.2ZM1242.2 143.8 1243.8 145.8 1243.2 147.2 1241.8 144.2ZM1039.8 118.2 1040.8 119.2 1040.2 120.8 1039.2 119.8ZM1038.2 114.2 1039.2 115.2 1038.8 116.8 1037.8 115.8ZM1036.8 110.2 1037.8 111.2 1037.2 112.8 1036.2 111.8ZM1035.2 106.2 1036.2 107.2 1035.8 108.8 1034.8 107.8Z"/>
<path fill="#870000" d="M1104.2 468.2 1102.8 471.2 1082.8 488.8 1084.8 509.2 1102.8 527.2 1101.8 513.2 1102.8 512.2 1133.2 510.8 1134.8 526.2 1152.2 505.8 1151.2 491.2 1147.8 494.2 1134.8 509.8 1133.2 510.2 1123.2 485.2 1124.2 481.8 1109.8 481.8 1108.8 480.8 1125.2 480.8 1130.2 475.8 1130.2 472.8 1103.2 472.2 1103.8 470.8 1127.8 470.8 1128.8 468.2ZM1104.2 465.8 1104.8 466.8 1129.2 466.2 1128.2 464.8 1106.2 464.8ZM1127.8 462.2 1127.2 460.8 1125.8 460.8 1120.8 457.8 1118.2 458.8 1110.8 459.2 1108.2 461.8ZM945.2 275.2 944.2 275.2 935.2 284.2 936.2 284.8ZM1244.2 179.8 1243.8 181.8 1245.8 184.8 1245.8 181.8ZM1243.8 171.2 1242.8 170.8 1241.8 176.2 1240.8 175.8 1240.8 171.8 1239.8 170.8 1238.2 176.2 1236.8 174.2 1229.8 177.8 1221.2 188.2 1217.2 197.8 1202.8 211.8 1202.8 228.2 1216.8 214.8 1219.8 207.2 1224.8 199.8 1229.2 195.2 1236.2 190.8 1237.2 187.2 1238.8 188.8 1240.8 187.8 1240.2 183.2 1241.2 182.8 1242.2 184.2 1241.8 187.2 1243.8 185.8 1241.8 182.8 1242.2 176.2 1243.8 176.2 1244.2 175.2ZM1236.2 183.8 1236.8 185.2 1235.8 186.2 1235.2 184.8ZM1239.2 177.2 1240.2 177.8 1239.8 182.8 1238.8 182.2ZM1284.8 170.8 1294.8 169.2 1310.2 169.2 1329.2 171.8 1317.8 169.2 1298.2 168.2ZM1087.2 143.2 1075.8 141.2 1061.2 140.8 1038.8 144.2 1036.8 145.8 1033.2 145.8 1032.2 146.8 1058.8 142.2 1077.8 142.2ZM899.8 199.8 899.2 209.8 901.8 227.2 907.2 241.2 917.8 261.2 921.2 265.2 922.8 268.8 926.2 272.2 927.2 274.8 934.2 282.8 945.2 271.8 944.8 269.2 946.8 267.2 946.8 264.8 944.8 262.2 944.8 259.8 946.8 254.8 952.8 251.8 963.2 250.8 949.8 229.2 943.8 217.2 938.8 201.8 937.8 194.8 937.8 183.8 940.2 169.8 943.8 160.8 948.8 151.8 954.8 143.8 966.2 132.2 983.2 121.2 993.2 116.2 997.2 115.2 998.8 113.8 1007.8 111.2 1009.2 109.8 1013.2 109.8 1013.8 108.8 1016.2 108.8 1016.8 107.8 1018.8 108.2 1019.8 106.8 1021.8 107.8 1023.8 106.2 1025.2 108.2 1031.8 126.2 1024.8 107.8 1024.8 106.2 1026.8 105.8 1034.8 126.2 1027.8 107.2 1028.2 104.8 1030.2 105.8 1037.8 125.2 1030.2 105.8 1031.2 104.2 1033.2 105.8 1038.8 121.8 1040.8 124.8 1033.2 104.8 1034.8 103.8 1041.8 121.8 1043.8 124.2 1036.2 104.8 1037.2 103.2 1039.2 105.8 1045.2 122.8 1046.8 123.8 1039.8 105.2 1040.2 103.2 1042.2 106.2 1048.2 123.2 1049.2 123.8 1049.8 122.2 1042.2 103.8 1042.8 102.8 1044.2 103.8 1050.8 122.2 1052.8 122.8 1045.8 104.2 1046.2 102.8 1053.8 122.2 1054.8 122.8 1058.8 121.8 1063.2 122.8 1068.2 122.2 1069.2 123.2 1073.2 122.8 1074.8 123.8 1079.8 123.8 1092.8 126.2 1096.2 127.8 1097.2 127.2 1098.2 128.2 1102.2 128.8 1116.8 134.2 1125.2 138.2 1126.2 139.8 1132.8 143.2 1134.2 144.8 1134.2 146.2 1136.2 147.2 1136.2 153.8 1134.8 154.8 1134.2 151.8 1132.8 152.2 1132.8 154.2 1134.8 154.8 1134.8 159.8 1135.8 159.2 1136.8 160.2 1136.2 161.8 1146.2 172.2 1151.8 180.8 1156.8 191.2 1159.8 202.2 1159.8 216.8 1175.8 229.8 1175.8 214.2 1177.2 212.8 1201.8 211.8 1201.8 209.8 1194.2 189.2 1199.8 183.8 1203.8 174.8 1210.2 165.8 1218.8 157.8 1234.8 146.8 1235.2 147.2 1240.2 144.2 1241.8 145.8 1241.2 144.2 1244.8 142.2 1252.8 162.8 1245.8 142.8 1246.8 141.2 1254.8 161.8 1247.8 141.8 1248.8 140.2 1256.2 160.8 1257.2 161.2 1250.2 141.8 1250.8 139.2 1258.8 160.2 1259.8 159.8 1252.2 140.2 1252.8 138.8 1254.2 140.2 1260.2 158.8 1261.8 159.8 1254.8 140.2 1255.2 137.8 1256.2 138.8 1262.2 157.2 1264.2 159.2 1266.2 157.8 1264.2 151.8 1264.8 150.2 1267.2 157.2 1269.2 158.2 1269.8 156.2 1273.8 155.8 1273.8 153.8 1274.8 154.8 1277.2 154.8 1282.2 152.8 1300.2 149.8 1313.2 151.2 1315.2 150.8 1337.8 154.8 1338.8 155.8 1340.2 155.2 1344.2 157.2 1345.8 156.8 1346.8 157.8 1351.8 158.8 1352.2 159.8 1357.2 160.8 1357.8 161.8 1361.8 162.8 1363.8 164.2 1364.2 163.8 1365.8 165.2 1367.8 165.2 1371.2 167.8 1372.2 167.2 1376.2 170.2 1377.8 170.2 1378.8 171.8 1380.2 171.8 1384.8 174.8 1397.2 186.8 1406.2 198.2 1411.2 207.2 1415.8 218.8 1417.8 231.2 1414.8 241.2 1414.8 244.2 1412.8 247.2 1412.8 248.8 1411.8 249.2 1411.8 250.8 1409.2 253.8 1409.2 255.2 1407.8 256.2 1403.2 263.8 1401.8 264.2 1401.8 265.8 1400.2 266.2 1398.2 269.8 1396.2 270.8 1396.2 271.8 1394.2 272.8 1394.2 273.8 1392.2 274.8 1392.2 275.8 1390.2 276.8 1387.8 280.2 1383.8 282.8 1383.2 284.2 1375.8 290.2 1373.8 290.8 1373.2 292.2 1371.2 292.8 1359.8 301.8 1357.8 302.2 1338.2 314.8 1311.2 328.8 1311.8 329.8 1312.8 328.2 1314.2 328.8 1314.8 327.8 1316.2 328.2 1317.2 327.2 1318.2 328.8 1319.2 326.8 1322.8 327.2 1325.8 324.8 1327.2 325.2 1330.2 323.2 1332.8 323.2 1335.8 321.8 1336.8 323.8 1344.8 327.8 1347.2 333.8 1348.8 335.2 1355.2 333.8 1359.8 330.8 1365.2 328.8 1390.2 314.2 1407.2 302.8 1420.8 291.8 1431.2 281.8 1444.2 266.2 1452.8 253.2 1458.2 240.2 1461.2 222.2 1459.8 206.2 1456.2 195.2 1447.2 178.2 1438.8 166.2 1429.8 156.8 1415.2 144.8 1398.8 134.8 1378.2 125.8 1357.2 119.2 1331.8 113.8 1315.2 112.2 1294.8 112.2 1290.8 113.2 1283.8 113.2 1257.8 118.8 1229.2 129.2 1213.2 136.2 1199.2 143.8 1194.2 151.2 1187.8 139.2 1178.8 127.2 1165.2 114.8 1148.2 103.8 1131.2 96.8 1110.8 90.8 1096.8 87.8 1078.2 85.8 1048.8 86.2 1028.2 89.2 1017.8 91.8 983.8 103.2 970.2 109.8 951.2 120.8 930.8 136.8 918.8 151.2 912.8 161.8 903.8 182.8ZM1268.8 154.2 1269.8 155.8 1269.2 156.8 1268.2 155.8ZM1270.2 151.2 1271.2 152.8 1270.8 154.2 1269.8 152.8ZM1266.2 147.2 1268.2 151.8 1267.8 153.2 1265.8 148.8ZM1262.2 143.2 1264.8 149.2 1264.2 150.8 1261.8 144.8ZM1267.2 142.8 1268.8 145.8 1268.2 147.2 1266.8 144.2ZM1263.8 140.2 1265.2 143.2 1264.8 144.8 1263.2 141.8ZM1257.2 137.2 1258.8 138.8 1260.2 144.8 1264.8 156.2 1264.2 158.2 1256.8 138.8ZM1259.8 136.2 1262.2 142.2 1261.8 143.8 1259.2 137.8ZM1264.8 135.8 1265.8 137.2 1265.2 138.8 1264.2 137.2Z"/>
<path fill="#920000" d="M1151.2 491.8 1148.8 493.2 1133.8 510.8 1134.8 526.2 1152.2 505.8ZM1128.2 468.2 1104.8 468.2 1102.2 471.8 1082.8 488.8 1084.8 509.2 1102.2 526.8 1101.2 513.8 1103.2 511.8 1132.2 510.2 1131.2 505.8 1123.2 485.8 1124.2 481.8 1108.8 481.2 1109.2 480.2 1125.8 480.2 1129.8 476.2 1130.2 473.2 1103.8 472.8 1103.2 471.2 1104.8 470.2 1127.8 470.2 1128.8 469.2ZM1104.8 465.2 1104.8 466.8 1129.2 466.2 1128.2 464.8ZM1127.8 462.2 1127.2 460.8 1125.2 460.8 1120.2 457.8 1118.2 459.2 1111.2 459.2 1109.2 461.2 1122.8 461.8 1124.2 462.8ZM933.2 252.2 922.2 263.2 923.2 263.2 933.2 253.2ZM1235.8 175.8 1234.8 178.2 1234.2 176.8 1231.2 177.2 1225.8 182.2 1221.2 188.8 1217.8 197.2 1202.8 212.2 1203.2 228.2 1216.8 214.8 1217.8 211.2 1223.2 201.8 1230.8 194.2 1230.8 183.2 1231.8 183.2 1231.8 192.8 1232.8 182.2 1233.2 192.2 1236.8 190.2 1235.2 189.8 1235.2 187.8 1236.2 187.8 1237.2 185.8 1235.8 187.2 1234.8 186.2 1234.8 190.2 1233.8 190.2 1233.8 184.8 1236.2 182.8 1237.2 183.2 1237.2 177.2 1236.2 181.8ZM1234.8 180.8 1235.2 181.8 1234.2 183.2 1233.8 181.8ZM1295.2 169.2 1320.2 170.2 1305.8 168.2 1298.8 168.2ZM1086.8 143.2 1082.2 142.2 1079.8 142.8 1074.2 141.2 1061.8 140.8 1059.8 141.8 1057.8 141.2 1038.8 144.8 1037.8 145.8 1032.8 146.8 1058.8 142.2 1077.8 142.2ZM899.8 199.8 899.8 215.8 903.2 230.2 912.2 250.8 917.8 259.8 919.8 260.8 919.2 262.2 920.8 262.2 930.2 252.8 930.2 251.2 928.2 251.2 929.2 250.2 929.2 247.8 931.8 247.2 932.8 244.8 931.2 243.8 929.8 238.8 931.8 238.8 932.8 237.2 942.2 237.2 942.8 235.2 939.2 234.2 939.8 230.8 945.2 229.8 943.8 228.2 945.2 227.2 947.8 227.8 943.2 217.2 938.8 203.2 937.2 188.2 937.8 181.2 939.8 170.8 943.8 160.2 953.8 144.8 966.8 131.8 985.8 119.8 1008.8 109.8 1013.2 109.2 1014.2 108.2 1023.2 105.8 1027.2 105.8 1028.8 104.2 1033.2 104.2 1034.2 103.2 1038.8 103.8 1039.8 102.8 1041.8 103.2 1042.2 102.2 1044.8 102.8 1046.2 101.8 1047.8 103.2 1049.8 108.8 1047.8 103.8 1047.8 102.2 1049.2 101.8 1050.8 103.2 1057.8 121.8 1050.8 103.2 1052.2 101.2 1060.2 121.8 1081.8 123.8 1083.2 124.8 1084.8 124.2 1091.2 126.2 1092.2 125.8 1093.2 126.8 1102.8 128.8 1122.8 136.8 1132.8 142.8 1136.2 146.2 1136.8 154.8 1135.8 155.8 1135.8 158.2 1137.2 159.8 1137.2 162.2 1146.2 172.2 1151.8 180.8 1156.8 191.2 1159.8 202.2 1159.8 216.8 1175.2 229.2 1175.2 215.2 1176.8 212.8 1201.8 211.2 1193.8 189.8 1200.2 182.8 1204.2 173.8 1209.8 166.2 1218.2 157.8 1234.2 146.8 1249.8 140.2 1250.2 139.2 1251.8 139.8 1252.8 138.2 1256.2 138.2 1257.2 136.8 1259.2 138.8 1265.8 157.8 1258.8 137.8 1259.2 135.8 1261.2 137.8 1268.2 157.2 1261.2 137.2 1261.8 135.2 1263.2 136.2 1268.8 153.2 1270.8 155.8 1263.8 137.2 1264.2 134.8 1266.2 137.2 1272.8 155.8 1272.2 152.2 1265.8 134.8 1266.8 133.8 1274.8 154.2 1275.2 153.2 1268.2 134.2 1269.2 133.2 1270.2 134.2 1276.8 153.8 1277.8 154.2 1278.2 153.2 1270.8 133.8 1271.2 132.8 1272.8 133.8 1279.2 153.2 1280.2 153.8 1280.2 151.2 1273.2 133.2 1274.2 132.2 1282.2 152.8 1282.8 149.2 1284.2 152.2 1285.2 152.2 1284.8 147.2 1286.8 151.8 1288.8 150.8 1295.8 150.8 1296.8 149.8 1307.2 149.8 1310.2 150.8 1317.8 150.8 1322.2 152.2 1323.8 151.8 1333.2 154.2 1334.8 153.8 1339.2 155.8 1340.8 155.2 1341.8 156.2 1349.2 157.8 1349.8 158.8 1351.8 158.8 1367.2 164.8 1384.8 174.2 1400.2 189.8 1406.2 197.8 1412.8 209.8 1415.8 217.8 1417.8 228.2 1417.8 233.8 1414.8 241.8 1414.8 244.2 1412.8 247.2 1412.8 248.8 1411.8 249.2 1411.8 250.8 1409.2 253.8 1409.2 255.2 1407.8 256.2 1403.2 263.8 1401.8 264.2 1401.8 265.8 1400.2 266.2 1398.2 269.8 1396.2 270.8 1396.2 271.8 1394.2 272.8 1394.2 273.8 1392.2 274.8 1392.2 275.8 1390.2 276.8 1387.8 280.2 1383.8 282.8 1383.2 284.2 1375.8 290.2 1373.8 290.8 1373.2 292.2 1371.2 292.8 1359.8 301.8 1334.8 316.2 1335.8 317.8 1336.2 315.8 1337.8 317.2 1338.8 316.2 1340.2 316.8 1340.8 315.2 1342.2 316.2 1345.2 313.8 1348.8 313.8 1360.2 307.2 1365.2 306.2 1365.8 312.2 1373.2 318.2 1380.8 318.8 1407.2 302.2 1424.2 288.2 1436.2 275.8 1445.2 264.8 1452.2 253.8 1455.8 246.2 1459.2 235.8 1460.8 226.8 1460.8 213.2 1457.2 198.2 1449.2 181.8 1437.2 164.8 1425.8 153.2 1406.2 138.8 1393.8 132.2 1378.2 125.8 1357.2 119.2 1331.8 113.8 1315.2 112.2 1294.8 112.2 1290.8 113.2 1283.8 113.2 1265.2 116.8 1252.8 120.2 1218.8 133.8 1199.2 143.8 1194.2 151.8 1187.2 138.8 1176.2 124.8 1162.2 112.8 1147.2 103.2 1131.2 96.8 1110.8 90.8 1096.8 87.8 1078.2 85.8 1048.8 86.2 1028.2 89.2 1017.8 91.8 983.8 103.2 970.2 109.8 951.2 120.8 930.8 136.8 918.8 151.2 912.8 161.8 903.8 182.8ZM1279.8 140.8 1282.2 146.2 1281.8 147.2 1279.2 141.8ZM1281.8 138.8 1283.8 142.8 1283.2 143.8 1281.2 139.8ZM1276.8 132.2 1279.8 139.2 1279.2 140.2 1276.2 133.2ZM1279.2 131.8 1280.8 134.2 1280.2 135.2 1278.8 132.8ZM1057.2 108.2 1058.8 109.2 1058.2 112.2 1056.8 110.8ZM1055.8 104.2 1057.2 105.2 1056.8 108.2 1055.2 106.8ZM1054.2 101.2 1055.8 102.2 1055.2 104.2 1053.8 102.8Z"/>
<path fill="#9c0000" d="M1150.8 491.8 1134.2 510.8 1134.8 525.8 1152.2 505.8ZM1082.8 489.2 1083.2 495.2 1101.2 512.8 1103.8 511.2 1132.2 509.8 1122.8 485.2 1124.2 482.2 1109.2 481.8 1108.2 480.8 1109.2 479.8 1125.8 479.8 1129.2 476.8 1130.2 474.2 1129.2 472.8 1103.8 472.8 1102.8 471.2 1084.2 486.8ZM1103.8 470.2 1127.8 470.2 1128.8 468.8 1104.8 468.2ZM1104.8 465.8 1105.2 466.8 1128.8 466.8 1128.8 465.2 1127.8 464.8 1106.8 464.8ZM1127.8 461.8 1121.2 458.2 1119.2 458.2 1117.8 459.8 1110.8 459.8 1109.8 461.2 1118.8 461.2 1123.8 462.2ZM1232.2 177.2 1230.2 178.2 1223.8 185.2 1218.8 194.2 1217.8 197.8 1203.2 212.2 1203.2 228.2 1216.8 214.8 1219.8 207.2 1226.2 198.2 1226.2 193.2 1227.8 191.8 1227.8 185.8 1229.2 184.2 1229.2 182.2 1231.2 180.2 1233.8 180.8ZM1295.8 169.2 1320.2 170.2 1306.8 168.8ZM1037.8 145.8 1058.8 142.2 1077.8 142.2 1086.2 143.2 1070.8 141.2 1060.8 141.2 1041.8 144.2ZM899.8 199.8 899.2 209.8 902.2 225.8 908.2 240.2 911.8 237.8 912.2 238.2 909.2 242.2 910.2 242.2 923.2 228.8 921.8 227.2 922.2 225.8 920.2 222.8 918.8 214.8 919.8 213.8 923.8 216.8 926.2 216.8 932.2 214.2 936.8 213.8 940.2 210.8 937.2 195.8 937.2 183.8 938.8 173.8 940.8 166.8 946.8 154.2 954.8 143.2 960.8 136.8 971.8 127.8 978.2 123.8 1001.8 112.2 1020.2 106.2 1021.2 106.8 1022.8 105.8 1027.2 105.2 1028.2 104.2 1042.8 101.8 1059.2 100.8 1060.2 101.8 1059.8 103.8 1061.8 105.2 1060.8 111.2 1062.2 112.2 1060.8 121.2 1062.8 121.2 1063.8 122.2 1073.8 122.2 1077.2 123.8 1079.8 123.2 1092.8 125.8 1095.8 127.2 1097.2 126.8 1098.2 127.8 1101.2 128.8 1102.2 128.2 1108.8 131.2 1112.2 131.8 1121.8 136.8 1123.2 136.8 1133.2 142.8 1145.8 156.8 1153.2 169.8 1157.8 183.8 1158.8 193.8 1158.2 197.2 1159.2 201.8 1173.8 213.8 1177.2 212.2 1201.2 211.2 1193.8 189.2 1200.2 182.8 1203.8 174.2 1212.8 162.8 1224.8 152.8 1234.2 146.8 1250.2 138.8 1258.2 136.8 1259.8 135.2 1260.8 135.8 1263.8 134.2 1265.2 134.8 1266.2 133.8 1267.8 134.2 1271.2 132.2 1272.8 133.2 1274.2 131.8 1276.2 134.2 1282.2 151.8 1275.8 133.8 1276.2 131.2 1278.2 133.2 1278.2 131.2 1279.2 130.8 1280.8 132.2 1287.2 151.2 1287.2 149.2 1280.8 132.2 1281.2 130.2 1283.2 131.8 1289.8 150.8 1290.2 150.2 1283.2 131.8 1284.2 129.8 1285.2 130.8 1291.8 149.8 1292.8 150.2 1286.2 131.8 1286.8 129.8 1288.2 131.2 1293.2 146.8 1295.2 150.2 1295.8 149.2 1288.8 130.2 1289.8 129.2 1297.8 149.8 1303.8 149.2 1313.2 150.8 1315.2 150.2 1335.2 153.8 1336.2 154.8 1337.8 154.2 1338.8 155.2 1340.2 154.8 1367.8 164.8 1384.2 173.8 1397.2 185.8 1408.8 201.2 1416.2 218.8 1417.8 225.2 1417.8 235.2 1413.8 246.8 1409.2 253.8 1409.2 255.2 1407.8 256.2 1403.2 263.8 1401.8 264.2 1401.8 265.8 1398.2 268.8 1398.2 269.8 1396.2 270.8 1396.2 271.8 1394.2 272.8 1394.2 273.8 1392.2 274.8 1392.2 275.8 1390.2 276.8 1387.8 280.2 1383.8 282.8 1383.2 284.2 1375.8 290.2 1373.8 290.8 1373.2 292.2 1371.2 292.8 1368.2 295.8 1360.8 300.2 1359.8 301.8 1351.2 306.2 1352.2 307.2 1359.2 303.8 1361.2 304.8 1364.2 304.2 1377.8 296.8 1384.8 291.8 1386.2 291.8 1390.8 288.2 1392.8 289.2 1392.8 290.8 1400.2 291.2 1405.8 294.8 1404.8 296.8 1395.8 296.8 1399.2 299.8 1407.8 299.8 1418.2 292.8 1434.2 277.8 1449.2 258.2 1456.8 243.2 1459.8 233.2 1460.8 224.8 1460.2 210.8 1456.8 197.2 1448.8 181.2 1438.8 166.8 1429.2 156.8 1410.2 141.8 1398.8 134.8 1378.2 125.8 1357.2 119.2 1331.8 113.8 1315.2 112.2 1294.8 112.2 1290.8 113.2 1283.8 113.2 1265.2 116.8 1252.8 120.2 1218.8 133.8 1199.8 143.8 1194.2 151.8 1187.8 139.8 1178.8 127.8 1164.8 114.8 1147.8 103.8 1131.2 96.8 1110.8 90.8 1096.8 87.8 1078.2 85.8 1048.8 86.2 1028.2 89.2 1017.8 91.8 983.8 103.2 970.2 109.8 951.2 120.8 930.8 136.8 918.8 151.2 912.8 161.8 903.8 182.8ZM921.8 227.2 921.8 229.2 914.2 236.2 913.8 235.2ZM1300.8 146.2 1301.8 146.8 1301.2 148.8 1300.2 147.2ZM1296.8 141.2 1299.2 147.2 1298.2 148.2 1295.8 142.2ZM1297.8 136.2 1299.8 140.8 1298.8 141.8 1296.8 137.2ZM1293.8 132.8 1296.2 138.8 1295.2 139.8 1292.8 133.8ZM1297.8 131.8 1298.8 131.2 1299.8 133.2 1298.8 133.8ZM1291.2 129.8 1292.2 129.2 1293.2 130.2 1292.2 131.2ZM1294.8 128.8 1296.2 130.8 1295.2 131.8 1294.2 130.2Z"/>
<path fill="#a80000" d="M1150.8 492.8 1134.2 511.8 1135.2 525.8 1152.2 505.8 1151.2 504.2ZM1082.8 489.2 1083.2 494.8 1101.2 512.2 1104.2 510.8 1131.8 509.8 1122.2 485.2 1123.8 482.2 1108.2 481.2 1108.8 479.8 1126.2 479.2 1129.8 475.2 1129.8 473.2 1128.8 472.8 1103.2 472.8 1102.2 471.8ZM1104.2 468.8 1104.8 470.2 1126.8 470.2 1128.2 469.2 1127.8 468.2ZM1104.8 465.8 1105.2 466.8 1128.8 466.2 1127.2 464.8 1106.8 464.8ZM1127.2 462.2 1126.8 460.8 1124.8 460.8 1120.8 458.2 1118.2 459.8 1110.8 460.2 1110.8 461.2ZM919.2 186.8 920.2 188.8 921.8 189.2 931.2 188.8 932.8 187.2ZM1231.8 177.8 1225.2 183.8 1221.8 188.8 1217.8 198.2 1203.2 212.8 1203.8 227.8 1216.8 214.8 1219.8 207.2 1226.2 198.2 1225.8 193.2 1227.2 191.8 1227.2 185.2 1228.8 184.2 1228.8 181.8 1230.8 179.8 1232.8 179.2ZM1296.2 169.2 1310.2 169.2 1319.2 170.2 1305.8 168.8ZM1076.8 142.2 1063.8 141.2 1041.8 144.8 1058.8 142.2ZM1065.2 116.8 1064.2 118.2 1064.2 120.8 1065.2 119.2ZM1067.2 109.2 1066.2 110.8 1066.2 113.2 1067.2 111.8ZM1068.8 103.8 1067.8 105.2 1067.8 107.8 1068.8 106.2ZM899.8 199.8 899.8 211.2 900.8 212.2 902.2 221.2 903.2 221.2 905.2 217.8 907.2 216.2 907.2 218.2 909.8 218.2 907.8 220.2 908.8 220.8 911.2 217.8 909.8 217.2 911.2 215.2 910.8 213.2 912.8 211.2 915.2 205.8 914.8 191.2 916.2 186.8 917.8 185.2 936.8 184.8 939.8 168.8 947.8 152.2 953.2 144.8 963.2 134.2 976.2 124.8 995.2 114.8 1014.2 107.8 1032.8 103.8 1034.2 102.8 1035.8 103.2 1050.8 100.8 1065.2 100.2 1066.8 101.2 1068.8 100.8 1069.2 102.2 1069.8 100.8 1071.8 101.2 1066.2 121.2 1066.8 121.8 1068.2 118.8 1072.2 102.2 1073.8 101.2 1074.2 102.8 1069.2 121.8 1070.2 121.8 1075.2 102.2 1076.2 101.2 1077.2 102.2 1071.8 122.2 1072.8 122.2 1078.2 102.2 1079.2 101.8 1079.8 102.8 1075.8 115.8 1075.2 120.2 1074.2 121.8 1074.8 122.8 1076.2 122.2 1077.2 118.2 1077.2 123.2 1079.2 122.2 1080.8 123.8 1081.8 122.8 1083.2 124.2 1084.8 123.8 1085.8 124.8 1087.2 124.2 1088.2 125.2 1092.2 125.2 1093.2 126.2 1097.8 126.8 1098.8 127.8 1107.2 129.8 1125.2 137.8 1132.8 142.2 1137.8 146.8 1149.2 161.2 1155.2 173.2 1158.8 186.2 1159.2 200.8 1174.8 212.8 1178.2 211.8 1200.8 210.8 1193.2 189.8 1200.2 182.2 1204.2 173.2 1209.8 165.8 1217.2 158.2 1233.8 146.8 1250.2 138.8 1259.2 135.2 1270.2 132.8 1271.2 131.8 1272.8 132.2 1273.8 131.2 1275.2 131.8 1284.2 129.2 1285.8 129.8 1291.8 128.2 1293.8 128.8 1301.2 127.8 1301.8 130.2 1303.8 130.8 1301.2 132.8 1303.2 133.2 1301.8 139.8 1303.8 141.2 1302.2 146.2 1302.8 148.8 1305.2 149.8 1306.8 148.8 1307.8 149.8 1309.8 149.2 1310.8 150.2 1312.2 149.2 1313.8 150.8 1315.2 149.8 1316.2 150.8 1318.2 150.2 1319.2 151.2 1320.8 150.8 1321.8 151.8 1323.8 151.2 1324.8 152.2 1326.8 151.8 1327.8 152.8 1332.2 152.8 1335.8 154.2 1337.8 153.8 1339.2 155.2 1343.2 155.2 1344.8 156.8 1346.2 156.2 1347.2 157.2 1349.2 157.2 1349.8 158.2 1351.8 158.2 1355.2 160.2 1357.2 160.2 1367.2 164.2 1380.8 171.2 1388.2 176.8 1398.8 187.2 1408.8 200.8 1416.2 217.8 1417.8 224.2 1418.2 233.8 1416.2 240.8 1414.8 242.8 1413.8 246.8 1412.8 247.2 1412.8 248.8 1411.8 249.2 1411.8 250.8 1403.2 263.8 1401.8 264.2 1401.8 265.8 1400.2 266.2 1398.2 269.8 1396.2 270.8 1396.2 271.8 1394.2 272.8 1394.2 273.8 1392.2 274.8 1392.2 275.8 1390.2 276.8 1387.8 280.2 1383.8 282.8 1383.2 284.2 1375.8 290.2 1373.8 290.8 1373.2 292.2 1368.8 294.8 1369.2 295.2 1371.8 293.8 1381.2 291.8 1390.2 287.2 1419.8 264.2 1422.2 264.8 1423.2 265.8 1422.2 267.8 1424.8 269.8 1428.2 270.8 1431.2 274.8 1436.2 273.8 1443.2 266.2 1449.2 257.8 1455.2 246.2 1459.2 233.8 1460.8 219.8 1458.8 204.2 1455.8 195.2 1446.8 178.2 1437.2 165.2 1425.8 153.8 1410.8 142.2 1398.8 134.8 1378.2 125.8 1357.2 119.2 1331.8 113.8 1315.2 112.2 1294.8 112.2 1290.8 113.2 1283.8 113.2 1265.2 116.8 1252.8 120.2 1218.8 133.8 1199.8 143.8 1194.2 152.2 1187.2 139.2 1177.2 126.2 1165.2 115.2 1148.2 104.2 1131.2 96.8 1110.8 90.8 1096.8 87.8 1078.2 85.8 1048.8 86.2 1028.2 89.2 1017.8 91.8 983.8 103.2 970.2 109.8 951.2 120.8 930.8 136.8 918.8 151.2 912.8 161.8 903.8 182.8ZM925.2 183.2 926.2 182.2 928.8 182.2 929.8 183.2ZM1304.2 128.2 1304.8 129.2 1303.8 130.8 1303.2 129.2ZM1080.8 105.2 1081.2 107.2 1080.2 109.2 1079.8 107.2Z"/>
<path fill="#b20000" d="M1150.2 493.8 1135.2 511.2 1135.8 525.2 1151.8 506.2 1150.8 504.8ZM1129.8 473.2 1104.2 473.2 1102.2 471.8 1083.2 488.2 1082.8 493.2 1101.8 512.2 1104.2 509.2 1110.8 485.8 1111.8 484.8 1121.2 484.8 1123.8 482.8 1108.8 481.8 1107.2 479.2 1127.2 478.8 1129.2 476.2ZM1104.8 465.8 1128.8 466.2 1128.2 465.2ZM1118.2 460.2 1119.2 461.2 1127.2 462.2 1127.2 461.2 1119.8 458.2ZM1228.2 181.8 1222.2 188.8 1218.2 198.2 1203.8 212.8 1203.8 227.8 1216.8 214.8 1219.8 207.2 1225.8 198.8 1225.2 192.8 1226.8 191.2 1226.8 185.2ZM899.8 199.8 900.8 200.2 899.8 203.8 901.2 204.8 909.2 198.2 908.2 197.2 910.8 194.8 913.2 193.8 912.2 190.8 914.2 188.2 913.8 186.8 915.2 177.8 918.8 167.8 921.2 163.8 925.8 166.8 926.8 168.8 935.2 168.8 935.8 166.8 938.8 166.2 938.8 160.8 923.8 160.8 923.8 159.2 940.2 158.8 941.8 161.8 948.2 150.8 956.8 140.2 965.8 131.8 978.2 123.2 988.2 117.8 1003.2 111.2 1028.8 103.8 1051.2 100.2 1071.2 100.2 1072.2 101.2 1076.8 100.8 1077.8 102.2 1079.8 100.8 1080.8 102.2 1076.2 116.2 1075.2 122.8 1080.2 102.8 1082.2 101.2 1082.8 103.8 1077.8 123.2 1083.2 103.2 1084.8 101.8 1085.8 103.2 1080.8 119.8 1080.8 123.2 1086.2 102.8 1087.2 101.8 1088.2 102.8 1083.2 120.2 1083.2 123.8 1084.2 122.8 1089.2 103.2 1090.8 103.2 1085.2 123.2 1085.8 124.2 1086.8 123.8 1091.2 105.8 1092.8 103.2 1093.2 105.2 1088.8 120.2 1088.2 124.8 1089.8 123.8 1091.2 125.8 1092.8 122.8 1093.8 126.2 1097.8 126.2 1098.8 127.8 1100.2 127.2 1105.8 129.8 1107.2 129.2 1108.8 130.8 1116.8 133.2 1133.2 142.2 1141.8 150.8 1150.8 163.2 1157.2 177.8 1159.2 187.8 1159.2 200.2 1175.2 212.8 1180.2 210.2 1198.8 209.8 1192.2 190.2 1200.2 182.2 1203.8 173.8 1214.2 160.8 1224.2 152.8 1241.8 142.2 1250.8 138.2 1270.8 131.8 1289.2 128.2 1304.2 127.2 1305.8 128.2 1307.8 127.8 1308.2 128.8 1310.8 127.8 1311.2 128.8 1312.8 127.8 1313.8 128.8 1311.2 136.2 1311.2 138.8 1314.2 129.2 1315.8 128.2 1316.2 129.8 1310.8 148.2 1311.2 149.8 1317.2 129.2 1318.8 128.2 1319.2 130.2 1313.2 149.8 1314.2 149.8 1319.8 129.8 1321.2 128.8 1321.8 130.8 1316.2 150.2 1317.2 150.2 1322.2 131.8 1324.2 129.2 1324.2 132.2 1319.2 148.2 1319.2 150.8 1320.2 150.2 1325.2 131.8 1327.2 129.2 1327.8 129.8 1321.8 151.2 1323.2 150.2 1328.2 131.8 1329.8 129.8 1330.2 131.8 1324.2 151.2 1325.8 151.8 1331.8 130.8 1332.8 130.2 1331.8 136.8 1327.2 150.2 1327.2 152.2 1328.8 152.2 1331.8 140.2 1335.2 130.8 1335.2 134.2 1329.8 152.2 1330.8 153.2 1331.8 152.2 1334.2 144.2 1334.8 146.2 1332.8 151.8 1333.2 153.2 1334.2 153.2 1335.2 151.2 1336.2 154.2 1337.8 152.8 1338.8 154.8 1339.8 154.8 1340.8 152.8 1341.8 155.8 1343.2 154.8 1344.2 156.2 1346.2 155.8 1347.2 157.2 1348.8 156.8 1350.2 158.2 1351.8 157.8 1352.8 159.2 1354.2 158.8 1355.8 160.2 1357.2 159.8 1358.2 161.2 1359.8 160.8 1361.2 162.2 1367.8 164.2 1377.8 169.2 1384.8 173.8 1397.8 185.8 1406.8 197.2 1413.2 209.2 1416.2 217.2 1418.2 227.8 1418.2 234.8 1413.8 246.8 1409.2 253.8 1409.2 255.2 1407.8 256.2 1403.2 263.8 1401.8 264.2 1401.8 265.8 1400.2 266.2 1398.2 269.8 1396.2 270.8 1396.2 271.8 1394.2 272.8 1394.2 273.8 1392.2 274.8 1389.8 278.2 1388.2 278.8 1388.2 280.2 1386.2 280.8 1384.8 282.8 1386.8 281.2 1387.8 282.2 1388.2 280.8 1389.2 281.8 1390.8 280.2 1391.8 281.2 1392.8 279.8 1393.8 280.8 1394.8 279.2 1395.8 280.2 1396.8 278.8 1397.8 279.8 1398.2 278.2 1399.8 278.2 1404.2 275.2 1417.8 262.8 1430.8 246.2 1432.8 249.2 1437.8 252.8 1445.8 253.8 1450.2 252.8 1452.2 250.8 1457.2 239.8 1460.2 224.8 1460.2 213.8 1456.8 198.2 1447.2 179.2 1438.8 167.2 1423.8 152.2 1414.8 145.2 1404.2 138.8 1403.2 137.2 1378.2 125.8 1357.2 119.2 1331.8 113.8 1315.2 112.2 1294.8 112.2 1290.8 113.2 1283.8 113.2 1265.2 116.8 1252.8 120.2 1218.8 133.8 1199.8 143.8 1194.2 152.2 1187.2 139.2 1180.2 129.8 1164.2 114.8 1144.8 102.2 1126.8 95.2 1104.8 89.2 1078.2 85.8 1048.8 86.2 1028.2 89.2 1017.8 91.8 983.8 103.2 970.2 109.8 951.2 120.8 930.8 136.8 918.8 151.2 912.8 161.8 903.8 182.8ZM905.2 198.2 907.8 197.8 908.2 198.8 906.2 199.8ZM1338.2 140.8 1338.8 142.8 1337.8 144.8 1337.2 142.8ZM1335.2 140.8 1335.8 142.8 1334.8 144.8 1334.2 142.8ZM1339.2 137.2 1339.8 139.2 1338.8 141.2 1338.2 139.2ZM1336.2 137.2 1336.8 139.2 1335.8 141.2 1335.2 139.2ZM1340.2 133.8 1340.8 135.8 1339.8 137.8 1339.2 135.8ZM1341.2 131.8 1340.8 134.2 1340.2 132.2ZM1338.2 131.2 1338.2 134.8 1336.8 137.8 1336.2 135.8ZM1091.2 118.2 1091.8 120.8 1090.2 124.2 1089.8 121.8ZM1092.8 112.8 1093.2 115.2 1091.8 118.8 1091.2 116.2ZM1094.8 105.2 1095.2 107.2 1093.8 111.2 1093.2 108.8Z"/>
<path fill="#be0000" d="M1129.8 473.2 1103.8 473.2 1101.8 472.2 1083.8 487.8 1082.8 493.2 1101.2 511.8 1102.2 511.8 1103.8 509.2 1110.2 485.2 1111.2 484.2 1121.2 484.2 1123.2 483.2 1123.2 482.2 1109.2 482.2 1106.8 479.2 1126.8 478.8 1129.2 475.8ZM1105.2 465.8 1128.8 466.2 1128.2 465.2ZM1119.2 459.2 1119.2 461.2 1122.8 461.2 1124.8 462.2 1127.2 461.8 1120.2 458.2ZM901.8 190.2 904.8 189.8 907.2 187.2 907.2 185.8 913.2 180.8 913.2 178.8 915.2 175.8 915.8 172.8 923.2 155.2 933.2 140.8 939.8 135.2 944.2 133.8 950.2 134.8 952.2 135.8 953.8 139.2 955.8 140.2 965.8 131.2 975.8 124.2 995.2 114.2 1009.2 108.8 1025.8 104.2 1041.8 101.2 1056.8 99.8 1071.2 99.8 1085.8 102.2 1087.8 101.8 1088.8 103.8 1086.2 111.8 1088.8 103.2 1089.8 102.2 1091.2 102.8 1085.8 123.8 1091.2 104.2 1092.8 102.8 1093.8 103.2 1088.2 124.2 1089.2 123.2 1093.8 105.2 1095.2 103.2 1096.2 103.8 1090.8 124.2 1091.2 125.2 1096.8 104.8 1097.8 103.8 1098.8 104.2 1093.2 125.2 1093.8 125.8 1099.2 106.2 1100.8 104.2 1101.2 104.8 1095.8 125.2 1096.2 126.8 1098.8 120.2 1101.8 107.2 1103.2 105.2 1103.8 107.2 1099.2 121.8 1098.8 127.2 1100.2 124.8 1104.2 108.2 1105.8 106.2 1106.2 106.8 1100.8 127.8 1101.8 127.8 1102.8 125.8 1103.8 128.8 1107.2 128.8 1108.2 130.2 1114.8 132.2 1125.2 137.2 1134.8 143.2 1139.8 148.2 1149.8 161.2 1155.8 173.2 1159.2 186.2 1159.2 199.8 1175.8 212.8 1177.8 210.8 1183.2 190.2 1194.2 188.2 1199.8 182.8 1204.2 172.8 1212.2 162.8 1218.8 156.8 1234.8 145.8 1250.2 138.2 1274.2 130.8 1291.2 127.8 1311.2 127.2 1313.8 128.2 1321.8 128.2 1322.8 129.2 1322.2 130.8 1323.2 128.8 1325.2 129.2 1321.8 142.8 1324.8 131.8 1326.8 128.8 1327.8 129.2 1322.2 151.2 1328.2 130.8 1329.2 129.2 1330.8 129.8 1325.2 148.8 1325.2 151.8 1331.2 130.8 1332.2 129.8 1333.2 130.2 1333.2 132.8 1327.8 152.2 1333.8 132.2 1335.2 130.2 1336.2 130.8 1330.2 152.8 1331.2 152.2 1336.8 132.2 1337.8 130.8 1339.2 131.2 1333.2 153.2 1334.2 152.8 1339.8 132.2 1340.8 131.2 1341.8 131.8 1335.8 153.8 1337.2 152.8 1342.8 132.8 1344.2 131.8 1344.8 133.8 1338.8 153.2 1339.2 154.8 1345.2 134.2 1346.8 132.8 1347.2 135.2 1341.8 152.8 1341.8 155.2 1342.8 154.8 1348.2 134.8 1349.8 133.2 1350.2 135.2 1344.8 152.8 1344.8 156.2 1346.8 152.2 1351.2 135.2 1352.2 134.2 1352.8 136.2 1347.8 152.2 1347.2 156.8 1348.2 156.8 1353.2 138.8 1355.2 134.8 1355.8 136.2 1349.8 156.2 1350.2 157.8 1351.2 157.2 1355.8 140.2 1357.8 136.2 1358.2 137.8 1352.2 158.2 1353.8 158.8 1354.8 156.2 1355.2 159.8 1356.2 159.8 1357.8 156.2 1358.2 160.8 1359.8 160.2 1360.8 161.8 1362.2 161.2 1363.2 162.8 1365.2 162.8 1366.8 164.2 1367.8 163.8 1383.2 172.2 1397.8 185.2 1406.8 196.8 1413.8 209.8 1416.8 218.2 1418.2 224.8 1418.8 233.8 1416.8 240.8 1414.8 243.2 1410.8 252.8 1409.2 253.8 1409.2 255.2 1406.8 257.8 1405.8 260.8 1402.8 264.2 1401.8 264.2 1401.2 266.8 1402.8 267.8 1403.8 266.2 1405.2 267.2 1405.8 265.8 1407.2 266.8 1407.2 265.8 1408.8 265.8 1410.8 262.8 1415.8 262.8 1422.2 256.2 1426.8 248.8 1428.2 247.8 1434.8 234.8 1438.8 220.8 1442.2 220.8 1443.8 221.8 1443.2 222.8 1450.8 223.2 1451.2 224.8 1457.8 224.8 1459.2 223.8 1459.8 219.8 1458.2 204.8 1455.2 195.2 1447.2 179.8 1436.8 165.2 1419.2 148.8 1402.8 137.2 1388.2 129.8 1378.2 125.8 1357.2 119.2 1331.8 113.8 1315.2 112.2 1294.8 112.2 1290.8 113.2 1283.8 113.2 1265.2 116.8 1252.8 120.2 1218.8 133.8 1200.8 143.2 1196.8 148.2 1195.2 151.8 1193.8 152.2 1186.8 138.8 1178.8 128.2 1164.8 115.2 1144.8 102.2 1126.8 95.2 1104.8 89.2 1078.2 85.8 1048.8 86.2 1028.2 89.2 1017.8 91.8 983.8 103.2 956.2 117.8 936.2 131.8 924.2 143.8 912.8 161.8ZM1358.8 152.8 1359.2 154.8 1358.2 156.8 1357.8 154.8ZM1357.2 147.8 1357.8 149.8 1355.2 156.8 1354.8 154.8ZM1361.2 144.2 1361.8 146.2 1360.8 148.2 1360.2 146.2ZM1358.2 144.2 1358.8 146.2 1357.8 148.2 1357.2 146.2ZM1362.2 140.8 1362.8 142.8 1361.8 144.8 1361.2 142.8ZM1360.8 137.2 1360.8 139.8 1358.8 144.8 1358.8 140.8 1359.8 137.8ZM1104.8 118.2 1105.2 120.2 1103.8 124.2 1103.2 122.2ZM1106.2 112.8 1106.8 114.8 1105.2 118.8 1104.8 116.8ZM1107.8 107.2 1108.2 109.8 1106.8 113.2 1106.2 111.2Z"/>
<path fill="#ca0000" d="M1129.2 473.2 1103.8 473.2 1102.2 472.2 1084.2 487.2 1082.8 493.2 1102.2 511.8 1110.2 484.8 1120.2 484.2 1123.2 482.8 1108.8 482.2 1106.8 479.2 1107.8 478.2 1126.8 478.2 1106.2 478.2 1104.2 477.2 1128.2 476.8 1129.8 474.2ZM1105.2 465.8 1128.2 466.2 1127.8 465.2ZM1119.2 459.8 1119.8 461.2 1127.2 461.8 1121.2 458.8 1119.8 458.8ZM904.8 180.8 906.2 181.2 910.2 175.2 912.8 174.2 915.2 170.8 923.2 153.8 934.2 138.2 947.2 125.8 961.8 115.8 968.8 112.8 976.8 114.8 978.2 116.2 979.8 121.2 1001.2 111.2 1016.8 106.2 1042.8 100.8 1060.8 99.2 1078.2 100.8 1080.2 100.2 1086.2 101.8 1087.8 101.2 1089.2 102.2 1090.8 101.8 1091.2 102.8 1093.2 102.2 1094.2 103.2 1095.8 102.8 1096.8 103.8 1098.2 103.2 1099.2 104.2 1098.2 109.2 1099.2 104.8 1100.8 103.8 1101.8 106.2 1096.2 126.2 1101.8 105.8 1103.8 104.8 1104.2 106.8 1098.8 126.2 1099.8 125.2 1103.8 108.2 1104.8 106.2 1106.2 105.8 1106.8 106.8 1101.2 127.8 1106.8 107.8 1108.2 106.2 1108.8 109.2 1103.8 128.2 1108.8 110.2 1110.8 107.2 1111.2 109.8 1105.8 127.8 1106.2 129.2 1112.2 108.2 1113.2 107.8 1113.8 109.2 1108.2 128.2 1108.8 130.2 1114.2 110.2 1115.2 109.2 1115.2 113.2 1110.8 130.8 1112.2 129.2 1113.2 131.8 1114.2 131.2 1115.2 132.8 1121.2 134.8 1121.8 135.8 1123.2 135.8 1133.2 141.8 1146.8 156.2 1151.8 164.2 1157.8 178.2 1159.8 187.8 1159.8 199.8 1175.2 212.2 1177.2 211.2 1183.2 189.8 1193.8 188.2 1199.8 182.2 1203.8 173.2 1213.8 160.8 1223.8 152.8 1241.2 142.2 1259.2 134.8 1280.8 129.2 1299.8 126.8 1310.8 126.8 1313.8 127.8 1318.8 127.2 1320.2 128.2 1330.2 128.8 1331.2 130.2 1332.8 129.2 1333.8 130.2 1333.2 133.8 1333.8 131.2 1335.8 129.8 1336.8 131.8 1332.8 145.2 1336.8 131.2 1338.2 130.2 1339.8 131.2 1338.8 134.2 1339.8 131.8 1341.2 130.8 1342.2 133.2 1336.2 153.8 1342.2 133.2 1344.2 131.2 1345.2 133.2 1339.2 154.2 1345.2 133.2 1346.8 132.2 1347.8 134.8 1341.8 154.8 1343.2 152.2 1347.8 135.2 1349.8 132.8 1350.8 134.8 1344.8 155.8 1350.8 135.8 1352.2 133.8 1353.2 136.2 1347.8 153.8 1347.8 156.8 1353.2 137.2 1355.2 134.2 1356.2 136.2 1352.8 146.2 1350.2 157.8 1352.2 153.2 1356.8 136.2 1358.2 135.8 1358.8 137.2 1352.8 157.2 1353.2 158.8 1358.8 139.2 1360.8 136.2 1361.8 137.2 1355.2 159.2 1356.2 159.2 1362.2 138.2 1363.8 137.8 1363.2 142.8 1358.2 158.8 1358.8 160.8 1364.8 140.2 1366.2 138.8 1366.8 140.2 1360.8 159.8 1361.2 161.8 1367.2 141.8 1368.8 139.8 1369.2 141.8 1363.8 159.2 1363.8 162.8 1364.8 162.2 1370.2 141.8 1371.2 140.8 1371.8 141.2 1365.8 162.8 1366.2 163.8 1367.8 162.8 1368.8 164.8 1369.8 164.8 1371.8 159.2 1372.2 161.2 1370.8 165.2 1371.8 166.2 1373.2 165.2 1373.8 167.2 1378.2 168.8 1379.2 170.2 1384.8 173.2 1399.2 186.8 1409.2 200.2 1416.2 215.2 1418.2 223.2 1419.2 233.2 1416.8 242.2 1413.8 245.2 1411.2 251.8 1412.8 252.2 1413.2 250.2 1414.8 251.8 1419.8 247.8 1423.2 248.2 1425.2 246.2 1427.2 246.2 1434.2 233.8 1436.8 224.2 1437.2 216.2 1434.2 198.2 1435.2 197.2 1437.2 197.8 1440.2 200.2 1450.8 199.8 1453.8 196.2 1452.2 190.2 1442.2 172.8 1434.2 162.8 1421.2 150.8 1400.8 136.2 1397.2 135.2 1396.2 133.8 1393.8 133.2 1388.2 129.8 1366.2 121.8 1342.8 115.8 1323.2 112.8 1294.8 112.2 1277.8 114.2 1251.2 120.8 1213.2 136.2 1200.8 143.2 1194.2 152.8 1192.8 151.2 1187.2 139.8 1176.8 126.2 1165.2 115.8 1144.2 102.2 1131.2 96.8 1110.8 90.8 1096.8 87.8 1078.2 85.8 1054.8 85.8 1025.8 89.8 1008.8 94.2 992.8 99.8 970.2 109.8 946.8 123.8 936.2 131.8 927.2 140.2 914.8 157.8ZM1374.8 160.2 1375.2 161.2 1374.2 162.8 1373.8 161.2ZM1375.8 156.8 1376.2 157.8 1375.2 159.2 1374.8 157.8ZM1374.2 150.8 1374.8 152.8 1372.8 157.8 1372.8 153.8ZM1371.2 150.8 1371.8 153.2 1368.2 163.2 1367.8 160.8ZM1378.2 148.2 1378.8 149.2 1377.8 150.8 1377.2 149.2ZM1376.2 143.8 1376.8 146.2 1375.2 149.2 1374.8 147.8ZM1374.2 141.8 1374.2 144.8 1371.8 151.2 1371.2 148.8 1373.2 142.2Z"/>
<path fill="#d50000" d="M1129.2 473.2 1103.2 473.2 1102.2 472.2 1083.8 488.2 1082.8 493.2 1101.2 511.2 1102.2 511.2 1110.2 484.2 1121.2 483.8 1122.8 482.8 1108.8 482.2 1106.8 480.2 1106.8 478.2 1104.8 478.2 1103.8 477.2 1104.8 476.2 1128.2 476.2ZM1105.8 465.8 1128.2 466.2 1127.2 465.2ZM1119.8 459.2 1120.2 461.2 1126.8 461.8 1122.2 459.2ZM958.2 116.8 946.8 123.8 936.2 131.8 927.2 140.2 918.2 152.2 923.8 149.8 933.8 137.8 943.2 128.2ZM1004.2 95.8 1007.2 98.2 1011.8 98.2 1013.2 99.8 1012.8 101.2 1008.8 101.2 1011.8 102.2 1011.8 104.2 1009.8 105.2 1011.2 106.8 1039.8 100.8 1056.8 99.2 1079.8 99.8 1085.8 101.2 1090.2 101.2 1091.8 102.2 1092.8 101.8 1101.2 103.8 1102.2 104.8 1103.8 104.2 1104.8 105.8 1108.8 105.8 1109.2 108.2 1110.2 106.8 1111.8 108.8 1112.8 107.2 1114.2 108.2 1113.2 113.2 1114.2 109.2 1116.2 109.2 1110.8 130.2 1112.2 127.8 1116.8 110.2 1117.8 109.2 1118.8 109.8 1113.2 131.8 1118.8 111.8 1119.8 110.2 1120.8 110.8 1115.2 132.2 1116.2 131.8 1121.2 112.8 1122.8 111.2 1123.2 112.2 1117.8 130.8 1117.8 133.2 1119.2 130.8 1123.8 113.2 1125.2 113.2 1119.8 134.2 1120.8 134.2 1121.8 131.8 1122.2 135.8 1123.2 135.2 1124.2 136.8 1134.2 142.2 1146.2 155.2 1151.8 163.8 1157.8 177.8 1159.8 186.8 1159.8 199.8 1175.8 212.2 1176.8 211.8 1182.8 189.8 1184.2 188.8 1193.8 188.2 1199.8 182.2 1203.2 173.8 1214.2 160.2 1224.2 152.2 1234.2 145.8 1248.2 138.8 1272.8 130.8 1298.8 126.8 1324.8 127.8 1341.8 130.8 1342.8 131.8 1344.8 131.2 1347.2 132.2 1348.2 133.8 1350.2 132.8 1352.8 133.8 1353.8 135.8 1355.8 134.2 1356.8 135.8 1358.2 135.2 1359.2 137.2 1353.2 157.8 1358.2 139.8 1360.2 136.2 1361.8 136.8 1361.8 138.8 1355.8 158.8 1361.8 138.2 1362.8 137.2 1364.8 138.8 1358.2 159.8 1359.2 158.8 1364.2 140.2 1365.8 138.2 1367.2 140.2 1361.2 161.2 1366.8 141.8 1368.2 139.2 1369.8 139.8 1369.8 141.8 1363.8 162.2 1369.8 141.8 1371.2 140.2 1372.2 140.8 1372.2 143.2 1366.2 163.2 1367.2 162.2 1371.8 145.2 1373.8 141.2 1375.2 142.2 1368.8 164.2 1369.8 163.8 1375.8 143.2 1377.2 142.8 1377.8 144.2 1372.8 159.8 1371.8 165.8 1377.8 145.8 1378.8 144.2 1380.2 145.8 1374.2 164.2 1374.2 166.8 1375.2 165.8 1380.8 145.8 1381.8 144.8 1382.8 145.2 1376.2 167.2 1376.8 168.2 1377.8 167.2 1383.2 147.2 1384.2 146.8 1385.2 147.8 1379.2 166.8 1379.2 169.8 1381.2 165.8 1385.8 149.2 1386.8 148.2 1387.2 148.8 1381.2 170.8 1385.2 172.8 1394.2 180.8 1409.8 199.8 1417.8 218.2 1420.2 233.8 1420.8 231.8 1424.8 232.8 1427.2 231.2 1429.2 231.2 1429.8 229.2 1431.8 229.2 1432.8 230.2 1432.8 228.8 1434.2 227.8 1435.8 224.2 1435.8 211.2 1432.2 196.2 1427.2 185.8 1424.8 182.8 1423.8 179.2 1417.2 171.2 1417.8 169.8 1427.2 170.2 1429.8 169.2 1432.2 166.2 1434.2 165.8 1433.8 163.8 1418.8 149.2 1400.8 136.8 1396.8 135.2 1395.8 133.8 1393.8 133.8 1390.2 130.8 1388.8 131.2 1385.8 128.8 1366.2 121.8 1342.8 115.8 1323.2 112.8 1294.8 112.2 1277.8 114.2 1251.2 120.8 1213.2 136.2 1200.8 143.2 1195.2 152.2 1193.8 152.8 1184.8 136.2 1169.2 119.2 1158.8 111.2 1143.8 102.2 1126.8 95.2 1104.8 89.2 1089.2 86.8 1078.2 85.8 1054.8 85.8 1028.2 89.2ZM1424.2 230.2 1425.2 229.2 1426.2 229.8 1425.8 230.8ZM1427.8 228.8 1428.8 227.8 1429.8 229.2 1428.2 229.8ZM1431.2 227.8 1432.2 226.8 1433.2 228.2 1431.8 228.8ZM1383.8 167.8 1384.2 170.2 1383.2 171.2 1382.8 169.2ZM1386.2 159.2 1386.8 161.8 1385.8 162.8 1385.2 160.8ZM1387.2 155.8 1387.8 158.2 1386.8 159.2 1386.2 157.2ZM1388.8 150.8 1389.2 153.2 1388.2 154.2 1387.8 152.2ZM1123.2 126.2 1123.8 127.8 1122.2 131.2 1121.8 129.8ZM1124.8 120.8 1125.2 122.2 1123.8 125.8 1123.2 124.2ZM1126.2 115.2 1126.8 116.8 1125.2 120.2 1124.8 118.8Z"/>
<path fill="#e00000" d="M1129.2 473.8 1104.8 473.8 1101.8 472.8 1084.2 487.8 1082.8 492.8 1101.8 511.2 1110.2 483.8 1120.2 483.8 1122.8 482.8 1109.8 482.8 1108.2 482.2 1106.2 478.8 1104.2 478.2 1103.8 476.8 1128.2 476.2ZM1119.8 459.8 1121.2 461.2 1125.2 461.8 1120.2 458.8ZM1392.2 169.8 1391.2 169.8 1390.2 171.8 1391.2 171.8ZM1396.2 166.2 1395.2 166.2 1394.8 167.8 1395.8 167.8ZM1400.8 162.2 1399.8 162.2 1399.2 163.8 1400.2 163.8ZM1396.2 162.2 1394.8 163.2 1395.2 164.2 1396.8 163.2ZM1400.8 158.2 1399.2 159.2 1399.8 160.2 1401.2 159.2ZM1394.2 156.8 1393.8 158.2 1395.2 158.2 1396.2 160.2 1396.8 158.8ZM1044.2 93.8 1048.8 93.8 1050.8 95.2 1054.8 95.2 1055.2 95.8 1052.8 97.2 1053.8 98.8 1060.2 98.2 1079.8 99.2 1101.2 103.2 1102.2 104.2 1103.8 103.8 1112.2 107.2 1113.2 106.8 1116.8 109.2 1118.2 108.8 1119.2 110.2 1120.8 109.8 1121.2 111.8 1122.8 110.8 1125.8 113.2 1125.2 115.8 1125.8 113.8 1127.2 112.8 1127.8 114.8 1122.2 135.2 1127.8 115.2 1129.2 114.2 1129.8 116.2 1124.2 136.2 1126.2 131.8 1129.8 117.2 1130.8 115.8 1131.8 116.8 1126.2 137.2 1127.2 136.8 1131.8 118.8 1133.2 116.8 1133.8 117.8 1128.2 136.2 1128.2 138.8 1134.8 142.2 1142.8 150.8 1149.8 160.2 1154.8 169.2 1158.2 178.8 1160.2 188.8 1159.8 198.8 1175.2 211.8 1176.8 211.2 1182.2 190.2 1183.8 188.8 1189.8 188.8 1194.8 187.2 1199.8 181.8 1203.8 172.8 1214.8 159.8 1233.8 145.8 1242.2 141.2 1259.2 134.2 1271.2 130.8 1289.2 127.2 1311.2 126.2 1327.8 127.8 1341.8 130.2 1342.8 131.2 1344.8 130.8 1348.2 132.8 1350.2 132.2 1351.2 133.2 1353.2 133.2 1353.8 134.2 1356.2 133.8 1359.2 135.8 1361.8 135.8 1362.2 136.8 1366.8 137.8 1367.8 139.2 1369.8 138.8 1370.2 139.8 1371.8 139.2 1373.2 140.8 1374.2 140.2 1375.8 142.2 1377.2 141.2 1378.8 143.2 1379.2 142.8 1380.8 144.2 1382.8 143.8 1383.8 145.2 1385.2 145.2 1385.8 146.8 1387.2 146.2 1388.2 147.2 1390.8 146.8 1390.8 145.2 1392.8 142.2 1394.2 142.2 1399.8 138.2 1389.8 131.8 1388.2 131.8 1383.2 127.8 1380.8 128.2 1376.8 125.2 1374.8 125.8 1373.8 124.2 1347.2 116.8 1323.2 112.8 1294.8 112.2 1290.8 113.2 1283.8 113.2 1265.2 116.8 1252.8 120.2 1235.2 126.8 1203.8 141.2 1200.2 143.8 1194.2 153.2 1186.2 138.8 1180.8 131.2 1172.8 122.8 1158.2 111.2 1140.8 101.8 1139.8 100.2 1137.8 100.2 1131.2 96.8 1104.8 89.2 1078.2 85.8 1049.8 86.2 1051.8 87.8 1051.8 89.8 1055.2 89.8 1057.2 91.2 1057.2 92.2 1055.8 93.2Z"/>
<path fill="#ed0000" d="M1128.8 473.8 1103.8 473.8 1102.2 472.8 1084.2 488.2 1082.8 492.8 1101.8 510.8 1110.2 483.2 1103.2 477.2 1104.8 475.8 1128.2 475.8ZM1101.8 475.8 1102.2 474.2 1103.8 475.2 1102.8 476.2ZM1120.2 459.2 1120.2 460.8 1124.2 461.2ZM1097.2 100.2 1098.2 101.8 1113.8 106.2 1116.8 108.2 1118.2 107.8 1125.8 112.2 1127.8 112.2 1130.2 114.8 1131.8 114.8 1132.2 116.2 1133.8 115.8 1134.2 116.8 1135.8 116.8 1136.2 119.2 1133.2 128.8 1136.2 118.2 1137.2 117.8 1138.2 118.8 1132.8 137.8 1132.8 140.2 1133.8 139.2 1134.8 140.2 1134.2 141.2 1146.8 155.2 1154.8 168.8 1159.8 183.8 1160.8 193.2 1160.2 199.2 1175.8 211.8 1182.2 189.8 1183.8 188.2 1193.8 187.8 1199.2 182.2 1203.2 173.2 1213.8 160.2 1225.8 150.8 1241.8 141.2 1263.2 132.8 1290.2 126.8 1311.2 125.8 1342.8 128.8 1345.8 125.2 1345.2 123.8 1349.8 120.8 1348.8 118.2 1342.8 115.8 1315.2 112.2 1294.8 112.2 1290.8 113.2 1283.8 113.2 1265.2 116.8 1237.8 125.8 1209.2 138.2 1200.8 143.2 1195.8 152.2 1193.8 153.2 1186.2 139.2 1177.8 128.2 1164.2 115.8 1151.2 107.2 1131.2 96.8 1126.2 96.2 1123.2 94.2 1121.2 95.2 1119.8 93.2 1101.2 88.8 1103.2 90.8 1102.8 94.2 1101.8 94.8 1102.8 96.2 1100.2 97.8 1100.8 98.8 1099.8 99.8ZM1139.2 119.2 1140.2 120.8 1138.8 122.8 1137.8 121.2Z"/>
<path fill="#fe0000" d="M1127.8 473.8 1101.8 473.2 1084.8 487.8 1083.2 490.2 1083.2 492.2 1101.8 510.2 1109.2 482.8 1108.2 482.8 1105.2 478.8 1101.2 475.8 1101.2 474.8 1102.8 473.8 1103.8 475.8 1127.8 475.8ZM1136.8 143.8 1146.8 154.8 1155.8 170.2 1159.8 182.2 1160.8 188.2 1160.8 199.2 1175.8 211.2 1182.2 189.2 1183.2 188.2 1193.8 187.2 1199.2 181.8 1203.2 172.8 1208.8 165.2 1217.2 156.8 1228.2 148.8 1241.8 140.8 1270.8 129.8 1284.8 126.8 1287.8 123.2 1286.8 122.2 1286.2 118.8 1284.8 117.2 1277.8 114.8 1265.2 116.8 1252.8 120.2 1229.2 129.2 1203.8 141.2 1200.8 143.2 1195.8 152.8 1193.8 153.8 1192.2 152.2 1186.2 139.8 1180.8 132.2 1168.2 119.8 1159.2 113.8 1158.2 119.8 1155.8 122.2 1146.2 122.8 1145.2 125.8 1144.2 126.8 1143.2 126.2 1144.8 127.8 1144.2 129.8 1141.8 130.8 1141.2 133.8 1142.2 134.8 1140.8 135.2 1137.8 138.8 1137.2 140.2 1138.2 141.2 1136.8 142.2ZM1151.8 112.8 1152.8 113.8 1152.8 117.2 1154.2 118.8 1155.2 117.8 1155.2 112.2Z"/></g>
<path d="M1174 260.2L1380.8 285.9M1455 295L2813.2 463.4M1174 260.2L1183.3 221.7M1202.7 141.6L1330.5 -386.3M1174 260.2L1116.8 -3980.9M1190.4 262.3L1186.2 280.3M1176.9 248.3L1152.8 245.4M1173.8 248.8L1149.4 245.8M1206.8 264.3L1202.8 282.4M1179.7 236.6L1155.8 233.7M1173.7 237.2L1149 234.1M1223.2 266.3L1219.4 284.5M1182.5 225L1158.7 222.2M1173.5 225.3L1148.6 222.3M1239.7 268.4L1236.1 286.6M1162.7 210.9L1161.7 210.8M1173.4 213.3L1148.2 210.3M1256.3 270.4L1252.8 288.7M1173.2 201L1147.8 198M1272.9 272.5L1269.6 290.8M1173 188.5L1147.5 185.5M1289.5 274.5L1286.4 292.9M1172.8 175.8L1147 172.8M1306.1 276.6L1303.2 295M1172.7 162.9L1146.6 159.9M1322.9 278.7L1320.1 297.1M1172.5 149.7L1146.2 146.7M1339.6 280.8L1334.8 315.5M1172.3 136.3L1119.4 130.2M1336.6 257.5L1334 275.4M1355 259.7L1367.4 261.2M1367.4 261.2L1365.1 279.3M1365.1 279.3L1352.7 277.7M1352.7 277.7L1355 259.7M1205.6 145.1L1179 142.1M1205.7 130L1205.8 119.7M1205.8 119.7L1178.8 116.6M1178.8 116.6L1178.9 126.9M1178.9 126.9L1205.7 130M1025.7 219.5L1014 218M1014 218L1008 235.1M1008 235.1L1019.8 236.6M1019.8 236.6L1025.7 219.5M1008.1 217.3L1002.1 234.4M988.3 221.5L976.6 220.1M1166.8 387.4L1164.4 397.9M1162.5 403L1146.7 400.9M1195 363.7L1195 370.8M1203.4 375.4L1181.1 372.5M1184.8 390.4L1181.2 389.9M1181.2 389.9L1181.2 383M1181.2 383L1195 384.8M1356.4 282.8L1354 301.3M1203.5 138.2L1195.3 137.3M1172.1 122.6L1145.4 119.6M1373.2 284.9L1372.4 291.6M1206 128L1184.6 125.6M1171.9 108.7L1144.9 105.6M1208.4 117.9L1186.2 115.4M1171.7 94.5L1144.5 91.4M1210.8 108L1188.8 105.5M1171.6 80L1144 76.9M1213.2 98.2L1191.3 95.8M1171.4 65.2L1143.5 62.2M1215.5 88.6L1193.8 86.1M1171.2 50.1L1143.1 47.1M1458 295.4L1456.8 314.2M1217.8 79L1196.2 76.6M1170.9 34.8L1142.6 31.7M1475.1 297.5L1474 316.4M1220.1 69.6L1198.6 67.2M1492.3 299.7L1491.4 318.6M1222.4 60.3L1201 58M1509.4 301.8L1508 340.1M1224.6 51.1L1182.2 46.5M1504 277.9L1516.6 279.5M1516.6 279.5L1516.3 286.4M1516.3 286.4L1503.7 284.8M1503.7 284.8L1503.2 296.3M1503.2 296.3L1516 297.9M1522.9 280.3L1535.5 281.8M1535.5 281.8L1535.1 300.3M1535.1 300.3L1522.4 298.7M1522.4 298.7L1522.9 280.3M1250.5 57.4L1252 50.6M1252 50.6L1230.7 48.3M1230.7 48.3L1229.1 55.1M1229.1 55.1L1250.5 57.4M1254.3 40.5L1252.8 47.2M1252.8 47.2L1244.8 46.4M1244.8 46.4L1246.3 39.7M1246.3 39.7L1233.1 38.3M1233.1 38.3L1231.5 44.9M869.8 200.4L858.4 199M858.4 199L850.9 215.7M850.9 215.7L862.4 217.1M862.4 217.1L869.8 200.4M841.3 196.9L852.7 198.3M852.7 198.3L849.9 204.5M849.9 204.5L838.4 203.1M838.4 203.1L833.6 213.6M833.6 213.6L845.1 215M832.7 202.4L821.3 201M1132.2 538.6L1129.4 550.9M1138.7 558.6L1136 571.2M1136 571.2L1125.1 569.6M1125.1 569.6L1128 557.1M1128 557.1L1110.2 554.4M1110.2 554.4L1107.2 566.9M1134.5 577.5L1131.7 590.3M1131.7 590.3L1102.7 585.9M1102.7 585.9L1105.7 573.2M1105.7 573.2L1134.5 577.5M1202.5 463.5L1202.5 469.6M1202.5 469.6L1194.8 468.5M1194.8 468.5L1194.8 466.3M1202.5 472.6L1202.4 478.5M1202.4 478.5L1182 475.7M1188.6 470.6L1202.5 472.6M1526.6 303.9L1526.2 322.9M1226.8 42.1L1205.7 39.8M1543.9 306.1L1543.6 325.1M1229 33.1L1208 30.9M1561.2 308.2L1561.1 327.3M1231.1 24.3L1210.2 22.1M1578.6 310.4L1578.7 329.5M1596 312.5L1596.3 331.7M1194.6 530.7L1194.6 536M1201.8 539.7L1201.8 544.9M1201.8 544.9L1194.6 543.9M1194.6 543.9L1194.6 538.6M1194.6 538.6L1194.6 543.9M1194.6 543.9L1182.6 542.2M1182.6 542.2L1182.5 536.9M1201.7 547.5L1201.7 552.7M1201.7 552.7L1182.6 549.9M1182.6 549.9L1182.6 544.8M1182.6 544.8L1201.7 547.5M1194.4 598.2L1194.4 602.8" stroke="#111" stroke-width="1" fill="none"/>
<path d="M1174 260.2L969.4 234.9M901.3 226.4L-139.2 97.5M1174 260.2L1135.3 419.9M1111.2 519.6L428.8 3338.8M1174 260.2L1175.8 394.9M1176.9 479.6L1181.7 833.8M1157.6 258.2L1153.1 276.2M1171.1 272.3L1146.6 269.2M1174.1 271.5L1150.1 268.5M1141.4 256.2L1136.6 274.1M1168.1 284.6L1143.5 281.5M1174.3 282.5L1150.4 279.5M1125.1 254.2L1120.2 272M1165.1 297L1140.3 293.8M1174.4 293.4L1150.8 290.4M1108.9 252.2L1103.8 270M1162 309.6L1137.1 306.4M1174.6 304.1L1151.1 301.1M1092.7 250.1L1087.5 267.9M1158.9 322.4L1133.8 319.2M1174.7 314.6L1151.5 311.6M1076.6 248.1L1071.2 265.9M1155.8 335.4L1130.4 332.2M1174.9 324.9L1151.8 321.9M1060.5 246.2L1054.9 263.8M1152.6 348.7L1127.1 345.3M1175 335.1L1152.1 332.1M1044.4 244.2L1038.7 261.8M1149.3 362.1L1123.6 358.7M1175.1 345.1L1152.4 342.1M1028.4 242.2L1022.5 259.8M1146 375.7L1120.1 372.3M1175.3 355L1152.7 352M1012.4 240.2L1000.2 275.7M1142.7 389.6L1105.6 384.6M1175.4 364.7L1130.8 358.8M996.5 238.2L990.3 255.7M1139.3 403.6L1117.5 400.7M1175.5 374.2L1153.3 371.3M980.6 236.3L976.7 246.9M1135.8 417.9L1128.2 416.9M1175.6 383.6L1153.6 380.7M1175.8 392.8L1153.9 389.9M1165.1 400.5L1154.2 399M901.5 226.9L894.5 243.7M886 224.5L878.6 241.8M1087 504.9L1086 504.8M870.4 222.6L862.8 239.8M1109.9 524.8L1081.9 520.7M854.8 220.7L839.2 255.3M1106 541.1L1049.6 532.9M839.2 218.7L831.4 235.8M1102 557.7L1073.5 553.5M823.7 216.8L815.7 233.9M1097.9 574.6L1069.2 570.3M808.2 214.9L800.1 231.9M1093.7 591.8L1064.8 587.4M792.8 213L784.5 229.9M1177 486L1169.8 485M1177.1 493.7L1161.7 491.5M1177.2 501.4L1157.4 498.5M1177.3 508.9L1157.6 506.1M1177.4 516.3L1157.9 513.5M1177.5 523.7L1158.1 520.9M1177.6 530.9L1139 525.3M1177.7 538L1158.5 535.2M1177.8 545.1L1158.8 542.3M1177.9 552L1159 549.2M1178 558.9L1159.2 556.1M1178.1 565.6L1159.4 562.9M1178.2 572.3L1159.6 569.6M1178.3 578.9L1159.8 576.1M1178.4 585.4L1160 582.7M1178.5 591.8L1160.2 589.1M1178.5 598.1L1142.4 592.7M1178.6 604.4L1160.6 601.7" stroke="#000" stroke-width="1.1" stroke-dasharray="1.7 1.8" fill="none"/>
<path d="M866.7 544.8L897.7 549" stroke="#f00" stroke-width="1.1"/>
<path d="M866.7 544.8L871.6 521.3" stroke="#0c0" stroke-width="1.1"/>
<path d="M866.7 544.8L866.7 523.5" stroke="#00f" stroke-width="1.2"/>
<path d="M901.5 546.5L907.8 553.5M907.8 546.5L901.5 553.5" stroke="#333" stroke-width="1"/>
<path d="M863.5 516.8L869.5 516.8L863.5 523.2L869.5 523.2" stroke="#111" stroke-width="1" fill="none"/>
<path d="M870 513L873 516M876.5 512.5L870.5 519" stroke="#333" stroke-width="0.9" fill="none"/>
</svg></div>
  <div id="sctool"></div>
  <svg id="icons" width="815" height="60" viewBox="785 600 815 60" style="position:absolute;left:0;top:600px"><path d="M809.2 611L822.5 617.9L822.5 633.5L809.2 640.5L796.4 633.5L796.4 617.9Z M796.4 617.9L809.2 625.3L822.5 617.9 M809.2 625.3L809.2 631" stroke="#1a1a1a" stroke-width="1.3" stroke-dasharray="2 1.6" fill="none"/>
<path d="M800 631.5h4.3l6.8 7l-6.8 7h-4.3l6.8-7Z M808.2 631.5h4.3l6.8 7l-6.8 7h-4.3l6.8-7Z" fill="#000"/>
<path d="M860.55 610.8L873.4 618.4L873.4 633.5L866 637.7 M855 637.7L847.7 633.5L847.7 618.4L860.55 610.8 M847.7 618.4L860.55 626.2L873.4 618.4 M860.55 626.2L860.55 631" stroke="#1a1a1a" stroke-width="1.35" fill="none"/>
<path d="M856 631.5h9v1.6l-3.2 3.2v1l3.5 5.5v1.4h2v1.6h-13v-1.6h2v-1.4l3.5-5.5v-1l-3.3-3.2Z" fill="#111"/><path d="M858.5 640.5l2-3l2 3Z" fill="#999"/>
<path d="M910.6 618.5v-4.3h4.3 M927.5 614.2h4.3v4.3 M931.8 630v4.3 M910.6 629.5v4.3h4.3" stroke="#111" stroke-width="1.8" fill="none"/>
<circle cx="921.1" cy="623.8" r="5.6" stroke="#1c1c1c" stroke-width="2.9" fill="none"/>
<path d="M925.7 629.0L932.1 637.3" stroke="#1c1c1c" stroke-width="3.6" stroke-linecap="butt"/>
<circle cx="972" cy="624.3" r="6.6" stroke="#1c1c1c" stroke-width="2.9" fill="none"/>
<path d="M976.6 629.5L983.0 637.8" stroke="#1c1c1c" stroke-width="3.6" stroke-linecap="butt"/>
<path d="M968.7 624.3h6.6 M972 621.0v6.6" stroke="#222" stroke-width="1.2"/>
<circle cx="1023.6" cy="624.1" r="6.6" stroke="#1c1c1c" stroke-width="2.9" fill="none"/>
<path d="M1028.2 629.3L1034.6 637.6" stroke="#1c1c1c" stroke-width="3.6" stroke-linecap="butt"/>
<path d="M1020.3 624.1h6.6" stroke="#333" stroke-width="1.4"/>
<path d="M1067.5 620.3A11 11 0 1 1 1066.3 630" stroke="#1c1c1c" stroke-width="3" fill="none"/>
<path d="M1064.4 615.8L1065.2 625.2L1072.8 622Z" fill="#1c1c1c"/>
<path d="M1125.9 625.2L1131.3 615.4L1143.2 615.7L1148.5 625.8L1142 635.9L1129.5 634.7Z M1125.9 625.2L1139 625.8 M1143.2 615.7L1139 625.8L1142 635.9" stroke="#2a2a2a" stroke-width="1.5" fill="none" stroke-linejoin="round"/>
<path d="M1146 621.5L1153 626L1146 630.3Z" fill="#111"/>
<path d="M1190.7 619.3L1201.4 622.8L1201.4 634.1L1190.7 638.3L1181.2 634.7L1180.6 622.3Z M1180.6 622.3L1190.7 625.8L1201.4 622.8 M1190.7 625.8L1190.7 638.3" stroke="#1e1e1e" stroke-width="1.4" fill="none" stroke-linejoin="round"/>
<path d="M1190.7 612.5L1194.5 620.5L1186.9 620.5Z" fill="#111"/>
<path d="M1239.4 613.3L1249.4 618.1L1250 629.4L1240 633.5L1229.9 630L1229.3 618.1Z M1239.4 613.3L1239.4 627L1229.9 630 M1239.4 627L1250 629.4" stroke="#2a2a2a" stroke-width="1.5" fill="none" stroke-linejoin="round"/>
<path d="M1236 632L1244 632L1240 640Z" fill="#111"/>
<path d="M1289.8 615.4L1301.7 615.4L1306.5 625.2L1302.3 635.3L1290.4 635.9L1285 625.8Z M1293.4 625.8L1306.5 625.2 M1289.8 615.4L1293.4 625.8L1290.4 635.9" stroke="#2a2a2a" stroke-width="1.5" fill="none" stroke-linejoin="round"/>
<path d="M1287.5 621.5L1280 625.8L1287.5 630Z" fill="#111"/>
<path d="M1334.9 621L1344.5 626.25L1344.5 637.6L1334.9 633.25Z" fill="#1a1a1a"/>
<path d="M1344.5 617.5L1355 621.9L1355 633.25L1344.5 637.6L1334.9 633.25L1334.9 621Z M1334.9 621L1344.5 626.25L1355 621.9 M1344.5 626.25L1344.5 637.6" stroke="#1a1a1a" stroke-width="1.5" fill="none" stroke-linejoin="round"/>
<path d="M1396.1 617.5L1406.1 621.9L1406.1 633.25L1400 628L1396.1 626.25Z" fill="#1a1a1a"/>
<path d="M1396.1 617.5L1406.1 621.9L1406.1 633.25L1396.1 637.6L1386.2 633.25L1386.2 621.9Z M1386.2 621.9L1396.1 626.25L1406.1 621.9 M1396.1 617.5L1396.1 637.6" stroke="#1a1a1a" stroke-width="1.5" fill="none" stroke-linejoin="round"/>
<rect x="1435" y="605" width="46.4" height="46" rx="3" fill="#c3c3c3"/>
<path d="M1447.4 626.3h12.6v14.8h-12.6Z M1447.4 626.3L1473.1 614.9L1460 626.3 M1460 641.1L1473.1 614.9" stroke="#111" stroke-width="1.5" fill="none" stroke-linejoin="round"/>
<path d="M1497.5 618.5h29.5v24h-29.5Z" stroke="#0a0a0a" stroke-width="2.4" fill="none"/>
<path d="M1503.4 623.6h17.5v13.2h-17.5Z M1497.5 618.5L1503.4 623.6 M1527 618.5L1520.9 623.6 M1527 642.5L1520.9 636.8 M1497.5 642.5L1503.4 636.8" stroke="#111" stroke-width="1.4" fill="none"/>
<path d="M891.5 607V650" stroke="#555" stroke-width="1" stroke-dasharray="1 2.2"/>
<path d="M1107.5 607V650" stroke="#555" stroke-width="1" stroke-dasharray="1 2.2"/>
<path d="M1426.4 607V650" stroke="#555" stroke-width="1" stroke-dasharray="1 2.2"/>
<path d="M1540.5 607V650" stroke="#555" stroke-width="1" stroke-dasharray="1 2.2"/>
<path d="M1580.5 622.5L1585.5 627.5L1580.5 632.5 M1586.5 622.5L1591.5 627.5L1586.5 632.5" stroke="#555" stroke-width="2" fill="none"/></svg>
  <div id="conhead"><svg width="18" height="18" style="position:absolute;left:2px;top:4.5px"><circle cx="8" cy="8" r="7.3" fill="#4a4a4a" stroke="#8a8a8a" stroke-width="0.8"/><path d="M5.2 5.2L10.8 10.8M10.8 5.2L5.2 10.8" stroke="#fff" stroke-width="2"/></svg><span>Console</span></div>
  <div id="console"><pre>Compiling design (CSG Tree generation)...
Compiling design (CSG Products generation)...
Geometries in cache: 5
Geometry cache size in bytes: 194200
CGAL Polyhedrons in cache: 0
CGAL cache size in bytes: 0
Compiling design (CSG Products normalization)...
Normalized CSG tree has 629 elements
Compile and preview finished.
Total rendering time: 0 hours, 0 minutes, 0 seconds</pre></div>
  <div id="scbot"></div><div id="status"><span id="st1">Viewport: translate = [ 1.36 -1.58 -2.64 ], rotate = [ 41.00 0.00 9.60 ], distance = 89.15</span><span id="st2">OpenSCAD 2015.03</span></div>
</div>

</body></html>
